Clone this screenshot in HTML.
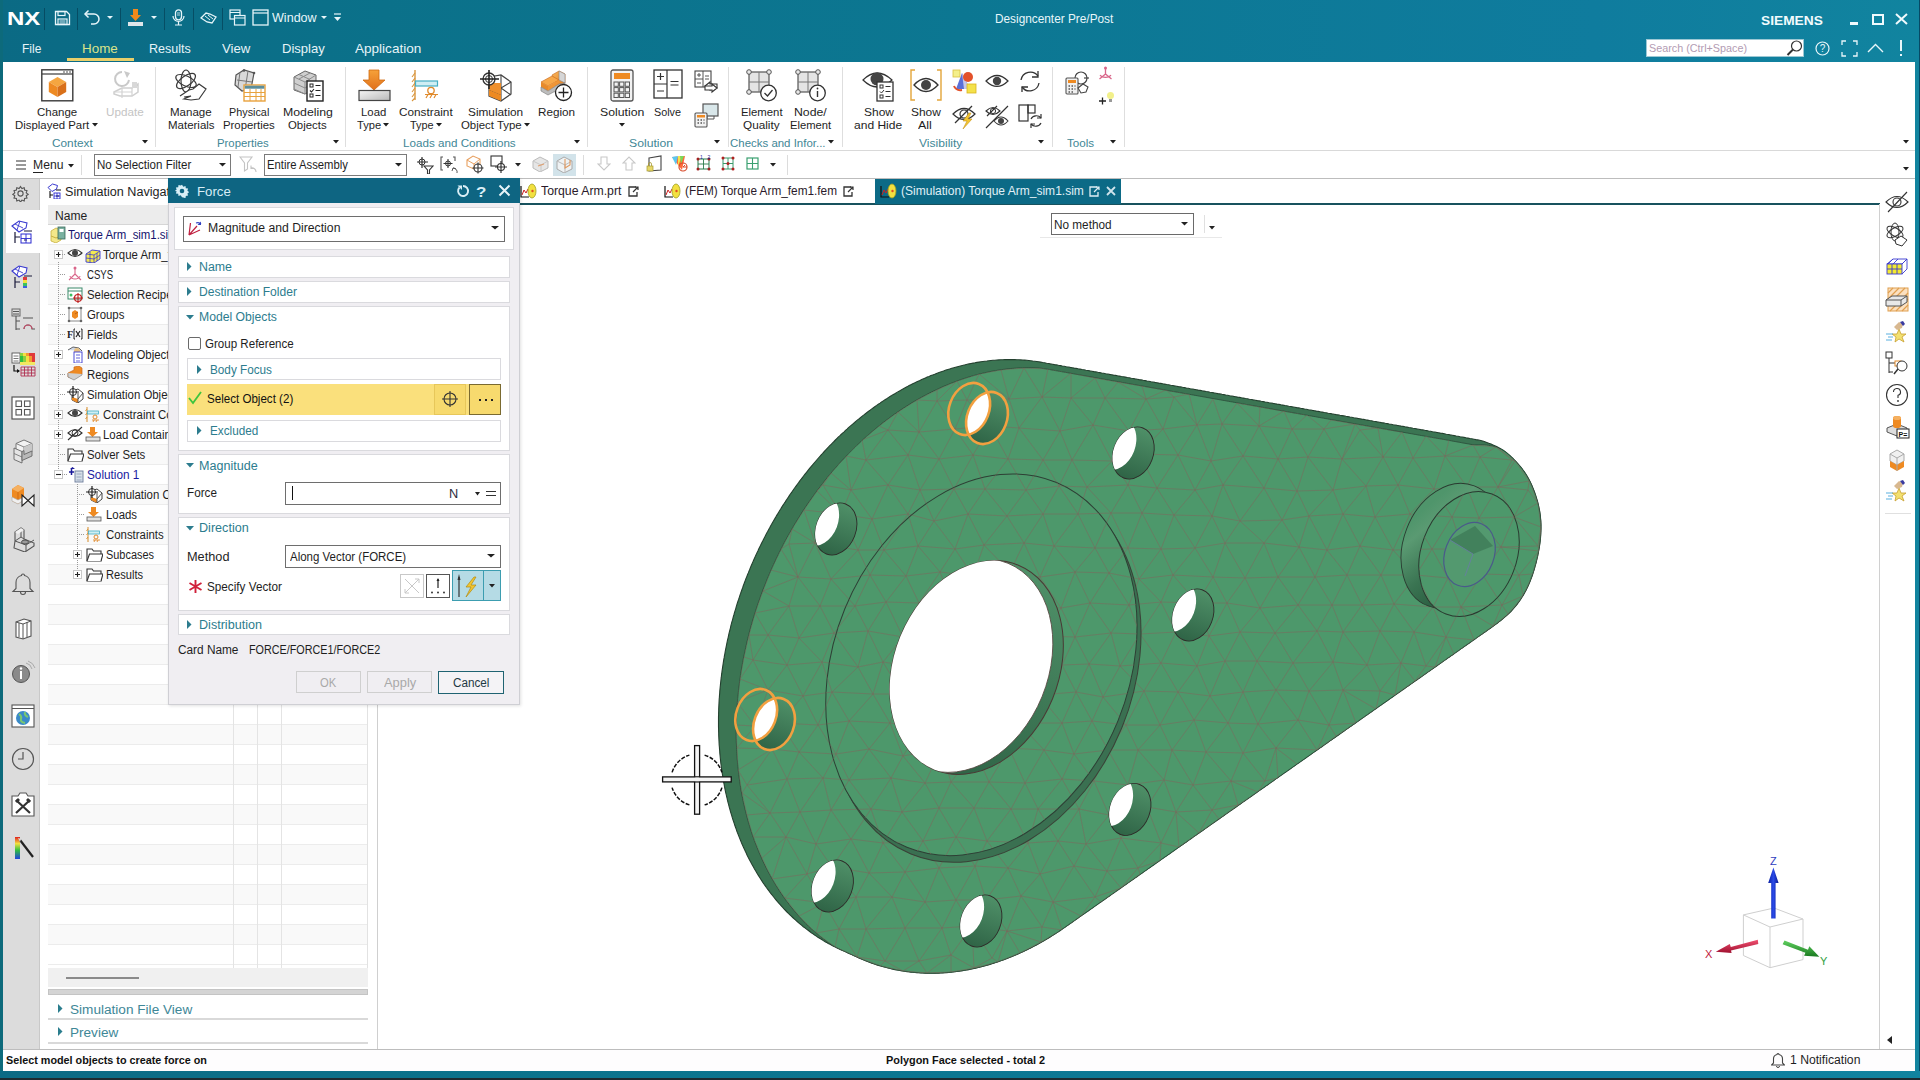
<!DOCTYPE html><html><head><meta charset="utf-8"><title>NX</title><style>
*{box-sizing:border-box}
html,body{margin:0;padding:0}
body{width:1920px;height:1080px;overflow:hidden;position:relative;background:#fff;font-family:"Liberation Sans",sans-serif}
body>div,body>svg{position:absolute}
.t{white-space:pre;transform-origin:0 50%}
</style></head><body><div style="left:0px;top:0px;width:1920px;height:62px;background:linear-gradient(90deg,#0b6a84 0%,#0b718a 20%,#0c7792 50%,#0f7c9e 83%,#11849f 100%)"></div><div style="left:0px;top:0px;width:3px;height:1080px;background:#0d6a7b"></div><div style="left:1915px;top:0px;width:5px;height:1080px;background:#11849f"></div><div style="left:1919px;top:0px;width:1px;height:1080px;background:#064a66"></div><div style="left:0px;top:1071px;width:1920px;height:9px;background:linear-gradient(90deg,#0b6a84 0%,#0b718a 20%,#0c7792 50%,#0f7c9e 83%,#11849f 100%)"></div><div style="left:0px;top:1078px;width:1920px;height:2px;background:#1d2a30"></div><div style="left:3px;top:62px;width:1912px;height:88px;background:#fff"></div><div style="left:3px;top:150px;width:1912px;height:1px;background:#d9d9d9"></div><div style="left:3px;top:151px;width:1912px;height:27px;background:#fff"></div><div style="left:3px;top:178px;width:1912px;height:1px;background:#bdbdbd"></div><div class="t" style="left:6.5px;top:7.4px;font-size:19px;line-height:24px;color:#ffffff;font-weight:bold;transform:scaleX(1.265);">NX</div><div style="left:44px;top:8px;width:1px;height:22px;background:rgba(0,40,60,0.45)"></div><div style="left:77px;top:8px;width:1px;height:22px;background:rgba(0,40,60,0.45)"></div><div style="left:120px;top:8px;width:1px;height:22px;background:rgba(0,40,60,0.45)"></div><div style="left:164px;top:8px;width:1px;height:22px;background:rgba(0,40,60,0.45)"></div><div style="left:193px;top:8px;width:1px;height:22px;background:rgba(0,40,60,0.45)"></div><div style="left:222px;top:8px;width:1px;height:22px;background:rgba(0,40,60,0.45)"></div><svg style="left:54px;top:10px;" width="17" height="16" viewBox="0 0 17 16"><path d="M1.5 1.5h11l3 3v10h-14z" fill="none" stroke="#e8f6fa" stroke-width="1.3"/><rect x="4" y="1.5" width="7" height="4" fill="none" stroke="#e8f6fa" stroke-width="1.2"/><rect x="4" y="9" width="9" height="5.5" fill="none" stroke="#e8f6fa" stroke-width="1.2"/><path d="M5.5 11h6M5.5 13h6" stroke="#e8f6fa" stroke-width="0.9"/></svg><svg style="left:82px;top:9px;" width="20" height="17" viewBox="0 0 20 17"><path d="M3 5h9a5 5 0 0 1 0 10H9" fill="none" stroke="#e8f6fa" stroke-width="1.5"/><path d="M6.5 1.5L3 5l3.5 3.5" fill="none" stroke="#e8f6fa" stroke-width="1.5"/></svg><svg style="left:107px;top:16px;" width="6" height="4" viewBox="0 0 6 4"><path d="M0 0h6l-3.0 3.0z" fill="#e8f6fa"/></svg><svg style="left:127px;top:9px;" width="17" height="17" viewBox="0 0 17 17"><path d="M6 0h5v6h3l-5.5 6L3 6h3z" fill="#f08a1c"/><rect x="1" y="13" width="15" height="4" fill="#dfe6ea"/></svg><svg style="left:151px;top:16px;" width="6" height="4" viewBox="0 0 6 4"><path d="M0 0h6l-3.0 3.0z" fill="#e8f6fa"/></svg><svg style="left:172px;top:9px;" width="13" height="17" viewBox="0 0 13 17"><rect x="3.5" y="0.8" width="6" height="10" rx="3" fill="none" stroke="#e8f6fa" stroke-width="1.3"/><path d="M1 7a5.5 5.5 0 0 0 11 0M6.5 12.5v3M3 16h7" fill="none" stroke="#e8f6fa" stroke-width="1.2"/><path d="M5 4h3M5 6h3" stroke="#e8f6fa" stroke-width="0.8"/></svg><svg style="left:200px;top:11px;" width="17" height="14" viewBox="0 0 17 14"><path d="M1 7l5-5 4 1 6 3-4 6-5-1z" fill="none" stroke="#e8f6fa" stroke-width="1.3"/><path d="M5 5l5 4M8 4l5 4" stroke="#e8f6fa" stroke-width="1"/></svg><svg style="left:229px;top:9px;" width="17" height="17" viewBox="0 0 17 17"><rect x="1" y="1" width="10" height="9" fill="none" stroke="#e8f6fa" stroke-width="1.2"/><rect x="5.5" y="6.5" width="10.5" height="9.5" fill="#0b718a" stroke="#e8f6fa" stroke-width="1.2"/><path d="M1 3.5h10M5.5 9h10.5" stroke="#e8f6fa" stroke-width="1.1"/></svg><svg style="left:252px;top:9px;" width="17" height="17" viewBox="0 0 17 17"><rect x="1" y="1" width="15" height="15" fill="none" stroke="#e8f6fa" stroke-width="1.3"/><path d="M1 4h15" stroke="#e8f6fa" stroke-width="1.2"/></svg><div class="t" style="left:272.4px;top:10.8px;font-size:12px;line-height:15px;color:#e8f6fa;transform:scaleX(1.047);">Window</div><svg style="left:321px;top:16px;" width="6" height="4" viewBox="0 0 6 4"><path d="M0 0h6l-3.0 3.0z" fill="#e8f6fa"/></svg><svg style="left:334px;top:13px;" width="7" height="9" viewBox="0 0 7 9"><path d="M0 1h7" stroke="#e8f6fa" stroke-width="1.2"/><path d="M0 4h7l-3.5 4z" fill="#e8f6fa"/></svg><div class="t" style="left:995.4px;top:10.7px;font-size:12.5px;line-height:16px;color:#e8f6fa;transform:scaleX(0.946);">Designcenter Pre/Post</div><div class="t" style="left:1761.3px;top:12.5px;font-size:13px;line-height:16px;color:#f2fbfd;font-weight:bold;transform:scaleX(1.056);">SIEMENS</div><div style="left:1850px;top:22px;width:8px;height:3px;background:#f0fafd"></div><div style="left:1872px;top:14px;width:12px;height:11px;border:2px solid #f0fafd"></div><svg style="left:1895px;top:13px;" width="13" height="12" viewBox="0 0 13 12"><path d="M1 1l11 10M12 1L1 11" stroke="#f0fafd" stroke-width="2"/></svg><div style="left:1646px;top:39px;width:158px;height:18px;background:#fff;border:1px solid #9cc8d4"></div><div class="t" style="left:1648.5px;top:41.2px;font-size:11px;line-height:14px;color:#b39cb3;transform:scaleX(0.981);">Search (Ctrl+Space)</div><svg style="left:1786px;top:40px;" width="17" height="16" viewBox="0 0 17 16"><circle cx="10.5" cy="6" r="5" fill="none" stroke="#333" stroke-width="1.2"/><path d="M7 9.5L1.5 15" stroke="#333" stroke-width="2"/></svg><svg style="left:1815px;top:41px;" width="16" height="15" viewBox="0 0 16 15"><circle cx="7.5" cy="7.5" r="6.5" fill="none" stroke="#e8f6fa" stroke-width="1.2"/><text x="7.5" y="11.3" font-size="10" text-anchor="middle" fill="#e8f6fa" font-family="Liberation Sans">?</text></svg><svg style="left:1841px;top:40px;" width="17" height="17" viewBox="0 0 17 17"><path d="M1 5V1h4M12 1h4v4M16 12v4h-4M5 16H1v-4" fill="none" stroke="#e8f6fa" stroke-width="1.3"/></svg><svg style="left:1867px;top:43px;" width="17" height="10" viewBox="0 0 17 10"><path d="M1 9l7.5-7.5L16 9" fill="none" stroke="#e8f6fa" stroke-width="1.4"/></svg><div style="left:1900px;top:40px;width:2px;height:11px;background:#e8f6fa"></div><div style="left:1900px;top:54px;width:2px;height:2px;background:#e8f6fa"></div><div class="t" style="left:22.4px;top:40.5px;font-size:13px;line-height:16px;color:#e6f4f8;transform:scaleX(0.921);">File</div><div class="t" style="left:82.3px;top:40.5px;font-size:13px;line-height:16px;color:#d9e38a;transform:scaleX(1.032);">Home</div><div style="left:67px;top:58px;width:67px;height:3px;background:#e9cf6a"></div><div class="t" style="left:149.3px;top:40.5px;font-size:13px;line-height:16px;color:#e6f4f8;transform:scaleX(0.964);">Results</div><div class="t" style="left:222.3px;top:40.5px;font-size:13px;line-height:16px;color:#e6f4f8;transform:scaleX(1.013);">View</div><div class="t" style="left:281.9px;top:40.5px;font-size:13px;line-height:16px;color:#e6f4f8;transform:scaleX(1.004);">Display</div><div class="t" style="left:355.4px;top:40.5px;font-size:13px;line-height:16px;color:#e6f4f8;transform:scaleX(1.042);">Application</div><div class="t" style="left:36.9px;top:105.0px;font-size:11.5px;line-height:14px;color:#1e1e1e;transform:scaleX(0.997);">Change</div><div class="t" style="left:15.4px;top:118.0px;font-size:11.5px;line-height:14px;color:#1e1e1e;transform:scaleX(0.992);">Displayed Part</div><svg style="left:92px;top:123px;" width="6" height="4" viewBox="0 0 6 4"><path d="M0 0h6l-3.0 3.5z" fill="#1e1e1e"/></svg><div class="t" style="left:105.9px;top:105.0px;font-size:11.5px;line-height:14px;color:#c4c4c4;transform:scaleX(1.015);">Update</div><div class="t" style="left:51.9px;top:135.5px;font-size:11.5px;line-height:14px;color:#3f8796;transform:scaleX(1.026);">Context</div><svg style="left:142px;top:139.5px;" width="6" height="4" viewBox="0 0 6 4"><path d="M0 0h6l-3.0 3.5z" fill="#1e1e1e"/></svg><div style="left:155px;top:67px;width:1px;height:80px;background:#dedede"></div><div class="t" style="left:170.1px;top:105.0px;font-size:11.5px;line-height:14px;color:#1e1e1e;transform:scaleX(1.002);">Manage</div><div class="t" style="left:168.1px;top:118.0px;font-size:11.5px;line-height:14px;color:#1e1e1e;transform:scaleX(0.998);">Materials</div><div class="t" style="left:229.0px;top:105.0px;font-size:11.5px;line-height:14px;color:#1e1e1e;transform:scaleX(0.941);">Physical</div><div class="t" style="left:223.2px;top:118.0px;font-size:11.5px;line-height:14px;color:#1e1e1e;transform:scaleX(0.988);">Properties</div><div class="t" style="left:283.2px;top:105.0px;font-size:11.5px;line-height:14px;color:#1e1e1e;transform:scaleX(1.069);">Modeling</div><div class="t" style="left:288.2px;top:118.0px;font-size:11.5px;line-height:14px;color:#1e1e1e;transform:scaleX(0.991);">Objects</div><div class="t" style="left:216.9px;top:135.5px;font-size:11.5px;line-height:14px;color:#3f8796;transform:scaleX(0.985);">Properties</div><svg style="left:333px;top:139.5px;" width="6" height="4" viewBox="0 0 6 4"><path d="M0 0h6l-3.0 3.5z" fill="#1e1e1e"/></svg><div style="left:345px;top:67px;width:1px;height:80px;background:#dedede"></div><div class="t" style="left:360.9px;top:105.0px;font-size:11.5px;line-height:14px;color:#1e1e1e;transform:scaleX(0.987);">Load</div><div class="t" style="left:357.4px;top:118.0px;font-size:11.5px;line-height:14px;color:#1e1e1e;transform:scaleX(0.969);">Type</div><svg style="left:383px;top:123px;" width="6" height="4" viewBox="0 0 6 4"><path d="M0 0h6l-3.0 3.5z" fill="#1e1e1e"/></svg><div class="t" style="left:399.4px;top:105.0px;font-size:11.5px;line-height:14px;color:#1e1e1e;transform:scaleX(1.024);">Constraint</div><div class="t" style="left:410.0px;top:118.0px;font-size:11.5px;line-height:14px;color:#1e1e1e;transform:scaleX(0.945);">Type</div><svg style="left:436px;top:123px;" width="6" height="4" viewBox="0 0 6 4"><path d="M0 0h6l-3.0 3.5z" fill="#1e1e1e"/></svg><div class="t" style="left:467.9px;top:105.0px;font-size:11.5px;line-height:14px;color:#1e1e1e;transform:scaleX(1.027);">Simulation</div><div class="t" style="left:460.9px;top:118.0px;font-size:11.5px;line-height:14px;color:#1e1e1e;transform:scaleX(0.992);">Object Type</div><svg style="left:524px;top:123px;" width="6" height="4" viewBox="0 0 6 4"><path d="M0 0h6l-3.0 3.5z" fill="#1e1e1e"/></svg><div class="t" style="left:537.9px;top:105.0px;font-size:11.5px;line-height:14px;color:#1e1e1e;transform:scaleX(1.017);">Region</div><div class="t" style="left:403.2px;top:135.5px;font-size:11.5px;line-height:14px;color:#3f8796;transform:scaleX(1.013);">Loads and Conditions</div><svg style="left:574px;top:139.5px;" width="6" height="4" viewBox="0 0 6 4"><path d="M0 0h6l-3.0 3.5z" fill="#1e1e1e"/></svg><div style="left:587px;top:67px;width:1px;height:80px;background:#dedede"></div><div class="t" style="left:600.0px;top:105.0px;font-size:11.5px;line-height:14px;color:#1e1e1e;transform:scaleX(1.066);">Solution</div><svg style="left:619px;top:123px;" width="6" height="4" viewBox="0 0 6 4"><path d="M0 0h6l-3.0 3.5z" fill="#1e1e1e"/></svg><div class="t" style="left:654.2px;top:105.0px;font-size:11.5px;line-height:14px;color:#1e1e1e;transform:scaleX(0.939);">Solve</div><div class="t" style="left:628.9px;top:135.5px;font-size:11.5px;line-height:14px;color:#3f8796;transform:scaleX(1.062);">Solution</div><svg style="left:714px;top:139.5px;" width="6" height="4" viewBox="0 0 6 4"><path d="M0 0h6l-3.0 3.5z" fill="#1e1e1e"/></svg><div style="left:728px;top:67px;width:1px;height:80px;background:#dedede"></div><div class="t" style="left:740.9px;top:105.0px;font-size:11.5px;line-height:14px;color:#1e1e1e;transform:scaleX(0.985);">Element</div><div class="t" style="left:742.9px;top:118.0px;font-size:11.5px;line-height:14px;color:#1e1e1e;transform:scaleX(1.024);">Quality</div><div class="t" style="left:793.8px;top:105.0px;font-size:11.5px;line-height:14px;color:#1e1e1e;transform:scaleX(1.067);">Node/</div><div class="t" style="left:790.0px;top:118.0px;font-size:11.5px;line-height:14px;color:#1e1e1e;transform:scaleX(0.975);">Element</div><div class="t" style="left:730.0px;top:135.5px;font-size:11.5px;line-height:14px;color:#3f8796;transform:scaleX(0.996);">Checks and Infor...</div><svg style="left:828px;top:139.5px;" width="6" height="4" viewBox="0 0 6 4"><path d="M0 0h6l-3.0 3.5z" fill="#1e1e1e"/></svg><div style="left:842px;top:67px;width:1px;height:80px;background:#dedede"></div><div class="t" style="left:863.6px;top:105.0px;font-size:11.5px;line-height:14px;color:#1e1e1e;transform:scaleX(1.041);">Show</div><div class="t" style="left:854.4px;top:118.0px;font-size:11.5px;line-height:14px;color:#1e1e1e;transform:scaleX(1.046);">and Hide</div><div class="t" style="left:910.7px;top:105.0px;font-size:11.5px;line-height:14px;color:#1e1e1e;transform:scaleX(1.038);">Show</div><div class="t" style="left:918.4px;top:118.0px;font-size:11.5px;line-height:14px;color:#1e1e1e;transform:scaleX(1.084);">All</div><div class="t" style="left:919.2px;top:135.5px;font-size:11.5px;line-height:14px;color:#3f8796;transform:scaleX(1.050);">Visibility</div><svg style="left:1038px;top:139.5px;" width="6" height="4" viewBox="0 0 6 4"><path d="M0 0h6l-3.0 3.5z" fill="#1e1e1e"/></svg><div style="left:1052px;top:67px;width:1px;height:80px;background:#dedede"></div><div class="t" style="left:1067.4px;top:135.5px;font-size:11.5px;line-height:14px;color:#3f8796;transform:scaleX(1.011);">Tools</div><svg style="left:1110px;top:139.5px;" width="6" height="4" viewBox="0 0 6 4"><path d="M0 0h6l-3.0 3.5z" fill="#1e1e1e"/></svg><div style="left:1124px;top:67px;width:1px;height:80px;background:#dedede"></div><svg style="left:1903px;top:139.5px;" width="6" height="4" viewBox="0 0 6 4"><path d="M0 0h6l-3.0 3.5z" fill="#1e1e1e"/></svg><svg style="left:1903px;top:167px;" width="6" height="4" viewBox="0 0 6 4"><path d="M0 0h6l-3.0 3.5z" fill="#1e1e1e"/></svg><svg style="left:41px;top:69px;" width="33" height="33" viewBox="0 0 33 33"><rect x="0.8" y="0.8" width="31" height="31" fill="#fff" stroke="#3a3a3a" stroke-width="1.4"/><path d="M0.8 5h31" stroke="#3a3a3a" stroke-width="1.2"/><circle cx="23" cy="3" r="0.8" fill="#3a3a3a"/><circle cx="26" cy="3" r="0.8" fill="#3a3a3a"/><circle cx="29" cy="3" r="0.8" fill="#3a3a3a"/><path d="M16.5 8L25.2 13.0L16.5 18L7.800000000000001 13.0z" fill="#f5a640"/><path d="M7.800000000000001 13.0L16.5 18L16.5 28L7.800000000000001 23.0z" fill="#ee8a22"/><path d="M25.2 13.0L16.5 18L16.5 28L25.2 23.0z" fill="#d9701a"/></svg><svg style="left:110px;top:70px;" width="32" height="31" viewBox="0 0 32 31"><path d="M12 2a7 7 0 1 0 7 8" fill="none" stroke="#c9c9c9" stroke-width="2"/><path d="M14 1l6 2-3 5z" fill="#c9c9c9"/><path d="M4 22l8-4 10 0 6-4v8l-6 4H10l-6-2z" fill="none" stroke="#cfcfcf" stroke-width="1.5"/><path d="M12 18v10M22 18v8M4 22h18" stroke="#d3d3d3" stroke-width="1.2"/><rect x="22" y="12" width="5" height="6" fill="#d8d8d8"/></svg><svg style="left:174px;top:69px;" width="34" height="33" viewBox="0 0 34 33"><ellipse cx="12" cy="12" rx="11" ry="5" fill="none" stroke="#3a3a3a" stroke-width="1.2" transform="rotate(25 12 12)"/><ellipse cx="12" cy="12" rx="11" ry="5" fill="none" stroke="#3a3a3a" stroke-width="1.2" transform="rotate(-35 12 12)"/><ellipse cx="12" cy="12" rx="5" ry="11" fill="none" stroke="#3a3a3a" stroke-width="1.2"/><path d="M6 27l9-6 4-1 6-5 7 5-7 10-8 1-7-1 7-3-7 1" fill="#fff" stroke="#3a3a3a" stroke-width="1.2"/></svg><svg style="left:233px;top:69px;" width="33" height="33" viewBox="0 0 33 33"><path d="M3 6l8-5 10 3-3 16-9 2-7-6z" fill="#d9d9d9" stroke="#555" stroke-width="1.2"/><path d="M7 3l-2 15M15 2l-3 19M4 11l15 2" stroke="#777" stroke-width="1"/><circle cx="11" cy="1.5" r="1.3" fill="#555"/><circle cx="21" cy="4" r="1.3" fill="#555"/><rect x="11" y="16" width="21" height="16" fill="#fff" stroke="#e8a23c" stroke-width="1.4"/><rect x="11.7" y="16.7" width="19.6" height="3" fill="#5b8e9c"/><path d="M11 23.5h21M11 27.5h21M17 20v12M23 20v12M28 20v12" stroke="#e8a23c" stroke-width="1"/></svg><svg style="left:292px;top:69px;" width="33" height="33" viewBox="0 0 33 33"><path d="M2 8l11-6 11 4v13l-11 6-11-4z" fill="#cfcfcf" stroke="#666" stroke-width="1"/><path d="M2 8l11 5 11-7M13 13v12M7 5.5l11 5M18 4l-11 6M2 14l11 5 11-7M2 20l11 5" stroke="#8a8a8a" stroke-width="1" fill="none"/><rect x="15" y="12" width="16" height="20" fill="#fff" stroke="#222" stroke-width="1.4"/><rect x="18" y="15" width="3" height="3" fill="none" stroke="#222"/><rect x="18" y="25" width="3" height="3" fill="none" stroke="#222"/><path d="M18 21.5l1.5 1.5 2.5-3M23.5 16.5h5M23.5 21.5h5M23.5 26.5h5" stroke="#222" stroke-width="1.1" fill="none"/></svg><svg style="left:358px;top:69px;" width="33" height="33" viewBox="0 0 33 33"><defs><linearGradient id="ga" x1="0" y1="0" x2="0" y2="1"><stop offset="0" stop-color="#f6a23a"/><stop offset="1" stop-color="#e0701a"/></linearGradient><linearGradient id="gb" x1="0" y1="0" x2="1" y2="1"><stop offset="0" stop-color="#f4f4f4"/><stop offset="1" stop-color="#b8b8b8"/></linearGradient></defs><path d="M11 1h10v10h6l-11 10L5 11h6z" fill="url(#ga)" stroke="#d06a10" stroke-width="0.8"/><rect x="1" y="21.5" width="31" height="10" fill="url(#gb)" stroke="#444" stroke-width="1.2"/></svg><svg style="left:410px;top:69px;" width="32" height="33" viewBox="0 0 32 33"><path d="M5 1v30" stroke="#d9963e" stroke-width="1.4"/><path d="M5 4l-3 4M5 9l-3 4M5 14l-3 4M5 19l-3 4M5 24l-3 4M5 29l-3 3" stroke="#d9963e" stroke-width="1.1"/><rect x="5.5" y="12" width="22" height="5" fill="#cfeef4" stroke="#46aec4" stroke-width="1.2"/><circle cx="21" cy="21.5" r="3.2" fill="none" stroke="#e08a2c" stroke-width="1.3"/><path d="M15 25.5h13M16 29l2-3.5M20 29l2-3.5M24 29l2-3.5" stroke="#e08a2c" stroke-width="1.2"/></svg><svg style="left:479px;top:69px;" width="33" height="33" viewBox="0 0 33 33"><path d="M10 8l12 -2 10 7v12l-10 7-12-5z" fill="#fff" stroke="#444" stroke-width="1.2"/><path d="M10 21l12 5M22 6v26M22 19l10-6M22 19l10 7" stroke="#444" stroke-width="1.1" fill="none"/><path d="M10 21l12 5v6l-12-5z" fill="#ee8a22"/><path d="M10 14h12v12l-12-5z" fill="#ee8a22" opacity="0.95"/><circle cx="10" cy="10" r="6" fill="#fff" stroke="#333" stroke-width="1.3"/><circle cx="10" cy="10" r="3.5" fill="none" stroke="#333" stroke-width="1"/><path d="M10 1v19M1 10h19" stroke="#222" stroke-width="1.6"/></svg><svg style="left:540px;top:69px;" width="33" height="33" viewBox="0 0 33 33"><defs><linearGradient id="rg1" x1="0" y1="0" x2="1" y2="1"><stop offset="0" stop-color="#f7b860"/><stop offset="1" stop-color="#e57a1a"/></linearGradient></defs><path d="M12 6l7-4 6 3v9l-7 4z" fill="url(#rg1)" stroke="#c8661a" stroke-width="0.6"/><path d="M19 2l6 3v9l-6-3z" fill="#d6d6d6" stroke="#888" stroke-width="0.6"/><path d="M1 13l11-6 7 4-11 6z" fill="#f6a84a" stroke="#c8661a" stroke-width="0.6"/><path d="M1 13l7 4v5l-7-4z" fill="#e88a2a"/><path d="M8 17l11-6v4l-11 7z" fill="#ef9536"/><path d="M1 18l7 4 11-7 6-1v3l-17 9-7-4z" fill="#bdbdbd" stroke="#777" stroke-width="0.6"/><circle cx="23.5" cy="23.5" r="8" fill="#fff" stroke="#222" stroke-width="1.3"/><path d="M23.5 18.5v10M18.5 23.5h10" stroke="#222" stroke-width="1.3"/></svg><svg style="left:610px;top:69px;" width="24" height="33" viewBox="0 0 24 33"><rect x="1" y="1" width="22" height="31" rx="2" fill="#f2f2f2" stroke="#555" stroke-width="1.3"/><rect x="4" y="4" width="16" height="6" fill="#ee8a22"/><rect x="4.0" y="13.0" width="4.3" height="4.3" fill="none" stroke="#555" stroke-width="1"/><rect x="9.6" y="13.0" width="4.3" height="4.3" fill="none" stroke="#555" stroke-width="1"/><rect x="15.2" y="13.0" width="4.3" height="4.3" fill="none" stroke="#555" stroke-width="1"/><rect x="4.0" y="18.6" width="4.3" height="4.3" fill="none" stroke="#555" stroke-width="1"/><rect x="9.6" y="18.6" width="4.3" height="4.3" fill="none" stroke="#555" stroke-width="1"/><rect x="15.2" y="18.6" width="4.3" height="4.3" fill="none" stroke="#555" stroke-width="1"/><rect x="4.0" y="24.2" width="4.3" height="4.3" fill="none" stroke="#555" stroke-width="1"/><rect x="9.6" y="24.2" width="4.3" height="4.3" fill="none" stroke="#555" stroke-width="1"/><rect x="15.2" y="24.2" width="4.3" height="4.3" fill="none" stroke="#555" stroke-width="1"/></svg><svg style="left:653px;top:69px;" width="30" height="30" viewBox="0 0 30 30"><rect x="1" y="1" width="28" height="28" fill="#fff" stroke="#333" stroke-width="1.3"/><path d="M14 1v28M1 15h13" stroke="#333" stroke-width="1.2"/><path d="M7.5 4v7M4 7.5h7M4 22h7M17.5 12.5h8M17.5 16h8" stroke="#333" stroke-width="1.2"/></svg><svg style="left:694px;top:70px;" width="25" height="24" viewBox="0 0 25 24"><rect x="1" y="1" width="16" height="16" fill="#fff" stroke="#444" stroke-width="1.1"/><path d="M9 1v16M1 9h8M5 3v4M3 5h4M3 13h4M11 6h4M11 9h4" stroke="#444" stroke-width="0.9"/><path d="M11 16l5-4v2h7v4h-7v2z" fill="#fff" stroke="#333" stroke-width="1.1"/><path d="M23 18l-5 4v-2h-7v-4h7v-2z" fill="#fff" stroke="#333" stroke-width="1.1"/></svg><svg style="left:694px;top:103px;" width="25" height="25" viewBox="0 0 25 25"><rect x="9" y="1" width="15" height="12" fill="#d9e7ea" stroke="#555" stroke-width="1.2"/><path d="M13 13v3h7v-3" stroke="#555" fill="none"/><rect x="1" y="10" width="12" height="14" rx="1" fill="#f2f2f2" stroke="#555" stroke-width="1.1"/><rect x="3" y="12" width="8" height="2.5" fill="#ee8a22"/><path d="M3.5 17h1.5M6.5 17h1.5M9.5 17h1M3.5 20h1.5M6.5 20h1.5M9.5 20h1" stroke="#555" stroke-width="1.5"/></svg><svg style="left:745px;top:69px;" width="33" height="33" viewBox="0 0 33 33"><rect x="4" y="3" width="20" height="20" fill="#e4e4e4" stroke="#555" stroke-width="1.2"/><path d="M14 3v20M4 13h20" stroke="#777" stroke-width="1"/><circle cx="4" cy="3" r="2.3" fill="#e8e8e8" stroke="#555" stroke-width="1"/><circle cx="24" cy="3" r="2.3" fill="#e8e8e8" stroke="#555" stroke-width="1"/><circle cx="4" cy="23" r="2.3" fill="#e8e8e8" stroke="#555" stroke-width="1"/><circle cx="23.5" cy="24" r="7.8" fill="#fff" stroke="#333" stroke-width="1.3"/><path d="M19.5 24l3 3 5-6" fill="none" stroke="#333" stroke-width="1.3"/></svg><svg style="left:794px;top:69px;" width="33" height="33" viewBox="0 0 33 33"><rect x="4" y="3" width="20" height="20" fill="#e4e4e4" stroke="#555" stroke-width="1.2"/><path d="M14 3v20M4 13h20" stroke="#777" stroke-width="1"/><circle cx="4" cy="3" r="2.3" fill="#e8e8e8" stroke="#555" stroke-width="1"/><circle cx="24" cy="3" r="2.3" fill="#e8e8e8" stroke="#555" stroke-width="1"/><circle cx="4" cy="23" r="2.3" fill="#e8e8e8" stroke="#555" stroke-width="1"/><circle cx="23.5" cy="24" r="7.8" fill="#fff" stroke="#333" stroke-width="1.3"/><path d="M23.5 22v6" stroke="#333" stroke-width="1.4"/><circle cx="23.5" cy="19.5" r="0.9" fill="#333"/></svg><svg style="left:862px;top:69px;" width="33" height="33" viewBox="0 0 33 33"><path d="M1 11Q15 -3 30 11Q15 25 1 11z" fill="#fff" stroke="#333" stroke-width="1.2"/><circle cx="15" cy="10" r="6.5" fill="#444"/><rect x="15" y="13" width="16" height="19" fill="#fff" stroke="#333" stroke-width="1.3"/><rect x="18" y="16" width="3" height="3" fill="none" stroke="#333"/><rect x="18" y="26" width="3" height="3" fill="none" stroke="#333"/><path d="M18 22.5l1.5 1.5 2.5-3M23.5 17.5h5M23.5 22.5h5M23.5 27.5h5" stroke="#333" stroke-width="1" fill="none"/></svg><svg style="left:910px;top:69px;" width="32" height="32" viewBox="0 0 32 32"><path d="M5 1H1v30h4M27 1h4v30h-4" fill="none" stroke="#e3a53a" stroke-width="1.4"/><path d="M4 16Q16 3 28 16Q16 29 4 16z" fill="#fff" stroke="#333" stroke-width="1.3"/><circle cx="16" cy="16" r="5" fill="#444"/></svg><svg style="left:952px;top:69px;" width="25" height="25" viewBox="0 0 25 25"><path d="M10 4l8 16H4z" fill="#5b6fd6"/><path d="M10 4l8 16h-6z" fill="#c8c8e8"/><circle cx="16" cy="8" r="5" fill="#e3512a"/><rect x="1" y="1" width="7" height="7" fill="#f4ef8a" stroke="#d9c040" stroke-width="0.8"/><rect x="15" y="15" width="9" height="9" fill="#f4e14a" stroke="#d9b520" stroke-width="0.8"/><path d="M2 17q2 5 8 4" stroke="#e3512a" stroke-width="2" fill="none"/></svg><svg style="left:985px;top:73px;" width="24" height="16" viewBox="0 0 24 16"><path d="M1 8Q12 -3 23 8Q12 19 1 8z" fill="#fff" stroke="#333" stroke-width="1.2"/><circle cx="12" cy="8" r="4.2" fill="#444"/></svg><svg style="left:1018px;top:70px;" width="25" height="24" viewBox="0 0 25 24"><path d="M20 6A9.5 9.5 0 0 0 3 10" fill="none" stroke="#333" stroke-width="1.3"/><path d="M4 17A9.5 9.5 0 0 0 21 13" fill="none" stroke="#333" stroke-width="1.3"/><path d="M20 1v6h-6" fill="none" stroke="#333" stroke-width="1.3"/><path d="M4 22v-5h6" fill="none" stroke="#333" stroke-width="1.3"/></svg><svg style="left:952px;top:104px;" width="25" height="25" viewBox="0 0 25 25"><path d="M1 10Q12 -1 23 10Q12 21 1 10z" fill="none" stroke="#333" stroke-width="1.2"/><circle cx="12" cy="10" r="4" fill="none" stroke="#333" stroke-width="1.2"/><path d="M3 19L20 2" stroke="#333" stroke-width="1.2"/><path d="M17 9l-6 8h4l-4 8 9-10h-4l3-6z" fill="#f2c531" stroke="#c9951a" stroke-width="0.6"/></svg><svg style="left:985px;top:104px;" width="24" height="25" viewBox="0 0 24 25"><path d="M1 7Q8 0 15 7Q8 14 1 7z" fill="none" stroke="#333" stroke-width="1.1"/><circle cx="8" cy="7" r="2.6" fill="none" stroke="#333"/><path d="M2 12L12 2M1 24L23 2" stroke="#333" stroke-width="1.2"/><path d="M9 17Q16 9 23 17Q16 25 9 17z" fill="#fff" stroke="#333" stroke-width="1.1"/><circle cx="16" cy="17" r="3" fill="#444"/></svg><svg style="left:1018px;top:104px;" width="25" height="25" viewBox="0 0 25 25"><rect x="1" y="1" width="9" height="16" fill="none" stroke="#333" stroke-width="1.2"/><rect x="10" y="1" width="7" height="8" fill="none" stroke="#333" stroke-width="1.2"/><path d="M23 14a6 6 0 0 0-10 1M13 20a6 6 0 0 0 10-1" fill="none" stroke="#333" stroke-width="1.2"/><path d="M23 10v4h-4M13 24v-4h4" fill="none" stroke="#333" stroke-width="1.2"/></svg><svg style="left:1065px;top:70px;" width="25" height="25" viewBox="0 0 25 25"><circle cx="16" cy="8" r="6" fill="none" stroke="#444" stroke-width="1.2"/><path d="M19 8h5" stroke="#444" stroke-width="1.2"/><rect x="1" y="8" width="12" height="16" rx="1" fill="#f0f0f0" stroke="#555" stroke-width="1.1"/><rect x="3" y="10" width="8" height="3" fill="#ee8a22"/><path d="M3.5 16h1.5M6.5 16h1.5M9.5 16h1M3.5 19h1.5M6.5 19h1.5M9.5 19h1M3.5 22h1.5M6.5 22h1.5" stroke="#555" stroke-width="1.5"/><path d="M13 18l5-4 5 3-2 5-5 1z" fill="#fff" stroke="#444" stroke-width="1.1"/></svg><svg style="left:1097px;top:66px;" width="17" height="16" viewBox="0 0 17 16"><path d="M8.5 8V2M8.5 8l-6 5M8.5 8l6 5" stroke="#d9668a" stroke-width="1.3"/><circle cx="8.5" cy="2" r="1.5" fill="#d9668a"/><path d="M3 9a6 4 0 0 0 11 0" fill="none" stroke="#d9668a" stroke-width="1.1"/></svg><svg style="left:1098px;top:91px;" width="17" height="15" viewBox="0 0 17 15"><path d="M1 10h7M4.5 6.5v7" stroke="#222" stroke-width="1.3"/><circle cx="12.5" cy="4.5" r="3.5" fill="#f2f08a"/><rect x="11" y="8" width="3" height="3" fill="#999"/></svg><svg style="left:16px;top:160px;" width="11" height="10" viewBox="0 0 11 10"><path d="M0 1h10M0 5h10M0 9h10" stroke="#333" stroke-width="1.2"/></svg><div class="t" style="left:32.7px;top:158.3px;font-size:12px;line-height:15px;color:#1e1e1e;transform:scaleX(1.013);">Menu</div><div style="left:33px;top:172px;width:10px;height:1px;background:#222"></div><svg style="left:68px;top:164px;" width="6" height="4" viewBox="0 0 6 4"><path d="M0 0h6l-3.0 3.5z" fill="#1e1e1e"/></svg><div style="left:81px;top:155px;width:1px;height:20px;background:#dcdcdc"></div><div style="left:94px;top:154px;width:137px;height:22px;background:#fff;border:1px solid #7a7a7a"></div><div class="t" style="left:96.9px;top:158.3px;font-size:12px;line-height:15px;color:#1e1e1e;transform:scaleX(0.962);">No Selection Filter</div><svg style="left:219px;top:163px;" width="7" height="4" viewBox="0 0 7 4"><path d="M0 0h7l-3.5 3.5z" fill="#222"/></svg><svg style="left:239px;top:156px;" width="18" height="18" viewBox="0 0 18 18"><path d="M1 1h12l-4.5 6v6l-3 2V7z" fill="none" stroke="#c3c3c3" stroke-width="1.1"/><path d="M17 16a4 4 0 0 0-5-4M12 9.5v3h3" fill="none" stroke="#c3c3c3" stroke-width="1.1"/></svg><div style="left:264px;top:154px;width:143px;height:22px;background:#fff;border:1px solid #7a7a7a"></div><div class="t" style="left:266.7px;top:158.3px;font-size:12px;line-height:15px;color:#1e1e1e;transform:scaleX(0.940);">Entire Assembly</div><svg style="left:395px;top:163px;" width="7" height="4" viewBox="0 0 7 4"><path d="M0 0h7l-3.5 3.5z" fill="#222"/></svg><svg style="left:416px;top:156px;" width="18" height="18" viewBox="0 0 18 18"><path d="M6 1v11M1 6h11" stroke="#333" stroke-width="1.2"/><circle cx="6" cy="6" r="3" fill="none" stroke="#333"/><path d="M8 10h9l-3.5 4v3.5l-2 1V14z" fill="#fff" stroke="#333" stroke-width="1.1"/></svg><svg style="left:440px;top:156px;" width="18" height="18" viewBox="0 0 18 18"><path d="M3 1H1v13h2M13 1h2v4" fill="none" stroke="#555" stroke-width="1.1"/><path d="M8 3v9M3.5 7.5h9" stroke="#333" stroke-width="1.1"/><circle cx="8" cy="7.5" r="2.5" fill="none" stroke="#333"/><path d="M17 17a4 4 0 0 0-4-5M12 15l1 -3 3 1" fill="none" stroke="#555" stroke-width="1"/></svg><svg style="left:466px;top:155px;" width="18" height="19" viewBox="0 0 18 19"><path d="M1 5l6-4 7 3v6l-6 4-7-3z" fill="#fff" stroke="#e8a060" stroke-width="1.1"/><path d="M1 5l7 4 6-5M8 9v5" stroke="#e8a060" stroke-width="1" fill="none"/><circle cx="12" cy="13" r="4" fill="#fff" stroke="#333" stroke-width="1.1"/><path d="M12 7.5v11M6.5 13h11" stroke="#333" stroke-width="1.1"/></svg><svg style="left:490px;top:155px;" width="18" height="19" viewBox="0 0 18 19"><rect x="1" y="1" width="11" height="10" fill="none" stroke="#333" stroke-width="1.1"/><circle cx="11" cy="12" r="3.5" fill="#fff" stroke="#333" stroke-width="1.1"/><path d="M11 6v12M5 12h12" stroke="#333" stroke-width="1.2"/></svg><svg style="left:515px;top:163px;" width="6" height="4" viewBox="0 0 6 4"><path d="M0 0h6l-3.0 3.5z" fill="#222"/></svg><svg style="left:532px;top:156px;" width="17" height="16" viewBox="0 0 17 16"><path d="M1 5l7-4 8 4v7l-8 4-7-4z" fill="#e6e6e6" stroke="#bbb" stroke-width="1"/><path d="M1 5l8 4 7-4M9 9v7" stroke="#c8c8c8" fill="none"/><path d="M6 10l6-2" stroke="#e0a070" stroke-width="1.2"/></svg><div style="left:553px;top:154px;width:23px;height:22px;background:#d2e3ea"></div><svg style="left:556px;top:156px;" width="17" height="17" viewBox="0 0 17 17"><path d="M1 5l7-4 8 4v8l-8 4-7-4z" fill="#eef2f4" stroke="#aaa" stroke-width="1"/><path d="M1 5l8 4 7-4M9 9v8" stroke="#bbb" fill="none"/><path d="M9 3v9l5-3V4" fill="none" stroke="#e09a60" stroke-width="1.1"/></svg><div style="left:583px;top:155px;width:1px;height:20px;background:#dcdcdc"></div><svg style="left:597px;top:156px;" width="14" height="15" viewBox="0 0 14 15"><path d="M4 1h6v7h3l-6 6-6-6h3z" fill="#fff" stroke="#c8c8c8" stroke-width="1.1"/></svg><svg style="left:622px;top:156px;" width="14" height="15" viewBox="0 0 14 15"><path d="M4 14h6V7h3L7 1 1 7h3z" fill="#fff" stroke="#c8c8c8" stroke-width="1.1"/></svg><svg style="left:646px;top:155px;" width="16" height="17" viewBox="0 0 16 17"><path d="M3 3l12-2v14l-12 1z" fill="#fff" stroke="#444" stroke-width="1.1"/><rect x="1" y="11" width="6" height="5" fill="#e6d86a" stroke="#a89a30" stroke-width="0.7"/><path d="M2.5 11V9a1.5 1.5 0 0 1 3 0v2" fill="none" stroke="#a89a30" stroke-width="0.8"/></svg><svg style="left:671px;top:155px;" width="17" height="17" viewBox="0 0 17 17"><path d="M1 2L14 1l-3 14z" fill="#ff6a3a"/><path d="M1 2l6-1 -2 9z" fill="#5ac8f0"/><path d="M7 1l4 0-4 10z" fill="#f2e64a"/><path d="M9 1l4 0-3 8z" fill="#7ad85a"/><circle cx="12" cy="12" r="4" fill="none" stroke="#d84a2a" stroke-width="1.2"/><path d="M16 12l-4 0 2-2" fill="none" stroke="#d84a2a"/></svg><svg style="left:695px;top:155px;" width="17" height="17" viewBox="0 0 17 17"><rect x="3" y="4" width="11" height="10" fill="none" stroke="#2a7a4a" stroke-width="1"/><path d="M8.5 4v10M3 9h11" stroke="#2a7a4a" stroke-width="0.9"/><circle cx="3" cy="4" r="1.5" fill="#a02020"/><circle cx="14" cy="4" r="1.5" fill="#a02020"/><circle cx="3" cy="14" r="1.5" fill="#a02020"/><circle cx="14" cy="14" r="1.5" fill="#a02020"/><text x="5" y="4" font-size="5" fill="#1a2a9a" font-family="Liberation Sans">1</text><text x="12.5" y="4" font-size="5" fill="#1a2a9a" font-family="Liberation Sans">2</text></svg><svg style="left:721px;top:156px;" width="14" height="15" viewBox="0 0 14 15"><rect x="2" y="2" width="10" height="11" fill="none" stroke="#3a9a6a" stroke-width="1"/><path d="M7 2v11M2 7.5h10" stroke="#3a9a6a"/><circle cx="2" cy="2" r="1.5" fill="#b02020"/><circle cx="12" cy="2" r="1.5" fill="#b02020"/><circle cx="2" cy="13" r="1.5" fill="#b02020"/><circle cx="12" cy="13" r="1.5" fill="#b02020"/><circle cx="7" cy="7.5" r="1.5" fill="#b02020"/></svg><svg style="left:746px;top:157px;" width="13" height="13" viewBox="0 0 13 13"><rect x="1" y="1" width="11" height="11" fill="none" stroke="#3aa070" stroke-width="1.2"/><path d="M6.5 1v11M1 6.5h11" stroke="#3aa070" stroke-width="1.1"/></svg><svg style="left:770px;top:163px;" width="6" height="4" viewBox="0 0 6 4"><path d="M0 0h6l-3.0 3.5z" fill="#222"/></svg><div style="left:787px;top:155px;width:1px;height:20px;background:#dcdcdc"></div><div style="left:3px;top:179px;width:36px;height:870px;background:#dcdcdc"></div><div style="left:39px;top:179px;width:1px;height:870px;background:#c9c9c9"></div><div style="left:6px;top:210px;width:34px;height:43px;background:#ffffff"></div><svg style="left:12px;top:185px;" width="17" height="17" viewBox="0 0 17 17"><path d="M8.5 1.5l1.4 2 2.3-.8.4 2.4 2.4.5-.8 2.3 2 1.4-2 1.4.8 2.3-2.4.5-.4 2.4-2.3-.8-1.4 2-1.4-2-2.3.8-.4-2.4-2.4-.5.8-2.3-2-1.4 2-1.4-.8-2.3 2.4-.5.4-2.4 2.3.8z" fill="none" stroke="#555" stroke-width="1.1"/><circle cx="8.5" cy="8.5" r="2.6" fill="none" stroke="#555" stroke-width="1.1"/></svg><svg style="left:11px;top:219px;" width="24" height="25" viewBox="0 0 24 25"><path d="M1 7l7-5 8 2-1 5-7 4z" fill="#fff" stroke="#3a3ad0" stroke-width="1.1"/><path d="M4 5l8 4M9 2l-3 9" stroke="#3a3ad0" stroke-width="0.9"/><path d="M4 13v11M4 18h5M13 12h8M13 21h3" stroke="#1a1a3a" stroke-width="1.2"/><rect x="10" y="15" width="10" height="9" fill="none" stroke="#2a2ad0" stroke-width="1"/><path d="M15 15v9M10 19.5h10" stroke="#2a2ad0" stroke-width="0.9"/></svg><svg style="left:11px;top:264px;" width="24" height="25" viewBox="0 0 24 25"><path d="M1 7l7-5 8 2-1 5-7 4z" fill="#fff" stroke="#3a3ad0" stroke-width="1.1"/><path d="M4 5l8 4M9 2l-3 9" stroke="#3a3ad0" stroke-width="0.9"/><path d="M4 13v11M4 18h5M13 12h8M13 21h3" stroke="#1a1a3a" stroke-width="1.2"/><rect x="12" y="13" width="4" height="11" fill="#e03a3a"/><rect x="12" y="16" width="4" height="3" fill="#f2e040"/><rect x="12" y="19" width="4" height="3" fill="#3ac060"/><rect x="12" y="22" width="4" height="2" fill="#3a60e0"/></svg><svg style="left:11px;top:308px;" width="24" height="23" viewBox="0 0 24 23"><rect x="1" y="1" width="8" height="7" fill="none" stroke="#666" stroke-width="1"/><path d="M2 3.5h6M2 6h6M5 8v14M5 13h4M5 21h4M12 10h10M13 21a4 4 0 0 1 8 0h3" fill="none" stroke="#555" stroke-width="1.1"/><path d="M13 21a4 4 0 0 1 8 0" fill="none" stroke="#d04a6a" stroke-width="1.1"/></svg><svg style="left:11px;top:352px;" width="25" height="25" viewBox="0 0 25 25"><rect x="1" y="1" width="8" height="10" fill="#fff" stroke="#555" stroke-width="0.9"/><path d="M2.5 4h5M2.5 6.5h5M2.5 9h5" stroke="#555" stroke-width="0.8"/><rect x="9" y="1" width="3" height="3" fill="#8ad040"/><rect x="12" y="1" width="3" height="3" fill="#f2e040"/><rect x="15" y="1" width="3" height="3" fill="#f29a30"/><rect x="18" y="1" width="3" height="3" fill="#e03a3a"/><rect x="21" y="1" width="3" height="3" fill="#e03a3a"/><rect x="9" y="4" width="3" height="3" fill="#2ec040"/><rect x="12" y="4" width="3" height="3" fill="#8ad040"/><rect x="15" y="4" width="3" height="3" fill="#f2e040"/><rect x="18" y="4" width="3" height="3" fill="#f29a30"/><rect x="21" y="4" width="3" height="3" fill="#e03a3a"/><rect x="9" y="7" width="3" height="3" fill="#2ec040"/><rect x="12" y="7" width="3" height="3" fill="#8ad040"/><rect x="15" y="7" width="3" height="3" fill="#f2e040"/><rect x="18" y="7" width="3" height="3" fill="#f29a30"/><rect x="21" y="7" width="3" height="3" fill="#e03a3a"/><rect x="9" y="10" width="15" height="3" fill="#f2e860"/><path d="M3 13v6h5" fill="none" stroke="#111" stroke-width="1.2"/><path d="M6 17l3 2-3 2z" fill="#111"/><path d="M10 15h14v9H10zM13.5 15v9M17 15v9M20.5 15v9M10 18h14M10 21h14" fill="none" stroke="#b03050" stroke-width="0.9"/></svg><svg style="left:11px;top:396px;" width="24" height="24" viewBox="0 0 24 24"><rect x="1" y="1" width="22" height="22" fill="#fff" stroke="#555" stroke-width="1.2"/><rect x="5" y="5" width="5.5" height="5.5" fill="none" stroke="#555" stroke-width="1.1"/><rect x="13.5" y="5" width="5.5" height="5.5" fill="none" stroke="#555" stroke-width="1.1"/><rect x="5" y="13.5" width="5.5" height="5.5" fill="none" stroke="#555" stroke-width="1.1"/><rect x="13.5" y="13.5" width="5.5" height="5.5" fill="none" stroke="#555" stroke-width="1.1"/></svg><svg style="left:12px;top:439px;" width="22" height="25" viewBox="0 0 22 25"><path d="M12 1l8 3.5v8l-8 3.5-8-3.5v-8z" fill="#f2f2f2" stroke="#666" stroke-width="0.9"/><path d="M4 4.5l8 3.5 8-3.5M12 8v8" fill="none" stroke="#777" stroke-width="0.9"/><path d="M12 8v8l8-3.5v-8z" fill="#c8c8c8"/><path d="M2 9l8 3.5v11.5l-8-3.5z" fill="#e4e4e4" stroke="#666" stroke-width="0.9"/><path d="M2 14.5l8 3.5" stroke="#777" stroke-width="0.9"/><path d="M10 12.5l2-0.9v3.9l8-3.5v5l-10 4.5z" fill="#b8b8b8" stroke="#666" stroke-width="0.9"/></svg><svg style="left:11px;top:483px;" width="25" height="25" viewBox="0 0 25 25"><path d="M1 6l6-4 6 3v12l-6 4-6-3z" fill="#ee8a22"/><path d="M7 2l6 3-6 4-6-3z" fill="#f5b060"/><path d="M7 9v12" stroke="#d06a10"/><path d="M1 14l6 3 6-3v3l-6 4-6-3z" fill="#f0f0f0" stroke="#aaa" stroke-width="0.6"/><path d="M11 12l12 11V12L11 23z" fill="#fff" stroke="#222" stroke-width="1.1"/></svg><svg style="left:11px;top:527px;" width="25" height="25" viewBox="0 0 25 25"><path d="M4 14V5l6-4 3 2v9l10 4v3l-9 6-11-4z" fill="#dcdcdc" stroke="#555" stroke-width="1.1"/><path d="M4 14l6-4V1M10 10l3 2M4 14l11 4 8-5M15 18v6" fill="none" stroke="#555" stroke-width="1"/><path d="M4 5l6-4 3 2-6 4z" fill="#f0f0f0"/><ellipse cx="14" cy="15" rx="3.5" ry="2" fill="#9a9a9a" stroke="#444" stroke-width="0.9"/></svg><svg style="left:11px;top:572px;" width="24" height="24" viewBox="0 0 24 24"><path d="M12 2a1.5 1.5 0 0 1 1.5 1.5 7 7 0 0 1 5.5 7v6l3 3H2l3-3v-6a7 7 0 0 1 5.5-7A1.5 1.5 0 0 1 12 2z" fill="none" stroke="#555" stroke-width="1.1"/><path d="M9.5 20a2.5 2.5 0 0 0 5 0" fill="none" stroke="#555" stroke-width="1.1"/></svg><svg style="left:14px;top:617px;" width="19" height="23" viewBox="0 0 19 23"><path d="M2 5l8-3 7 2v15l-8 3-7-2z" fill="#fff" stroke="#555" stroke-width="1.1"/><path d="M2 5l7 2 8-3M9 7v15M5 6v14M13 5v15" stroke="#555" fill="none"/></svg><svg style="left:11px;top:660px;" width="25" height="24" viewBox="0 0 25 24"><circle cx="10" cy="14" r="8.5" fill="#8a8a8a" stroke="#555"/><path d="M10 11v8" stroke="#fff" stroke-width="2"/><circle cx="10" cy="8.5" r="1.2" fill="#fff"/><path d="M15 3a8 8 0 0 1 6 6M17 1a11 11 0 0 1 7 7" fill="none" stroke="#aaa"/></svg><svg style="left:11px;top:704px;" width="24" height="24" viewBox="0 0 24 24"><rect x="1" y="1" width="22" height="22" fill="#fff" stroke="#555" stroke-width="1.1"/><path d="M1 4.5h22" stroke="#555"/><circle cx="12" cy="14" r="7" fill="#3a8ac8"/><path d="M8 10q3 2 2 5t4 4M14 8q-1 3 3 5" stroke="#7ac870" stroke-width="2" fill="none"/></svg><svg style="left:11px;top:747px;" width="24" height="24" viewBox="0 0 24 24"><circle cx="12" cy="12" r="10.5" fill="none" stroke="#555" stroke-width="1.2"/><path d="M12 5v7H7" fill="none" stroke="#555" stroke-width="1.2"/></svg><svg style="left:11px;top:792px;" width="24" height="25" viewBox="0 0 24 25"><path d="M1 4h6l2-3h6l2 3h6v20H1z" fill="#fff" stroke="#555" stroke-width="1.1"/><path d="M5 8l14 13M19 8L5 21" stroke="#333" stroke-width="2.2"/><path d="M4 9l3-3 2 2-3 3zM17 6l3 3-2 2-3-3z" fill="#333"/></svg><svg style="left:11px;top:836px;" width="24" height="25" viewBox="0 0 24 25"><rect x="4" y="1" width="5" height="22" fill="url(#rb)"/><defs><linearGradient id="rb" x1="0" y1="0" x2="0" y2="1"><stop offset="0" stop-color="#e02020"/><stop offset="0.3" stop-color="#f2e040"/><stop offset="0.6" stop-color="#30c040"/><stop offset="1" stop-color="#2040e0"/></linearGradient></defs><path d="M9 4l13 17" stroke="#222" stroke-width="2.2"/><path d="M7 2l3 1-1 3z" fill="#ddd"/></svg><div style="left:40px;top:179px;width:337px;height:870px;background:#ffffff"></div><div style="left:377px;top:179px;width:1px;height:870px;background:#cfcfcf"></div><svg style="left:47px;top:183px;" width="16" height="16" viewBox="0 0 16 16"><path d="M1 4.5l4.5-3.5 5 1.5-1 3.5-4.5 2.5z" fill="#fff" stroke="#3a3ad0" stroke-width="1"/><path d="M3 8v7M3 12h3M9 7h5M9 13h3" stroke="#111" stroke-width="1.1"/><rect x="7" y="10" width="6" height="6" fill="none" stroke="#2a2ad0" stroke-width="0.9"/><path d="M10 10v6M7 13h6" stroke="#2a2ad0" stroke-width="0.8"/></svg><div class="t" style="left:65.4px;top:183.7px;font-size:12.5px;line-height:16px;color:#1e1e1e;transform:scaleX(1.008);">Simulation Navigator</div><div style="left:48px;top:205px;width:320px;height:19px;background:#ececec"></div><div style="left:48px;top:224px;width:320px;height:1px;background:#d6d6d6"></div><div class="t" style="left:55.4px;top:209.3px;font-size:12px;line-height:15px;color:#1e1e1e;transform:scaleX(1.006);">Name</div><div style="left:48px;top:225px;width:320px;height:19px;background:#ffffff"></div><div style="left:48px;top:244px;width:320px;height:1px;background:#ececec"></div><div style="left:48px;top:245px;width:320px;height:19px;background:#f9f9f9"></div><div style="left:48px;top:264px;width:320px;height:1px;background:#ececec"></div><div style="left:48px;top:265px;width:320px;height:19px;background:#ffffff"></div><div style="left:48px;top:284px;width:320px;height:1px;background:#ececec"></div><div style="left:48px;top:285px;width:320px;height:19px;background:#f9f9f9"></div><div style="left:48px;top:304px;width:320px;height:1px;background:#ececec"></div><div style="left:48px;top:305px;width:320px;height:19px;background:#ffffff"></div><div style="left:48px;top:324px;width:320px;height:1px;background:#ececec"></div><div style="left:48px;top:325px;width:320px;height:19px;background:#f9f9f9"></div><div style="left:48px;top:344px;width:320px;height:1px;background:#ececec"></div><div style="left:48px;top:345px;width:320px;height:19px;background:#ffffff"></div><div style="left:48px;top:364px;width:320px;height:1px;background:#ececec"></div><div style="left:48px;top:365px;width:320px;height:19px;background:#f9f9f9"></div><div style="left:48px;top:384px;width:320px;height:1px;background:#ececec"></div><div style="left:48px;top:385px;width:320px;height:19px;background:#ffffff"></div><div style="left:48px;top:404px;width:320px;height:1px;background:#ececec"></div><div style="left:48px;top:405px;width:320px;height:19px;background:#f9f9f9"></div><div style="left:48px;top:424px;width:320px;height:1px;background:#ececec"></div><div style="left:48px;top:425px;width:320px;height:19px;background:#ffffff"></div><div style="left:48px;top:444px;width:320px;height:1px;background:#ececec"></div><div style="left:48px;top:445px;width:320px;height:19px;background:#f9f9f9"></div><div style="left:48px;top:464px;width:320px;height:1px;background:#ececec"></div><div style="left:48px;top:465px;width:320px;height:19px;background:#ffffff"></div><div style="left:48px;top:484px;width:320px;height:1px;background:#ececec"></div><div style="left:48px;top:485px;width:320px;height:19px;background:#f9f9f9"></div><div style="left:48px;top:504px;width:320px;height:1px;background:#ececec"></div><div style="left:48px;top:505px;width:320px;height:19px;background:#ffffff"></div><div style="left:48px;top:524px;width:320px;height:1px;background:#ececec"></div><div style="left:48px;top:525px;width:320px;height:19px;background:#f9f9f9"></div><div style="left:48px;top:544px;width:320px;height:1px;background:#ececec"></div><div style="left:48px;top:545px;width:320px;height:19px;background:#ffffff"></div><div style="left:48px;top:564px;width:320px;height:1px;background:#ececec"></div><div style="left:48px;top:565px;width:320px;height:19px;background:#f9f9f9"></div><div style="left:48px;top:584px;width:320px;height:1px;background:#ececec"></div><div style="left:48px;top:585px;width:320px;height:19px;background:#ffffff"></div><div style="left:48px;top:604px;width:320px;height:1px;background:#ececec"></div><div style="left:48px;top:605px;width:320px;height:19px;background:#f9f9f9"></div><div style="left:48px;top:624px;width:320px;height:1px;background:#ececec"></div><div style="left:48px;top:625px;width:320px;height:19px;background:#ffffff"></div><div style="left:48px;top:644px;width:320px;height:1px;background:#ececec"></div><div style="left:48px;top:645px;width:320px;height:19px;background:#f9f9f9"></div><div style="left:48px;top:664px;width:320px;height:1px;background:#ececec"></div><div style="left:48px;top:665px;width:320px;height:19px;background:#ffffff"></div><div style="left:48px;top:684px;width:320px;height:1px;background:#ececec"></div><div style="left:48px;top:685px;width:320px;height:19px;background:#f9f9f9"></div><div style="left:48px;top:704px;width:320px;height:1px;background:#ececec"></div><div style="left:48px;top:705px;width:320px;height:19px;background:#ffffff"></div><div style="left:48px;top:724px;width:320px;height:1px;background:#ececec"></div><div style="left:48px;top:725px;width:320px;height:19px;background:#f9f9f9"></div><div style="left:48px;top:744px;width:320px;height:1px;background:#ececec"></div><div style="left:48px;top:745px;width:320px;height:19px;background:#ffffff"></div><div style="left:48px;top:764px;width:320px;height:1px;background:#ececec"></div><div style="left:48px;top:765px;width:320px;height:19px;background:#f9f9f9"></div><div style="left:48px;top:784px;width:320px;height:1px;background:#ececec"></div><div style="left:48px;top:785px;width:320px;height:19px;background:#ffffff"></div><div style="left:48px;top:804px;width:320px;height:1px;background:#ececec"></div><div style="left:48px;top:805px;width:320px;height:19px;background:#f9f9f9"></div><div style="left:48px;top:824px;width:320px;height:1px;background:#ececec"></div><div style="left:48px;top:825px;width:320px;height:19px;background:#ffffff"></div><div style="left:48px;top:844px;width:320px;height:1px;background:#ececec"></div><div style="left:48px;top:845px;width:320px;height:19px;background:#f9f9f9"></div><div style="left:48px;top:864px;width:320px;height:1px;background:#ececec"></div><div style="left:48px;top:865px;width:320px;height:19px;background:#ffffff"></div><div style="left:48px;top:884px;width:320px;height:1px;background:#ececec"></div><div style="left:48px;top:885px;width:320px;height:19px;background:#f9f9f9"></div><div style="left:48px;top:904px;width:320px;height:1px;background:#ececec"></div><div style="left:48px;top:905px;width:320px;height:19px;background:#ffffff"></div><div style="left:48px;top:924px;width:320px;height:1px;background:#ececec"></div><div style="left:48px;top:925px;width:320px;height:19px;background:#f9f9f9"></div><div style="left:48px;top:944px;width:320px;height:1px;background:#ececec"></div><div style="left:48px;top:945px;width:320px;height:19px;background:#ffffff"></div><div style="left:48px;top:964px;width:320px;height:1px;background:#ececec"></div><div style="left:233px;top:604px;width:1px;height:364px;background:#e4e4e4"></div><div style="left:257px;top:604px;width:1px;height:364px;background:#e4e4e4"></div><div style="left:281px;top:604px;width:1px;height:364px;background:#e4e4e4"></div><div style="left:367px;top:224px;width:1px;height:744px;background:#e2e2e2"></div><div style="left:48px;top:968px;width:320px;height:19px;background:#f0f0f0"></div><div style="left:66px;top:977px;width:73px;height:2px;background:#8a8a8a"></div><div style="left:48px;top:989px;width:320px;height:6px;background:#d4d4d4;border:1px solid #c4c4c4"></div><svg style="left:58px;top:1004px;" width="5" height="9" viewBox="0 0 5 9"><path d="M0 0l4.5 4.5L0 9z" fill="#2a7d8d"/></svg><div class="t" style="left:70.4px;top:1001.7px;font-size:12.5px;line-height:16px;color:#3e8797;transform:scaleX(1.088);">Simulation File View</div><div style="left:48px;top:1018px;width:320px;height:2px;background:#d9d9d9"></div><svg style="left:58px;top:1027px;" width="5" height="9" viewBox="0 0 5 9"><path d="M0 0l4.5 4.5L0 9z" fill="#2a7d8d"/></svg><div class="t" style="left:70.4px;top:1024.7px;font-size:12.5px;line-height:16px;color:#3e8797;transform:scaleX(1.085);">Preview</div><div style="left:48px;top:1042px;width:320px;height:2px;background:#d9d9d9"></div><div style="left:58px;top:262px;width:1px;height:212px;background-image:linear-gradient(#999 50%,transparent 50%);background-size:1px 2px"></div><div style="left:77px;top:484px;width:1px;height:91px;background-image:linear-gradient(#999 50%,transparent 50%);background-size:1px 2px"></div><svg style="left:50px;top:226px;" width="16" height="17" viewBox="0 0 16 17"><path d="M1 5l5-3 5 2v10l-5 3-5-2z" fill="#f4e88a" stroke="#c8b040" stroke-width="0.8"/><path d="M1 10l5 2 5-2" stroke="#c8b040" fill="none"/><rect x="8" y="1" width="7" height="12" fill="#7ab0a0" stroke="#3a6a5a" stroke-width="0.8"/><rect x="9.5" y="3" width="4" height="3" fill="#fff"/></svg><div class="t" style="left:68.2px;top:227.8px;font-size:12px;line-height:15px;color:#14146e;transform:scaleX(0.950);">Torque Arm_sim1.sim</div><svg style="left:54px;top:250px;" width="9" height="9" viewBox="0 0 9 9"><rect x="0.5" y="0.5" width="8" height="8" fill="#fff" stroke="#c8c8c8"/><g stroke="#222" stroke-width="1.1"><path d="M2 4.5h5M4.5 2v5"/></g></svg><svg style="left:67px;top:246px;" width="16" height="17" viewBox="0 0 16 17"><path d="M1 7Q8 0 15 7Q8 14 1 7z" fill="#fff" stroke="#333" stroke-width="1.1"/><circle cx="8" cy="7" r="3" fill="#444"/></svg><svg style="left:85px;top:246px;" width="16" height="17" viewBox="0 0 16 17"><path d="M1 8l6-4 8 1v8l-6 4-8-1z" fill="#f4ea50" stroke="#3a3ad0" stroke-width="0.9"/><path d="M1 8l8 1 6-4M9 9v8M5 6v10M12 7v8M1 12l8 1 6-4" stroke="#3a3ad0" stroke-width="0.8" fill="none"/></svg><div class="t" style="left:103.3px;top:247.8px;font-size:12px;line-height:15px;color:#1e1e1e;transform:scaleX(0.950);">Torque Arm_fem1.fem</div><div style="left:60px;top:254px;width:6px;height:1px;background-image:linear-gradient(90deg,#999 50%,transparent 50%);background-size:2px 1px"></div><svg style="left:67px;top:266px;" width="16" height="17" viewBox="0 0 16 17"><path d="M8 8V2M8 8l-6 6M8 8l6 6" stroke="#d9668a" stroke-width="1.1"/><circle cx="8" cy="2" r="1.5" fill="#d9668a"/><path d="M3 10a5 3 0 0 0 10 0" fill="none" stroke="#d9668a"/></svg><div class="t" style="left:87.0px;top:267.8px;font-size:12px;line-height:15px;color:#1e1e1e;transform:scaleX(0.800);">CSYS</div><svg style="left:67px;top:286px;" width="17" height="17" viewBox="0 0 17 17"><rect x="1" y="2" width="14" height="11" fill="#fff" stroke="#3a8a6a" stroke-width="1"/><path d="M1 5h14" stroke="#3a8a6a"/><circle cx="4" cy="9" r="1.5" fill="#3ac060"/><circle cx="11" cy="12" r="3.5" fill="none" stroke="#c02020" stroke-width="1.2"/><path d="M11 7v10M6 12h10" stroke="#c02020" stroke-width="1.1"/></svg><div class="t" style="left:87.0px;top:287.8px;font-size:12px;line-height:15px;color:#1e1e1e;transform:scaleX(0.950);">Selection Recipes</div><svg style="left:67px;top:306px;" width="16" height="17" viewBox="0 0 16 17"><rect x="2" y="2" width="12" height="13" fill="none" stroke="#888"/><circle cx="2" cy="2" r="1.3" fill="#666"/><circle cx="14" cy="2" r="1.3" fill="#666"/><circle cx="2" cy="15" r="1.3" fill="#666"/><circle cx="14" cy="15" r="1.3" fill="#666"/><path d="M5 6l3-2 3 2v5l-3 2-3-2z" fill="#ee8a22"/><path d="M8 8l3-2" stroke="#c06010"/></svg><div class="t" style="left:87.0px;top:307.8px;font-size:12px;line-height:15px;color:#1e1e1e;transform:scaleX(0.950);">Groups</div><svg style="left:67px;top:326px;" width="16" height="17" viewBox="0 0 16 17"><text x="0" y="12" font-size="10" font-weight="bold" font-family="Liberation Serif" fill="#222">F</text><path d="M8 3H7v10h1M14 3h1v10h-1" stroke="#222" fill="none"/><path d="M9 5l4 6M13 5l-4 6" stroke="#222" stroke-width="1.2"/></svg><div class="t" style="left:87.0px;top:327.8px;font-size:12px;line-height:15px;color:#1e1e1e;transform:scaleX(0.950);">Fields</div><svg style="left:54px;top:350px;" width="9" height="9" viewBox="0 0 9 9"><rect x="0.5" y="0.5" width="8" height="8" fill="#fff" stroke="#c8c8c8"/><g stroke="#222" stroke-width="1.1"><path d="M2 4.5h5M4.5 2v5"/></g></svg><svg style="left:67px;top:346px;" width="16" height="17" viewBox="0 0 16 17"><path d="M1 4l5-3 6 1 3 3" fill="#cfd8e8" stroke="#555" stroke-width="0.9"/><circle cx="10" cy="5" r="3" fill="#e8c080"/><rect x="7" y="6" width="8" height="11" fill="#fff" stroke="#3a3ad0" stroke-width="0.9"/><path d="M9 9h4M9 12h4M9 15h4" stroke="#3a3ad0" stroke-width="0.8"/></svg><div class="t" style="left:87.0px;top:347.8px;font-size:12px;line-height:15px;color:#1e1e1e;transform:scaleX(0.950);">Modeling Objects</div><svg style="left:67px;top:366px;" width="16" height="17" viewBox="0 0 16 17"><path d="M1 7l6-3v-3l5-1 3 2v6l-8 5-6-2z" fill="#ee8a22" stroke="#c8661a" stroke-width="0.7"/><path d="M1 7v4l6 3 8-5V8" fill="#d0d0d0" stroke="#888" stroke-width="0.7"/></svg><div class="t" style="left:87.0px;top:367.8px;font-size:12px;line-height:15px;color:#1e1e1e;transform:scaleX(0.950);">Regions</div><svg style="left:67px;top:386px;" width="17" height="17" viewBox="0 0 17 17"><path d="M5 5l6-2 5 4v6l-5 4-6-3z" fill="#fff" stroke="#444" stroke-width="1"/><path d="M5 11l6 2v4l-6-3z" fill="#ee8a22"/><path d="M11 7v10M11 13l5-6" stroke="#444" stroke-width="0.9" fill="none"/><circle cx="6" cy="6" r="3.5" fill="#fff" stroke="#333"/><path d="M6 0v12M0 6h12" stroke="#222" stroke-width="1.2"/></svg><div class="t" style="left:87.0px;top:387.8px;font-size:12px;line-height:15px;color:#1e1e1e;transform:scaleX(0.950);">Simulation Objects</div><svg style="left:54px;top:410px;" width="9" height="9" viewBox="0 0 9 9"><rect x="0.5" y="0.5" width="8" height="8" fill="#fff" stroke="#c8c8c8"/><g stroke="#222" stroke-width="1.1"><path d="M2 4.5h5M4.5 2v5"/></g></svg><svg style="left:67px;top:406px;" width="16" height="17" viewBox="0 0 16 17"><path d="M1 7Q8 0 15 7Q8 14 1 7z" fill="#fff" stroke="#333" stroke-width="1.1"/><circle cx="8" cy="7" r="3" fill="#444"/></svg><svg style="left:85px;top:406px;" width="16" height="17" viewBox="0 0 16 17"><path d="M2 1v15" stroke="#d9963e" stroke-width="1.1"/><path d="M2 3l-1.5 2M2 7l-1.5 2M2 11l-1.5 2" stroke="#d9963e"/><rect x="2.5" y="5" width="11" height="3" fill="#cfeef4" stroke="#46aec4" stroke-width="0.8"/><circle cx="10" cy="11" r="2" fill="none" stroke="#e08a2c"/><path d="M7 14h7M8 16l1-2M11 16l1-2" stroke="#e08a2c" stroke-width="0.9"/></svg><div class="t" style="left:103.3px;top:407.8px;font-size:12px;line-height:15px;color:#1e1e1e;transform:scaleX(0.950);">Constraint Container</div><svg style="left:54px;top:430px;" width="9" height="9" viewBox="0 0 9 9"><rect x="0.5" y="0.5" width="8" height="8" fill="#fff" stroke="#c8c8c8"/><g stroke="#222" stroke-width="1.1"><path d="M2 4.5h5M4.5 2v5"/></g></svg><svg style="left:67px;top:426px;" width="16" height="17" viewBox="0 0 16 17"><path d="M1 7Q8 0 15 7Q8 14 1 7z" fill="none" stroke="#333" stroke-width="1.1"/><circle cx="8" cy="7" r="3" fill="none" stroke="#333"/><path d="M1 14L15 1" stroke="#333" stroke-width="1.1"/></svg><svg style="left:85px;top:426px;" width="16" height="17" viewBox="0 0 16 17"><path d="M5 1h5v5h3l-5.5 5L2 6h3z" fill="#ee8a22"/><rect x="1" y="11" width="14" height="4" fill="#e0e0e0" stroke="#555" stroke-width="0.8"/></svg><div class="t" style="left:103.3px;top:427.8px;font-size:12px;line-height:15px;color:#1e1e1e;transform:scaleX(0.950);">Load Container</div><svg style="left:67px;top:446px;" width="17" height="17" viewBox="0 0 17 17"><path d="M1 3h5l1.5 2H15v10H1z" fill="#fff" stroke="#333" stroke-width="1.1"/><path d="M1 15l2.5-7H17l-2 7" fill="#fff" stroke="#333" stroke-width="1.1"/></svg><div class="t" style="left:87.0px;top:447.8px;font-size:12px;line-height:15px;color:#1e1e1e;transform:scaleX(0.950);">Solver Sets</div><svg style="left:54px;top:470px;" width="9" height="9" viewBox="0 0 9 9"><rect x="0.5" y="0.5" width="8" height="8" fill="#fff" stroke="#c8c8c8"/><g stroke="#222" stroke-width="1.1"><path d="M2 4.5h5"/></g></svg><svg style="left:68px;top:466px;" width="16" height="17" viewBox="0 0 16 17"><path d="M1 6h5M3.5 3v6" stroke="#1a1a9a" stroke-width="1.5"/><path d="M2 3l2.5-2 2.5 2" fill="#1a1a9a"/><rect x="7" y="5" width="8" height="11" fill="#d8e0e8" stroke="#6a7a9a" stroke-width="0.9"/><path d="M8.5 8h5M8.5 11h5M8.5 14h5" stroke="#8a9ab8" stroke-width="0.8"/></svg><div class="t" style="left:86.6px;top:467.8px;font-size:12px;line-height:15px;color:#1a1aa0;transform:scaleX(0.980);">Solution 1</div><div style="left:62px;top:474px;width:5px;height:1px;background-image:linear-gradient(90deg,#999 50%,transparent 50%);background-size:2px 1px"></div><svg style="left:86px;top:486px;" width="17" height="17" viewBox="0 0 17 17"><path d="M5 5l6-2 5 4v6l-5 4-6-3z" fill="#fff" stroke="#444" stroke-width="1"/><path d="M5 11l6 2v4l-6-3z" fill="#ee8a22"/><path d="M11 7v10M11 13l5-6" stroke="#444" stroke-width="0.9" fill="none"/><circle cx="6" cy="6" r="3.5" fill="#fff" stroke="#333"/><path d="M6 0v12M0 6h12" stroke="#222" stroke-width="1.2"/></svg><div class="t" style="left:105.7px;top:487.8px;font-size:12px;line-height:15px;color:#1e1e1e;transform:scaleX(0.950);">Simulation Objects</div><svg style="left:86px;top:506px;" width="16" height="17" viewBox="0 0 16 17"><path d="M5 1h5v5h3l-5.5 5L2 6h3z" fill="#ee8a22"/><rect x="1" y="11" width="14" height="4" fill="#e0e0e0" stroke="#555" stroke-width="0.8"/></svg><div class="t" style="left:105.7px;top:507.8px;font-size:12px;line-height:15px;color:#1e1e1e;transform:scaleX(0.950);">Loads</div><svg style="left:86px;top:526px;" width="16" height="17" viewBox="0 0 16 17"><path d="M2 1v15" stroke="#d9963e" stroke-width="1.1"/><path d="M2 3l-1.5 2M2 7l-1.5 2M2 11l-1.5 2" stroke="#d9963e"/><rect x="2.5" y="5" width="11" height="3" fill="#cfeef4" stroke="#46aec4" stroke-width="0.8"/><circle cx="10" cy="11" r="2" fill="none" stroke="#e08a2c"/><path d="M7 14h7M8 16l1-2M11 16l1-2" stroke="#e08a2c" stroke-width="0.9"/></svg><div class="t" style="left:105.7px;top:527.8px;font-size:12px;line-height:15px;color:#1e1e1e;transform:scaleX(0.950);">Constraints</div><svg style="left:73px;top:550px;" width="9" height="9" viewBox="0 0 9 9"><rect x="0.5" y="0.5" width="8" height="8" fill="#fff" stroke="#c8c8c8"/><g stroke="#222" stroke-width="1.1"><path d="M2 4.5h5M4.5 2v5"/></g></svg><svg style="left:86px;top:546px;" width="17" height="17" viewBox="0 0 17 17"><path d="M1 3h5l1.5 2H15v10H1z" fill="#fff" stroke="#333" stroke-width="1.1"/><path d="M1 15l2.5-7H17l-2 7" fill="#fff" stroke="#333" stroke-width="1.1"/></svg><div class="t" style="left:105.7px;top:547.8px;font-size:12px;line-height:15px;color:#1e1e1e;transform:scaleX(0.910);">Subcases</div><svg style="left:73px;top:570px;" width="9" height="9" viewBox="0 0 9 9"><rect x="0.5" y="0.5" width="8" height="8" fill="#fff" stroke="#c8c8c8"/><g stroke="#222" stroke-width="1.1"><path d="M2 4.5h5M4.5 2v5"/></g></svg><svg style="left:86px;top:566px;" width="17" height="17" viewBox="0 0 17 17"><path d="M1 3h5l1.5 2H15v10H1z" fill="#fff" stroke="#333" stroke-width="1.1"/><path d="M1 15l2.5-7H17l-2 7" fill="#fff" stroke="#333" stroke-width="1.1"/></svg><div class="t" style="left:105.7px;top:567.8px;font-size:12px;line-height:15px;color:#1e1e1e;transform:scaleX(0.925);">Results</div><div style="left:60px;top:274px;width:6px;height:1px;background-image:linear-gradient(90deg,#999 50%,transparent 50%);background-size:2px 1px"></div><div style="left:60px;top:294px;width:6px;height:1px;background-image:linear-gradient(90deg,#999 50%,transparent 50%);background-size:2px 1px"></div><div style="left:60px;top:314px;width:6px;height:1px;background-image:linear-gradient(90deg,#999 50%,transparent 50%);background-size:2px 1px"></div><div style="left:60px;top:334px;width:6px;height:1px;background-image:linear-gradient(90deg,#999 50%,transparent 50%);background-size:2px 1px"></div><div style="left:60px;top:374px;width:6px;height:1px;background-image:linear-gradient(90deg,#999 50%,transparent 50%);background-size:2px 1px"></div><div style="left:60px;top:394px;width:6px;height:1px;background-image:linear-gradient(90deg,#999 50%,transparent 50%);background-size:2px 1px"></div><div style="left:60px;top:454px;width:6px;height:1px;background-image:linear-gradient(90deg,#999 50%,transparent 50%);background-size:2px 1px"></div><div style="left:79px;top:494px;width:6px;height:1px;background-image:linear-gradient(90deg,#999 50%,transparent 50%);background-size:2px 1px"></div><div style="left:79px;top:514px;width:6px;height:1px;background-image:linear-gradient(90deg,#999 50%,transparent 50%);background-size:2px 1px"></div><div style="left:79px;top:534px;width:6px;height:1px;background-image:linear-gradient(90deg,#999 50%,transparent 50%);background-size:2px 1px"></div><div style="left:378px;top:179px;width:1501px;height:25px;background:#ffffff"></div><div style="left:378px;top:203px;width:1502px;height:2px;background:#18525e"></div><div style="left:875px;top:179px;width:246px;height:25px;background:#0c6a86"></div><svg style="left:520px;top:183px;" width="17" height="16" viewBox="0 0 17 16"><path d="M1 3v11h8" fill="none" stroke="#111" stroke-width="1.2"/><path d="M2 12l2-5 2 3 2-4" fill="none" stroke="#d02020" stroke-width="1"/><ellipse cx="12" cy="8" rx="4" ry="7" fill="#f2e040" stroke="#a0a020" stroke-width="0.8"/><circle cx="12.5" cy="8" r="1.2" fill="#e05020"/></svg><div class="t" style="left:540.6px;top:184.3px;font-size:12px;line-height:15px;color:#2a1a2a;transform:scaleX(1.022);">Torque Arm.prt</div><svg style="left:628px;top:186px;" width="11" height="11" viewBox="0 0 11 11"><path d="M8 1H1v9h8V6" fill="none" stroke="#333" stroke-width="1.3"/><path d="M5 6l5-5M7 1h3v3" fill="none" stroke="#333" stroke-width="1.2"/></svg><svg style="left:664px;top:183px;" width="17" height="16" viewBox="0 0 17 16"><path d="M1 3v11h8" fill="none" stroke="#111" stroke-width="1.2"/><path d="M2 12l2-5 2 3 2-4" fill="none" stroke="#d02020" stroke-width="1"/><ellipse cx="12" cy="8" rx="4" ry="7" fill="#f2e040" stroke="#a0a020" stroke-width="0.8"/><circle cx="12.5" cy="8" r="1.2" fill="#e05020"/></svg><div class="t" style="left:684.9px;top:184.3px;font-size:12px;line-height:15px;color:#2a1a2a;transform:scaleX(0.984);">(FEM) Torque Arm_fem1.fem</div><svg style="left:843px;top:186px;" width="11" height="11" viewBox="0 0 11 11"><path d="M8 1H1v9h8V6" fill="none" stroke="#333" stroke-width="1.3"/><path d="M5 6l5-5M7 1h3v3" fill="none" stroke="#333" stroke-width="1.2"/></svg><svg style="left:880px;top:183px;" width="17" height="16" viewBox="0 0 17 16"><path d="M1 3v11h8" fill="none" stroke="#111" stroke-width="1.2"/><path d="M2 12l2-5 2 3 2-4" fill="none" stroke="#d02020" stroke-width="1"/><ellipse cx="12" cy="8" rx="4" ry="7" fill="#f2e040" stroke="#a0a020" stroke-width="0.8"/><circle cx="12.5" cy="8" r="1.2" fill="#e05020"/></svg><div class="t" style="left:900.6px;top:184.3px;font-size:12px;line-height:15px;color:#e0f0f6;transform:scaleX(1.002);">(Simulation) Torque Arm_sim1.sim</div><svg style="left:1089px;top:186px;" width="11" height="11" viewBox="0 0 11 11"><path d="M8 1H1v9h8V6" fill="none" stroke="#e0f0f6" stroke-width="1.3"/><path d="M5 6l5-5M7 1h3v3" fill="none" stroke="#e0f0f6" stroke-width="1.2"/></svg><svg style="left:1106px;top:186px;" width="10" height="10" viewBox="0 0 10 10"><path d="M1 1l8 8M9 1L1 9" stroke="#cfe4ec" stroke-width="1.8"/></svg><div style="left:1051px;top:213px;width:143px;height:22px;background:#fff;border:1px solid #6a6a6a"></div><div class="t" style="left:1053.9px;top:217.8px;font-size:12px;line-height:15px;color:#1e1e1e;transform:scaleX(0.980);">No method</div><svg style="left:1181px;top:222px;" width="7" height="4" viewBox="0 0 7 4"><path d="M0 0h7l-3.5 3.5z" fill="#222"/></svg><div style="left:1204px;top:215px;width:1px;height:18px;background:#e0e0e0"></div><svg style="left:1209px;top:226px;" width="6" height="4" viewBox="0 0 6 4"><path d="M0 0h6l-3.0 3.5z" fill="#222"/></svg><div style="left:1040px;top:237px;width:182px;height:1px;background:#e8e8e8"></div><div style="left:1879px;top:204px;width:1px;height:845px;background:#d0d0d0"></div><div style="left:1880px;top:204px;width:35px;height:845px;background:#ffffff"></div><svg style="left:1885px;top:191px;" width="25" height="25" viewBox="0 0 25 25"><path d="M1 11Q12 0 23 11Q12 22 1 11z" fill="none" stroke="#333" stroke-width="1.1"/><circle cx="12" cy="11" r="4" fill="none" stroke="#333" stroke-width="1.1"/><path d="M3 21L22 1" stroke="#333" stroke-width="1.1"/></svg><svg style="left:1885px;top:222px;" width="25" height="25" viewBox="0 0 25 25"><ellipse cx="10" cy="10" rx="9" ry="4" fill="none" stroke="#333" transform="rotate(30 10 10)"/><ellipse cx="10" cy="10" rx="9" ry="4" fill="none" stroke="#333" transform="rotate(-30 10 10)"/><ellipse cx="10" cy="10" rx="4" ry="9" fill="none" stroke="#333"/><path d="M10 18l6-4 6 4-5 6-6-2z" fill="#fff" stroke="#333"/></svg><svg style="left:1885px;top:254px;" width="25" height="25" viewBox="0 0 25 25"><path d="M2 10l6-5h14l-5 5z" fill="#fff" stroke="#3a3ad0" stroke-width="0.9"/><rect x="2" y="10" width="15" height="10" fill="#f4ea30" stroke="#3a3ad0" stroke-width="0.9"/><path d="M7 10v10M12 10v10M2 15h15M17 10l5-5v10l-5 5M8 5l-5 5M13 5l-5 5" stroke="#3a3ad0" stroke-width="0.9" fill="none"/></svg><svg style="left:1885px;top:287px;" width="25" height="25" viewBox="0 0 25 25"><rect x="3" y="1" width="20" height="23" fill="#fbe0c0" stroke="#e0a050" stroke-width="1"/><path d="M3 6l5-5M3 12l11-11M3 18l17-17M5 24l18-18M11 24l12-12M17 24l6-6" stroke="#e0a050" stroke-width="1.2"/><path d="M1 13l6-4h15v6l-6 4H1z" fill="#e8e8e8" stroke="#555" stroke-width="1"/><path d="M1 13h15l6-4M16 13v6" stroke="#555" fill="none"/></svg><svg style="left:1885px;top:320px;" width="25" height="25" viewBox="0 0 25 25"><path d="M14 9l2 5 5 0-4 3 2 5-5-3-4 3 1-5-4-3h5z" fill="#f2e070" stroke="#c8a030" stroke-width="0.8"/><path d="M9 7l5-5 4 2-1 4-5 2z" fill="#d8b890"/><path d="M15 2l3-1 2 3-2 2z" fill="#3a3aa0"/><path d="M1 14h7M3 17h5M1 20h6" stroke="#5ab0e0" stroke-width="1.2"/></svg><svg style="left:1885px;top:351px;" width="25" height="25" viewBox="0 0 25 25"><rect x="1" y="1" width="6" height="6" fill="none" stroke="#333"/><path d="M4 7v15M4 12h6M4 21h4" stroke="#333" fill="none"/><rect x="10" y="10" width="6" height="5" fill="none" stroke="#e08a2c"/><circle cx="17" cy="15" r="5" fill="#fff" stroke="#333"/><path d="M13 18l-4 5" stroke="#333" stroke-width="1.5"/></svg><svg style="left:1885px;top:383px;" width="25" height="25" viewBox="0 0 25 25"><circle cx="12" cy="12" r="10.5" fill="none" stroke="#333" stroke-width="1.1"/><path d="M8.5 9a3.5 3.5 0 1 1 4.5 3.3v2.7" fill="none" stroke="#333" stroke-width="1.1"/><circle cx="13" cy="18" r="0.9" fill="#333"/></svg><svg style="left:1885px;top:414px;" width="25" height="25" viewBox="0 0 25 25"><path d="M2 14l10-4 10 4v4l-10 4-10-4z" fill="#ddd" stroke="#555"/><path d="M8 4a4 2 0 0 1 8 0v8a4 2 0 0 1-8 0z" fill="#ee8a22"/><ellipse cx="12" cy="4" rx="4" ry="2" fill="#f5b060"/><rect x="12" y="15" width="12" height="9" fill="#fff" stroke="#222"/><text x="13.5" y="22.5" font-size="7" font-weight="bold" font-family="Liberation Sans" fill="#111">P=</text></svg><svg style="left:1885px;top:448px;" width="25" height="25" viewBox="0 0 25 25"><path d="M5 6l7-4 7 4v7l-7 4-7-4z" fill="#f0f0f0" stroke="#aaa"/><path d="M5 13l7 4 7-4v6l-7 4-7-4z" fill="#ee8a22"/><path d="M5 6l7 4 7-4M12 10v13" stroke="#aaa" fill="none"/></svg><svg style="left:1885px;top:479px;" width="25" height="25" viewBox="0 0 25 25"><path d="M14 9l2 5 5 0-4 3 2 5-5-3-4 3 1-5-4-3h5z" fill="#f2e070" stroke="#c8a030" stroke-width="0.8"/><path d="M9 7l5-5 4 2-1 4-5 2z" fill="#d8b890"/><path d="M15 2l3-1 2 3-2 2z" fill="#3a3aa0"/><path d="M1 14h7M3 17h5M1 20h6" stroke="#5ab0e0" stroke-width="1.2"/></svg><div style="left:1885px;top:513px;width:26px;height:1px;background:#e0e0e0"></div><svg style="left:1887px;top:1036px;" width="6" height="8" viewBox="0 0 6 8"><path d="M5 0v8L0 4z" fill="#222"/></svg><div style="left:3px;top:1049px;width:1912px;height:1px;background:#bdbdbd"></div><div style="left:3px;top:1050px;width:1912px;height:21px;background:#fefdfe"></div><div class="t" style="left:5.5px;top:1053.2px;font-size:11px;line-height:14px;color:#111;font-weight:bold;transform:scaleX(0.981);">Select model objects to create force on</div><div class="t" style="left:885.5px;top:1053.2px;font-size:11px;line-height:14px;color:#111;font-weight:bold;transform:scaleX(0.990);">Polygon Face selected - total 2</div><svg style="left:1771px;top:1052px;" width="14" height="16" viewBox="0 0 14 16"><path d="M7 1.5a1 1 0 0 1 1 1 4.5 4.5 0 0 1 3.5 4.5v4l2 2H.5l2-2v-4A4.5 4.5 0 0 1 6 2.5a1 1 0 0 1 1-1z" fill="none" stroke="#444" stroke-width="1.1"/><path d="M5.5 14a1.5 1.5 0 0 0 3 0" fill="none" stroke="#444"/></svg><div class="t" style="left:1790.2px;top:1053.3px;font-size:12px;line-height:15px;color:#1e1e1e;transform:scaleX(1.015);">1 Notification</div><svg style="left:1700px;top:850px;" width="135" height="125" viewBox="0 0 135 125">
<defs>
<linearGradient id="tz" x1="0" y1="0" x2="1" y2="0"><stop offset="0" stop-color="#0a1fa0"/><stop offset="0.5" stop-color="#2a4ae8"/><stop offset="1" stop-color="#0a1a90"/></linearGradient>
<linearGradient id="tx" x1="0" y1="0" x2="0" y2="1"><stop offset="0" stop-color="#f05070"/><stop offset="1" stop-color="#a01030"/></linearGradient>
<linearGradient id="ty" x1="0" y1="0" x2="0" y2="1"><stop offset="0" stop-color="#60d060"/><stop offset="1" stop-color="#1a7a20"/></linearGradient>
</defs>
<path d="M43.4 64.9L74 58L103 69L70 77z M43.4 64.9v40.6 M70 77v40.7 M103 69v40.6 M43.4 105.5L70 117.7L103 109.6" fill="none" stroke="#cfcfcf" stroke-width="1"/>
<path d="M73.4 17.5l-5.2 15.5h3v35.5h4.4v-35.5h3z" fill="url(#tz)"/>
<path d="M57.8 89.8l-27 7.3 -1 -3.2 -14 7.8 15.8 1.2 -0.6 -2.5 27.3 -6.4z" fill="url(#tx)"/>
<path d="M84.5 90.5l23.5 9.2 1.3 -3.5 10 10.5 -15.2 -1 1.3 -3 -22.8 -8.5z" fill="url(#ty)"/>
<text x="70" y="14.7" font-size="11" font-family="Liberation Sans" fill="#3040c0">Z</text>
<text x="5" y="108" font-size="11" font-family="Liberation Sans" fill="#c02040">X</text>
<text x="120" y="115" font-size="11" font-family="Liberation Sans" fill="#30a040">Y</text>
</svg><svg style="left:0px;top:0px;pointer-events:none" width="1920" height="1080" viewBox="0 0 1920 1080"><defs><clipPath id="cF"><path d="M1493.1 626.2L1491.7 627.3L1490.2 628.3L1488.6 629.4L1487.0 630.5L1485.4 631.7L1483.7 632.8L1482.1 634.0L1480.5 635.1L1478.8 636.3L1477.2 637.4L1475.6 638.6L1473.9 639.7L1472.3 640.9L1470.7 642.0L1469.0 643.2L1467.4 644.3L1465.7 645.5L1464.1 646.6L1462.5 647.8L1460.8 648.9L1459.2 650.1L1457.6 651.2L1455.9 652.4L1454.3 653.5L1452.7 654.7L1451.0 655.8L1449.4 657.0L1447.7 658.1L1446.1 659.3L1444.5 660.4L1442.8 661.6L1441.2 662.7L1439.6 663.9L1437.9 665.0L1436.3 666.2L1434.7 667.3L1433.0 668.5L1431.4 669.6L1429.8 670.8L1428.1 671.9L1426.5 673.1L1424.8 674.2L1423.2 675.4L1421.6 676.5L1419.9 677.7L1418.3 678.8L1416.7 680.0L1415.0 681.1L1413.4 682.3L1411.8 683.4L1410.1 684.6L1408.5 685.7L1406.8 686.9L1405.2 688.0L1403.6 689.2L1401.9 690.3L1400.3 691.5L1398.7 692.6L1397.0 693.8L1395.4 694.9L1393.8 696.1L1392.1 697.2L1390.5 698.4L1388.8 699.5L1387.2 700.7L1385.6 701.8L1383.9 703.0L1382.3 704.1L1380.7 705.3L1379.0 706.4L1377.4 707.6L1375.8 708.7L1374.1 709.9L1372.5 711.0L1370.8 712.2L1369.2 713.3L1367.6 714.5L1365.9 715.6L1364.3 716.8L1362.7 717.9L1361.0 719.1L1359.4 720.2L1357.8 721.4L1356.1 722.5L1354.5 723.7L1352.8 724.8L1351.2 726.0L1349.6 727.1L1347.9 728.3L1346.3 729.4L1344.7 730.6L1343.0 731.7L1341.4 732.9L1339.8 734.0L1338.1 735.2L1336.5 736.3L1334.9 737.5L1333.2 738.6L1331.6 739.8L1329.9 740.9L1328.3 742.1L1326.7 743.2L1325.0 744.4L1323.4 745.5L1321.8 746.7L1320.1 747.8L1318.5 749.0L1316.9 750.1L1315.2 751.3L1313.6 752.4L1311.9 753.6L1310.3 754.7L1308.7 755.9L1307.0 757.0L1305.4 758.2L1303.8 759.3L1302.1 760.5L1300.5 761.6L1298.9 762.8L1297.2 763.9L1295.6 765.1L1293.9 766.2L1292.3 767.4L1290.7 768.5L1289.0 769.7L1287.4 770.8L1285.8 772.0L1284.1 773.1L1282.5 774.3L1280.9 775.4L1279.2 776.6L1277.6 777.8L1275.9 778.9L1274.3 780.1L1272.7 781.2L1271.0 782.4L1269.4 783.5L1267.8 784.7L1266.1 785.8L1264.5 787.0L1262.9 788.1L1261.2 789.3L1259.6 790.4L1257.9 791.6L1256.3 792.7L1254.7 793.9L1253.0 795.0L1251.4 796.2L1249.8 797.3L1248.1 798.5L1246.5 799.6L1244.9 800.8L1243.2 801.9L1241.6 803.1L1240.0 804.2L1238.3 805.4L1236.7 806.5L1235.0 807.7L1233.4 808.8L1231.8 810.0L1230.1 811.1L1228.5 812.3L1226.9 813.4L1225.2 814.6L1223.6 815.7L1222.0 816.9L1220.3 818.0L1218.7 819.2L1217.0 820.3L1215.4 821.5L1213.8 822.6L1212.1 823.8L1210.5 824.9L1208.9 826.1L1207.2 827.2L1205.6 828.4L1204.0 829.5L1202.3 830.7L1200.7 831.8L1199.0 833.0L1197.4 834.1L1195.8 835.3L1194.1 836.4L1192.5 837.6L1190.9 838.7L1189.2 839.9L1187.6 841.0L1186.0 842.2L1184.3 843.3L1182.7 844.5L1181.0 845.6L1179.4 846.8L1177.8 847.9L1176.1 849.1L1174.5 850.2L1172.9 851.4L1171.2 852.5L1169.6 853.7L1168.0 854.8L1166.3 856.0L1164.7 857.1L1163.0 858.3L1161.4 859.4L1159.8 860.6L1158.1 861.7L1156.5 862.9L1154.9 864.0L1153.2 865.2L1151.6 866.3L1150.0 867.5L1148.3 868.6L1146.7 869.8L1145.1 870.9L1143.4 872.1L1141.8 873.2L1140.1 874.4L1138.5 875.5L1136.9 876.7L1135.2 877.8L1133.6 879.0L1132.0 880.1L1130.3 881.3L1128.7 882.4L1127.1 883.6L1125.4 884.7L1123.8 885.9L1122.1 887.0L1120.5 888.2L1118.9 889.3L1117.2 890.5L1115.6 891.6L1114.0 892.8L1112.3 893.9L1110.7 895.1L1109.1 896.2L1107.4 897.4L1105.8 898.5L1104.1 899.7L1102.5 900.8L1100.9 902.0L1099.2 903.1L1097.6 904.3L1096.0 905.4L1094.3 906.6L1092.7 907.7L1091.1 908.9L1089.4 910.0L1087.8 911.2L1086.1 912.3L1084.5 913.5L1082.9 914.6L1081.2 915.8L1079.6 916.9L1078.0 918.1L1076.3 919.2L1074.7 920.4L1073.1 921.5L1071.4 922.7L1069.8 923.8L1068.1 925.0L1066.5 926.1L1064.9 927.3L1063.2 928.4L1061.6 929.5L1059.9 930.6L1058.3 931.8L1056.6 932.9L1054.9 933.9L1053.2 935.0L1051.5 936.1L1049.8 937.1L1048.1 938.2L1046.4 939.2L1044.7 940.2L1043.0 941.2L1041.2 942.2L1039.5 943.2L1037.7 944.2L1036.0 945.1L1034.2 946.1L1032.4 947.0L1030.7 947.9L1028.9 948.8L1027.1 949.7L1025.3 950.6L1023.5 951.4L1021.7 952.3L1019.8 953.1L1018.0 953.9L1016.2 954.7L1014.3 955.5L1012.5 956.3L1010.6 957.0L1008.8 957.8L1006.9 958.5L1005.1 959.2L1003.2 959.9L1001.3 960.6L999.4 961.3L997.5 961.9L995.6 962.5L993.7 963.1L991.8 963.7L989.9 964.3L988.0 964.9L986.1 965.4L984.1 966.0L982.2 966.5L980.3 967.0L978.3 967.4L976.4 967.9L974.4 968.3L972.5 968.8L970.5 969.2L968.5 969.6L966.6 969.9L964.6 970.3L962.6 970.6L960.7 970.9L958.7 971.2L956.7 971.5L954.7 971.7L952.7 972.0L950.7 972.2L948.8 972.4L946.8 972.5L944.8 972.7L942.8 972.8L940.8 972.9L938.8 973.0L936.8 973.1L934.8 973.1L932.8 973.2L930.8 973.2L928.8 973.1L926.8 973.1L924.8 973.1L922.8 973.0L920.8 972.9L918.8 972.7L916.8 972.6L914.8 972.4L912.8 972.2L910.8 972.0L908.8 971.8L906.9 971.5L904.9 971.3L902.9 971.0L900.9 970.6L899.0 970.3L897.0 969.9L895.0 969.5L893.1 969.1L891.1 968.7L889.2 968.2L887.2 967.7L885.3 967.2L883.4 966.7L881.5 966.2L879.5 965.6L877.6 965.0L875.7 964.4L873.8 963.8L871.9 963.1L870.1 962.4L868.2 961.7L866.3 961.0L864.5 960.3L862.6 959.5L860.8 958.7L858.9 957.9L857.1 957.1L855.3 956.3L853.5 955.5L851.7 954.6L849.8 953.8L848.0 953.0L846.2 952.1L844.4 951.3L842.6 950.5L840.7 949.6L838.9 948.8L837.1 947.9L835.4 946.9L833.6 946.0L831.9 944.9L830.3 943.8L828.6 942.7L827.0 941.5L825.4 940.3L823.8 939.1L822.2 937.9L820.7 936.7L819.1 935.4L817.6 934.1L816.1 932.8L814.6 931.5L813.1 930.2L811.6 928.9L810.2 927.6L808.7 926.2L807.3 924.8L805.9 923.5L804.5 922.1L803.2 920.7L801.8 919.2L800.5 917.8L799.2 916.4L797.8 914.9L796.6 913.5L795.3 912.0L794.0 910.5L792.8 909.0L791.5 907.5L790.3 906.0L789.1 904.4L788.0 902.9L786.8 901.4L785.6 899.8L784.5 898.2L783.4 896.7L782.3 895.1L781.2 893.5L780.1 891.9L779.1 890.3L778.0 888.6L777.0 887.0L776.0 885.4L775.0 883.8L774.0 882.1L773.0 880.4L772.0 878.8L771.1 877.1L770.2 875.4L769.3 873.8L768.3 872.1L767.5 870.4L766.6 868.7L765.7 867.0L764.9 865.2L764.0 863.5L763.2 861.8L762.4 860.1L761.6 858.3L760.9 856.6L760.1 854.8L759.3 853.1L758.6 851.3L757.9 849.6L757.2 847.8L756.5 846.0L755.8 844.3L755.1 842.5L754.4 840.7L753.8 838.9L753.2 837.1L752.5 835.3L751.9 833.5L751.3 831.7L750.7 829.9L750.2 828.1L749.6 826.3L749.1 824.4L748.5 822.6L748.0 820.8L747.5 819.0L747.0 817.1L746.5 815.3L746.0 813.4L745.6 811.6L745.1 809.8L744.7 807.9L744.3 806.1L743.8 804.2L743.4 802.4L743.0 800.5L742.7 798.6L742.3 796.8L741.9 794.9L741.6 793.0L741.2 791.2L740.9 789.3L740.6 787.4L740.3 785.5L740.0 783.7L739.7 781.8L739.5 779.9L739.2 778.0L739.0 776.1L738.7 774.3L738.5 772.4L738.3 770.5L738.1 768.6L737.9 766.7L737.7 764.8L737.5 762.9L737.4 761.0L737.2 759.1L737.1 757.2L737.0 755.3L736.8 753.5L736.7 751.6L736.6 749.7L736.5 747.8L736.5 745.9L736.4 744.0L736.3 742.1L736.3 740.2L736.2 738.3L736.2 736.4L736.2 734.5L736.2 732.6L736.2 730.7L736.2 728.7L736.2 726.8L736.3 724.9L736.3 723.0L736.4 721.1L736.4 719.2L736.5 717.3L736.6 715.4L736.7 713.5L736.8 711.6L736.9 709.7L737.0 707.8L737.1 705.9L737.3 704.0L737.4 702.1L737.6 700.2L737.7 698.4L737.9 696.5L738.1 694.6L738.3 692.7L738.5 690.8L738.7 688.9L738.9 687.0L739.2 685.1L739.4 683.2L739.6 681.3L739.9 679.4L740.2 677.6L740.4 675.7L740.7 673.8L741.0 671.9L741.3 670.0L741.6 668.1L742.0 666.3L742.3 664.4L742.6 662.5L743.0 660.6L743.3 658.8L743.7 656.9L744.1 655.0L744.5 653.2L744.9 651.3L745.3 649.4L745.7 647.6L746.1 645.7L746.5 643.9L746.9 642.0L747.4 640.2L747.8 638.3L748.3 636.5L748.8 634.6L749.2 632.8L749.7 630.9L750.2 629.1L750.7 627.2L751.2 625.4L751.8 623.6L752.3 621.7L752.8 619.9L753.4 618.1L753.9 616.3L754.5 614.4L755.1 612.6L755.6 610.8L756.2 609.0L756.8 607.2L757.4 605.4L758.0 603.6L758.6 601.8L759.3 600.0L759.9 598.2L760.5 596.4L761.2 594.6L761.9 592.8L762.5 591.0L763.2 589.2L763.9 587.4L764.6 585.7L765.3 583.9L766.0 582.1L766.7 580.4L767.4 578.6L768.2 576.8L768.9 575.1L769.6 573.3L770.4 571.6L771.2 569.8L771.9 568.1L772.7 566.4L773.5 564.6L774.3 562.9L775.1 561.2L775.9 559.4L776.7 557.7L777.6 556.0L778.4 554.3L779.2 552.6L780.1 550.9L780.9 549.2L781.8 547.5L782.7 545.8L783.5 544.1L784.4 542.4L785.3 540.7L786.2 539.1L787.1 537.4L788.1 535.7L789.0 534.1L789.9 532.4L790.9 530.8L791.8 529.1L792.8 527.5L793.7 525.8L794.7 524.2L795.7 522.6L796.7 520.9L797.7 519.3L798.7 517.7L799.7 516.1L800.7 514.5L801.7 512.9L802.7 511.3L803.8 509.7L804.8 508.1L805.9 506.5L806.9 505.0L808.0 503.4L809.1 501.8L810.2 500.3L811.3 498.7L812.4 497.2L813.5 495.6L814.6 494.1L815.7 492.5L816.8 491.0L818.0 489.5L819.1 488.0L820.3 486.5L821.4 485.0L822.6 483.5L823.8 482.0L824.9 480.5L826.1 479.0L827.3 477.5L828.5 476.1L829.7 474.6L830.9 473.2L832.2 471.7L833.4 470.3L834.6 468.8L835.9 467.4L837.1 466.0L838.4 464.6L839.6 463.2L840.9 461.8L842.2 460.4L843.5 459.0L844.8 457.6L846.1 456.2L847.4 454.9L848.7 453.5L850.0 452.2L851.4 450.8L852.7 449.5L854.0 448.1L855.4 446.8L856.7 445.5L858.1 444.2L859.5 442.9L860.9 441.6L862.2 440.3L863.6 439.1L865.0 437.8L866.4 436.5L867.8 435.3L869.3 434.0L870.7 432.8L872.1 431.6L873.6 430.4L875.0 429.1L876.5 427.9L877.9 426.8L879.4 425.6L880.9 424.4L882.3 423.2L883.8 422.1L885.3 420.9L886.8 419.8L888.3 418.7L889.9 417.5L891.4 416.4L892.9 415.3L894.4 414.2L896.0 413.2L897.5 412.1L899.1 411.0L900.6 410.0L902.2 408.9L903.8 407.9L905.4 406.9L906.9 405.9L908.5 404.9L910.1 403.9L911.7 402.9L913.3 401.9L915.0 401.0L916.6 400.0L918.2 399.1L919.9 398.2L921.5 397.3L923.1 396.4L924.8 395.5L926.5 394.6L928.1 393.7L929.8 392.9L931.5 392.0L933.2 391.2L934.9 390.4L936.6 389.6L938.3 388.8L940.0 388.0L941.7 387.2L943.4 386.4L945.1 385.7L946.9 385.0L948.6 384.3L950.4 383.5L952.1 382.9L953.9 382.2L955.6 381.5L957.4 380.9L959.2 380.2L960.9 379.6L962.7 379.0L964.5 378.4L966.3 377.8L968.1 377.2L969.9 376.7L971.7 376.1L973.5 375.6L975.3 375.1L977.2 374.6L979.0 374.1L980.8 373.7L982.7 373.2L984.5 372.8L986.4 372.4L988.2 372.0L990.1 371.6L991.9 371.2L993.8 370.9L995.7 370.6L997.6 370.2L999.4 369.9L1001.3 369.7L1003.2 369.4L1005.1 369.2L1007.0 368.9L1008.9 368.7L1010.8 368.5L1012.7 368.4L1014.6 368.2L1016.5 368.1L1018.5 367.9L1020.4 367.9L1022.3 367.8L1024.2 367.7L1026.1 367.7L1028.1 367.7L1030.0 367.7L1031.9 367.7L1033.9 367.7L1035.8 367.8L1037.8 367.9L1039.7 368.1L1041.7 368.3L1043.6 368.6L1045.6 368.9L1047.6 369.2L1049.5 369.5L1051.5 369.9L1053.5 370.2L1055.4 370.6L1057.4 370.9L1059.4 371.3L1061.3 371.6L1063.3 372.0L1065.3 372.3L1067.3 372.7L1069.2 373.0L1071.2 373.4L1073.2 373.7L1075.1 374.1L1077.1 374.4L1079.1 374.8L1081.0 375.1L1083.0 375.5L1085.0 375.8L1086.9 376.2L1088.9 376.5L1090.9 376.9L1092.9 377.2L1094.8 377.6L1096.8 377.9L1098.8 378.3L1100.7 378.6L1102.7 379.0L1104.7 379.3L1106.6 379.7L1108.6 380.0L1110.6 380.4L1112.5 380.7L1114.5 381.1L1116.5 381.4L1118.5 381.8L1120.4 382.1L1122.4 382.5L1124.4 382.8L1126.3 383.2L1128.3 383.5L1130.3 383.9L1132.2 384.2L1134.2 384.6L1136.2 384.9L1138.1 385.3L1140.1 385.6L1142.1 386.0L1144.1 386.3L1146.0 386.7L1148.0 387.0L1150.0 387.4L1151.9 387.7L1153.9 388.1L1155.9 388.4L1157.8 388.8L1159.8 389.1L1161.8 389.5L1163.7 389.8L1165.7 390.2L1167.7 390.5L1169.7 390.9L1171.6 391.2L1173.6 391.6L1175.6 391.9L1177.5 392.2L1179.5 392.6L1181.5 392.9L1183.4 393.3L1185.4 393.6L1187.4 394.0L1189.3 394.3L1191.3 394.7L1193.3 395.0L1195.3 395.4L1197.2 395.7L1199.2 396.1L1201.2 396.4L1203.1 396.8L1205.1 397.1L1207.1 397.5L1209.0 397.8L1211.0 398.2L1213.0 398.5L1214.9 398.9L1216.9 399.2L1218.9 399.6L1220.9 399.9L1222.8 400.3L1224.8 400.6L1226.8 401.0L1228.7 401.3L1230.7 401.7L1232.7 402.0L1234.6 402.4L1236.6 402.7L1238.6 403.1L1240.5 403.4L1242.5 403.8L1244.5 404.1L1246.5 404.5L1248.4 404.8L1250.4 405.2L1252.4 405.5L1254.3 405.9L1256.3 406.2L1258.3 406.6L1260.2 406.9L1262.2 407.3L1264.2 407.6L1266.1 408.0L1268.1 408.3L1270.1 408.7L1272.1 409.0L1274.0 409.4L1276.0 409.7L1278.0 410.1L1279.9 410.4L1281.9 410.8L1283.9 411.1L1285.8 411.5L1287.8 411.8L1289.8 412.2L1291.7 412.5L1293.7 412.9L1295.7 413.2L1297.7 413.6L1299.6 413.9L1301.6 414.3L1303.6 414.6L1305.5 415.0L1307.5 415.3L1309.5 415.7L1311.4 416.0L1313.4 416.4L1315.4 416.7L1317.3 417.1L1319.3 417.4L1321.3 417.8L1323.3 418.1L1325.2 418.5L1327.2 418.8L1329.2 419.2L1331.1 419.5L1333.1 419.9L1335.1 420.2L1337.0 420.6L1339.0 420.9L1341.0 421.3L1342.9 421.6L1344.9 422.0L1346.9 422.3L1348.9 422.7L1350.8 423.0L1352.8 423.4L1354.8 423.7L1356.7 424.1L1358.7 424.4L1360.7 424.8L1362.6 425.1L1364.6 425.5L1366.6 425.8L1368.5 426.2L1370.5 426.5L1372.5 426.9L1374.4 427.2L1376.4 427.6L1378.4 427.9L1380.4 428.3L1382.3 428.6L1384.3 429.0L1386.3 429.3L1388.2 429.7L1390.2 430.0L1392.2 430.4L1394.1 430.7L1396.1 431.0L1398.1 431.4L1400.0 431.7L1402.0 432.1L1404.0 432.4L1406.0 432.8L1407.9 433.1L1409.9 433.5L1411.9 433.8L1413.8 434.2L1415.8 434.5L1417.8 434.9L1419.7 435.2L1421.7 435.6L1423.7 435.9L1425.6 436.3L1427.6 436.6L1429.6 437.0L1431.6 437.3L1433.5 437.7L1435.5 438.0L1437.5 438.4L1439.4 438.7L1441.4 439.0L1443.4 439.4L1445.3 439.7L1447.3 440.1L1449.3 440.4L1451.2 440.8L1453.2 441.2L1455.2 441.5L1457.1 441.9L1459.1 442.2L1461.1 442.6L1463.0 443.0L1465.0 443.3L1467.0 443.7L1468.9 444.0L1470.9 444.4L1472.9 444.6L1474.8 444.8L1476.8 444.9L1478.7 444.9L1480.7 444.8L1482.7 444.8L1484.6 444.8L1486.6 445.0L1488.6 445.3L1490.5 445.7L1492.5 446.1L1494.4 446.6L1496.4 447.1L1498.2 447.8L1500.0 448.7L1501.8 449.6L1503.5 450.7L1505.1 451.8L1506.7 453.0L1508.2 454.3L1509.7 455.6L1511.2 456.9L1512.7 458.3L1514.1 459.7L1515.5 461.1L1516.8 462.6L1518.2 464.1L1519.5 465.6L1520.7 467.2L1522.0 468.7L1523.1 470.3L1524.3 472.0L1525.4 473.6L1526.5 475.3L1527.5 477.0L1528.5 478.8L1529.4 480.5L1530.3 482.3L1531.2 484.1L1532.0 486.0L1532.8 487.8L1533.5 489.7L1534.2 491.5L1534.9 493.4L1535.6 495.3L1536.2 497.2L1536.7 499.1L1537.3 501.0L1537.8 503.0L1538.3 504.9L1538.7 506.8L1539.1 508.8L1539.5 510.8L1539.8 512.7L1540.1 514.7L1540.3 516.7L1540.5 518.7L1540.7 520.7L1540.8 522.7L1540.9 524.7L1540.9 526.7L1540.9 528.7L1540.9 530.7L1540.8 532.7L1540.7 534.7L1540.5 536.7L1540.4 538.6L1540.1 540.6L1539.9 542.6L1539.6 544.6L1539.4 546.6L1539.0 548.6L1538.7 550.5L1538.3 552.5L1537.9 554.4L1537.5 556.4L1537.1 558.4L1536.6 560.3L1536.1 562.2L1535.6 564.2L1535.1 566.1L1534.5 568.0L1534.0 569.9L1533.4 571.9L1532.8 573.8L1532.1 575.6L1531.4 577.5L1530.7 579.4L1530.0 581.3L1529.3 583.1L1528.5 584.9L1527.6 586.8L1526.8 588.6L1525.9 590.3L1524.9 592.1L1523.9 593.8L1522.9 595.6L1521.9 597.3L1520.8 598.9L1519.7 600.6L1518.5 602.2L1517.3 603.8L1516.1 605.4L1514.8 607.0L1513.5 608.5L1512.2 610.0L1510.8 611.4L1509.4 612.8L1508.0 614.2L1506.5 615.6L1505.0 616.9L1503.5 618.2L1501.9 619.4L1500.4 620.7L1498.8 621.9L1497.3 623.1L1495.9 624.2L1494.5 625.2z"/></clipPath><clipPath id="ch0"><ellipse cx="1133.3" cy="453.0" rx="26.8" ry="19.9" transform="rotate(-69 1133.3 453.0)" fill="none" stroke="none" stroke-width="1" /></clipPath><clipPath id="ch1"><ellipse cx="987.0" cy="418.0" rx="26.8" ry="19.9" transform="rotate(-69 987.0 418.0)" fill="none" stroke="none" stroke-width="1" /></clipPath><clipPath id="ch2"><ellipse cx="836.0" cy="529.0" rx="26.8" ry="19.9" transform="rotate(-69 836.0 529.0)" fill="none" stroke="none" stroke-width="1" /></clipPath><clipPath id="ch3"><ellipse cx="774.0" cy="724.0" rx="26.8" ry="19.9" transform="rotate(-69 774.0 724.0)" fill="none" stroke="none" stroke-width="1" /></clipPath><clipPath id="ch4"><ellipse cx="832.5" cy="886.0" rx="26.8" ry="19.9" transform="rotate(-69 832.5 886.0)" fill="none" stroke="none" stroke-width="1" /></clipPath><clipPath id="ch5"><ellipse cx="981.0" cy="921.0" rx="26.8" ry="19.9" transform="rotate(-69 981.0 921.0)" fill="none" stroke="none" stroke-width="1" /></clipPath><clipPath id="ch6"><ellipse cx="1130.0" cy="809.5" rx="26.8" ry="19.9" transform="rotate(-69 1130.0 809.5)" fill="none" stroke="none" stroke-width="1" /></clipPath><clipPath id="ch7"><ellipse cx="1193.0" cy="615.0" rx="26.8" ry="19.9" transform="rotate(-69 1193.0 615.0)" fill="none" stroke="none" stroke-width="1" /></clipPath><clipPath id="cH"><ellipse cx="976.5" cy="667.5" rx="110.5" ry="82.2" transform="rotate(-67.7 976.5 667.5)" fill="none" stroke="none" stroke-width="1" /></clipPath><clipPath id="cB"><ellipse cx="1469.0" cy="554.0" rx="64.3" ry="47.7" transform="rotate(-69 1469.0 554.0)" fill="none" stroke="none" stroke-width="1" /></clipPath><linearGradient id="gw" x1="0" y1="0" x2="1" y2="0"><stop offset="0" stop-color="#2f6446"/><stop offset="1" stop-color="#4f9068"/></linearGradient></defs><path d="M1493.6 625.9L1491.9 627.1L1490.3 628.2L1488.7 629.4L1487.0 630.5L1485.4 631.7L1483.7 632.8L1482.1 634.0L1480.5 635.1L1478.8 636.3L1477.2 637.4L1475.6 638.6L1473.9 639.7L1472.3 640.9L1470.7 642.0L1469.0 643.2L1467.4 644.3L1465.7 645.5L1464.1 646.6L1462.5 647.8L1460.8 648.9L1459.2 650.1L1457.6 651.2L1455.9 652.4L1454.3 653.5L1452.7 654.7L1451.0 655.8L1449.4 657.0L1447.7 658.1L1446.1 659.3L1444.5 660.4L1442.8 661.6L1441.2 662.7L1439.6 663.9L1437.9 665.0L1436.3 666.2L1434.7 667.3L1433.0 668.5L1431.4 669.6L1429.8 670.8L1428.1 671.9L1426.5 673.1L1424.8 674.2L1423.2 675.4L1421.6 676.5L1419.9 677.7L1418.3 678.8L1416.7 680.0L1415.0 681.1L1413.4 682.3L1411.8 683.4L1410.1 684.6L1408.5 685.7L1406.8 686.9L1405.2 688.0L1403.6 689.2L1401.9 690.3L1400.3 691.5L1398.7 692.6L1397.0 693.8L1395.4 694.9L1393.8 696.1L1392.1 697.2L1390.5 698.4L1388.8 699.5L1387.2 700.7L1385.6 701.8L1383.9 703.0L1382.3 704.1L1380.7 705.3L1379.0 706.4L1377.4 707.6L1375.8 708.7L1374.1 709.9L1372.5 711.0L1370.8 712.2L1369.2 713.3L1367.6 714.5L1365.9 715.6L1364.3 716.8L1362.7 717.9L1361.0 719.1L1359.4 720.2L1357.8 721.4L1356.1 722.5L1354.5 723.7L1352.8 724.8L1351.2 726.0L1349.6 727.1L1347.9 728.3L1346.3 729.4L1344.7 730.6L1343.0 731.7L1341.4 732.9L1339.8 734.0L1338.1 735.2L1336.5 736.3L1334.9 737.5L1333.2 738.6L1331.6 739.8L1329.9 740.9L1328.3 742.1L1326.7 743.2L1325.0 744.4L1323.4 745.5L1321.8 746.7L1320.1 747.8L1318.5 749.0L1316.9 750.1L1315.2 751.3L1313.6 752.4L1311.9 753.6L1310.3 754.7L1308.7 755.9L1307.0 757.0L1305.4 758.2L1303.8 759.3L1302.1 760.5L1300.5 761.6L1298.9 762.8L1297.2 763.9L1295.6 765.1L1293.9 766.2L1292.3 767.4L1290.7 768.5L1289.0 769.7L1287.4 770.8L1285.8 772.0L1284.1 773.1L1282.5 774.3L1280.9 775.4L1279.2 776.6L1277.6 777.8L1275.9 778.9L1274.3 780.1L1272.7 781.2L1271.0 782.4L1269.4 783.5L1267.8 784.7L1266.1 785.8L1264.5 787.0L1262.9 788.1L1261.2 789.3L1259.6 790.4L1257.9 791.6L1256.3 792.7L1254.7 793.9L1253.0 795.0L1251.4 796.2L1249.8 797.3L1248.1 798.5L1246.5 799.6L1244.9 800.8L1243.2 801.9L1241.6 803.1L1240.0 804.2L1238.3 805.4L1236.7 806.5L1235.0 807.7L1233.4 808.8L1231.8 810.0L1230.1 811.1L1228.5 812.3L1226.9 813.4L1225.2 814.6L1223.6 815.7L1222.0 816.9L1220.3 818.0L1218.7 819.2L1217.0 820.3L1215.4 821.5L1213.8 822.6L1212.1 823.8L1210.5 824.9L1208.9 826.1L1207.2 827.2L1205.6 828.4L1204.0 829.5L1202.3 830.7L1200.7 831.8L1199.0 833.0L1197.4 834.1L1195.8 835.3L1194.1 836.4L1192.5 837.6L1190.9 838.7L1189.2 839.9L1187.6 841.0L1186.0 842.2L1184.3 843.3L1182.7 844.5L1181.0 845.6L1179.4 846.8L1177.8 847.9L1176.1 849.1L1174.5 850.2L1172.9 851.4L1171.2 852.5L1169.6 853.7L1168.0 854.8L1166.3 856.0L1164.7 857.1L1163.0 858.3L1161.4 859.4L1159.8 860.6L1158.1 861.7L1156.5 862.9L1154.9 864.0L1153.2 865.2L1151.6 866.3L1150.0 867.5L1148.3 868.6L1146.7 869.8L1145.1 870.9L1143.4 872.1L1141.8 873.2L1140.1 874.4L1138.5 875.5L1136.9 876.7L1135.2 877.8L1133.6 879.0L1132.0 880.1L1130.3 881.3L1128.7 882.4L1127.1 883.6L1125.4 884.7L1123.8 885.9L1122.1 887.0L1120.5 888.2L1118.9 889.3L1117.2 890.5L1115.6 891.6L1114.0 892.8L1112.3 893.9L1110.7 895.1L1109.1 896.2L1107.4 897.4L1105.8 898.5L1104.1 899.7L1102.5 900.8L1100.9 902.0L1099.2 903.1L1097.6 904.3L1096.0 905.4L1094.3 906.6L1092.7 907.7L1091.1 908.9L1089.4 910.0L1087.8 911.2L1086.1 912.3L1084.5 913.5L1082.9 914.6L1081.2 915.8L1079.6 916.9L1078.0 918.1L1076.3 919.2L1074.7 920.4L1073.1 921.5L1071.4 922.7L1069.8 923.8L1068.1 925.0L1066.5 926.1L1064.9 927.3L1063.2 928.4L1061.6 929.5L1059.9 930.7L1058.3 931.8L1056.6 932.9L1054.9 934.0L1053.2 935.1L1051.5 936.1L1049.8 937.2L1048.1 938.2L1046.4 939.2L1044.7 940.3L1043.0 941.3L1041.2 942.3L1039.5 943.2L1037.7 944.2L1036.0 945.2L1034.2 946.1L1032.4 947.0L1030.7 947.9L1028.9 948.8L1027.1 949.7L1025.3 950.6L1023.5 951.5L1021.7 952.3L1019.9 953.1L1018.0 953.9L1016.2 954.8L1014.4 955.5L1012.5 956.3L1010.7 957.1L1008.8 957.8L1006.9 958.5L1005.1 959.2L1003.2 959.9L1001.3 960.6L999.4 961.3L997.5 961.9L995.6 962.6L993.7 963.2L991.8 963.8L989.9 964.4L988.0 964.9L986.1 965.5L984.1 966.0L982.2 966.5L980.3 967.0L978.3 967.5L976.4 967.9L974.4 968.4L972.5 968.8L970.5 969.2L968.6 969.6L966.6 970.0L964.6 970.3L962.6 970.6L960.7 971.0L958.7 971.2L956.7 971.5L954.7 971.8L952.7 972.0L950.8 972.2L948.8 972.4L946.8 972.6L944.8 972.7L942.8 972.9L940.8 973.0L938.8 973.1L936.8 973.1L934.8 973.2L932.8 973.2L930.8 973.2L928.8 973.2L926.8 973.2L924.8 973.1L922.8 973.0L920.8 972.9L918.8 972.8L916.8 972.6L914.8 972.5L912.8 972.3L910.8 972.1L908.8 971.8L906.9 971.6L904.9 971.3L902.9 971.0L900.9 970.7L899.0 970.3L897.0 970.0L895.0 969.6L893.1 969.2L891.1 968.7L889.2 968.3L887.2 967.8L885.3 967.3L883.4 966.8L881.4 966.2L879.5 965.6L877.6 965.1L875.7 964.4L873.8 963.8L871.9 963.2L870.0 962.5L868.2 961.8L866.3 961.0L864.5 960.3L862.6 959.5L860.8 958.7L858.9 957.9L857.1 957.1L855.3 956.3L853.5 955.5L851.7 954.6L849.8 953.8L848.0 953.0L846.2 952.1L844.4 951.3L842.6 950.5L840.7 949.7L838.9 948.8L837.1 948.0L835.3 947.1L833.5 946.2L831.7 945.3L830.0 944.3L828.2 943.4L826.5 942.4L824.7 941.4L823.0 940.4L821.3 939.3L819.6 938.3L817.9 937.2L816.3 936.1L814.6 935.0L813.0 933.9L811.3 932.7L809.7 931.5L808.1 930.3L806.5 929.1L804.9 927.9L803.3 926.7L801.8 925.4L800.2 924.1L798.7 922.9L797.2 921.5L795.7 920.2L794.2 918.9L792.7 917.5L791.3 916.2L789.9 914.8L788.4 913.4L787.0 912.0L785.6 910.5L784.2 909.1L782.9 907.6L781.5 906.2L780.2 904.7L778.8 903.2L777.5 901.7L776.2 900.1L775.0 898.6L773.7 897.0L772.5 895.5L771.2 893.9L770.0 892.3L768.8 890.7L767.6 889.1L766.4 887.5L765.3 885.9L764.1 884.2L763.0 882.6L761.9 880.9L760.8 879.2L759.7 877.5L758.7 875.9L757.6 874.2L756.6 872.4L755.6 870.7L754.5 869.0L753.6 867.3L752.6 865.5L751.6 863.8L750.7 862.0L749.7 860.2L748.8 858.4L747.9 856.7L747.0 854.9L746.2 853.1L745.3 851.3L744.5 849.4L743.6 847.6L742.8 845.8L742.0 844.0L741.2 842.1L740.5 840.3L739.7 838.4L739.0 836.6L738.3 834.7L737.5 832.8L736.8 831.0L736.2 829.1L735.5 827.2L734.8 825.3L734.2 823.4L733.6 821.5L732.9 819.6L732.3 817.7L731.8 815.8L731.2 813.9L730.6 812.0L730.1 810.0L729.5 808.1L729.0 806.2L728.5 804.2L728.0 802.3L727.5 800.4L727.1 798.4L726.6 796.5L726.2 794.5L725.7 792.6L725.3 790.6L724.9 788.7L724.5 786.7L724.2 784.7L723.8 782.8L723.4 780.8L723.1 778.8L722.8 776.8L722.5 774.9L722.2 772.9L721.9 770.9L721.6 768.9L721.3 767.0L721.1 765.0L720.8 763.0L720.6 761.0L720.4 759.0L720.2 757.0L720.0 755.0L719.8 753.0L719.7 751.0L719.5 749.0L719.4 747.1L719.2 745.1L719.1 743.1L719.0 741.1L718.9 739.1L718.8 737.1L718.7 735.1L718.7 733.1L718.6 731.1L718.6 729.1L718.5 727.1L718.5 725.1L718.5 723.1L718.5 721.1L718.5 719.1L718.5 717.1L718.6 715.1L718.6 713.1L718.7 711.1L718.7 709.1L718.8 707.1L718.9 705.1L719.0 703.1L719.1 701.1L719.2 699.1L719.4 697.1L719.5 695.1L719.7 693.1L719.8 691.1L720.0 689.1L720.2 687.1L720.4 685.1L720.6 683.1L720.8 681.2L721.0 679.2L721.3 677.2L721.5 675.2L721.8 673.2L722.0 671.2L722.3 669.3L722.6 667.3L722.9 665.3L723.2 663.3L723.5 661.3L723.8 659.4L724.2 657.4L724.5 655.4L724.9 653.5L725.2 651.5L725.6 649.5L726.0 647.6L726.4 645.6L726.8 643.6L727.2 641.7L727.6 639.7L728.1 637.8L728.5 635.8L728.9 633.9L729.4 631.9L729.9 630.0L730.4 628.1L730.8 626.1L731.3 624.2L731.8 622.2L732.4 620.3L732.9 618.4L733.4 616.5L734.0 614.5L734.5 612.6L735.1 610.7L735.7 608.8L736.2 606.9L736.8 604.9L737.4 603.0L738.0 601.1L738.7 599.2L739.3 597.3L739.9 595.4L740.6 593.5L741.2 591.7L741.9 589.8L742.6 587.9L743.2 586.0L743.9 584.1L744.6 582.2L745.3 580.4L746.0 578.5L746.8 576.6L747.5 574.8L748.3 572.9L749.0 571.1L749.8 569.2L750.5 567.4L751.3 565.5L752.1 563.7L752.9 561.9L753.7 560.0L754.5 558.2L755.3 556.4L756.2 554.6L757.0 552.7L757.9 550.9L758.7 549.1L759.6 547.3L760.5 545.5L761.3 543.7L762.2 541.9L763.1 540.2L764.0 538.4L765.0 536.6L765.9 534.8L766.8 533.1L767.8 531.3L768.7 529.5L769.7 527.8L770.6 526.0L771.6 524.3L772.6 522.5L773.6 520.8L774.6 519.1L775.6 517.4L776.6 515.6L777.7 513.9L778.7 512.2L779.7 510.5L780.8 508.8L781.8 507.1L782.9 505.4L784.0 503.7L785.1 502.1L786.2 500.4L787.3 498.7L788.4 497.1L789.5 495.4L790.6 493.7L791.8 492.1L792.9 490.5L794.1 488.8L795.2 487.2L796.4 485.6L797.6 484.0L798.8 482.4L800.0 480.7L801.2 479.2L802.4 477.6L803.6 476.0L804.8 474.4L806.1 472.8L807.3 471.3L808.6 469.7L809.8 468.2L811.1 466.6L812.4 465.1L813.7 463.5L815.0 462.0L816.3 460.5L817.6 459.0L818.9 457.5L820.2 456.0L821.6 454.5L822.9 453.0L824.3 451.5L825.6 450.1L827.0 448.6L828.4 447.2L829.8 445.7L831.2 444.3L832.6 442.9L834.0 441.5L835.4 440.0L836.8 438.6L838.2 437.2L839.7 435.9L841.1 434.5L842.6 433.1L844.1 431.8L845.5 430.4L847.0 429.1L848.5 427.7L850.0 426.4L851.5 425.1L853.0 423.8L854.6 422.5L856.1 421.2L857.6 419.9L859.2 418.7L860.7 417.4L862.3 416.1L863.9 414.9L865.4 413.7L867.0 412.5L868.6 411.3L870.2 410.1L871.8 408.9L873.4 407.7L875.1 406.5L876.7 405.4L878.3 404.2L880.0 403.1L881.6 402.0L883.3 400.9L885.0 399.8L886.7 398.7L888.3 397.6L890.0 396.5L891.7 395.5L893.4 394.4L895.2 393.4L896.9 392.4L898.6 391.4L900.4 390.4L902.1 389.4L903.8 388.5L905.6 387.5L907.4 386.6L909.1 385.6L910.9 384.7L912.7 383.8L914.5 382.9L916.3 382.1L918.1 381.2L919.9 380.4L921.7 379.5L923.6 378.7L925.4 377.9L927.2 377.1L929.1 376.4L930.9 375.6L932.8 374.9L934.7 374.2L936.5 373.4L938.4 372.7L940.3 372.1L942.2 371.4L944.1 370.8L946.0 370.1L947.9 369.5L949.8 368.9L951.7 368.3L953.6 367.8L955.5 367.2L957.5 366.7L959.4 366.2L961.3 365.7L963.3 365.2L965.2 364.8L967.2 364.3L969.1 363.9L971.1 363.5L973.1 363.1L975.0 362.8L977.0 362.4L979.0 362.1L980.9 361.8L982.9 361.5L984.9 361.2L986.9 361.0L988.9 360.7L990.9 360.5L992.9 360.3L994.8 360.2L996.8 360.0L998.8 359.9L1000.8 359.8L1002.8 359.7L1004.8 359.6L1006.8 359.6L1008.8 359.6L1010.8 359.6L1012.8 359.6L1014.8 359.6L1016.8 359.7L1018.8 359.8L1020.8 359.9L1022.8 360.0L1024.8 360.1L1026.8 360.3L1028.8 360.5L1030.8 360.7L1032.8 361.0L1034.8 361.2L1036.7 361.5L1038.7 361.8L1040.7 362.1L1042.7 362.5L1044.6 362.8L1046.6 363.2L1048.6 363.5L1050.5 363.9L1052.5 364.2L1054.5 364.6L1056.4 364.9L1058.4 365.3L1060.4 365.6L1062.3 366.0L1064.3 366.3L1066.3 366.7L1068.3 367.0L1070.2 367.4L1072.2 367.7L1074.2 368.1L1076.1 368.4L1078.1 368.8L1080.1 369.1L1082.0 369.5L1084.0 369.8L1086.0 370.2L1087.9 370.5L1089.9 370.9L1091.9 371.2L1093.9 371.6L1095.8 371.9L1097.8 372.3L1099.8 372.6L1101.7 373.0L1103.7 373.3L1105.7 373.7L1107.6 374.0L1109.6 374.4L1111.6 374.7L1113.5 375.1L1115.5 375.4L1117.5 375.8L1119.5 376.1L1121.4 376.5L1123.4 376.8L1125.4 377.1L1127.3 377.5L1129.3 377.8L1131.3 378.2L1133.2 378.5L1135.2 378.9L1137.2 379.2L1139.1 379.6L1141.1 379.9L1143.1 380.3L1145.1 380.6L1147.0 381.0L1149.0 381.3L1151.0 381.7L1152.9 382.0L1154.9 382.4L1156.9 382.7L1158.8 383.1L1160.8 383.4L1162.8 383.8L1164.7 384.1L1166.7 384.5L1168.7 384.8L1170.7 385.2L1172.6 385.5L1174.6 385.9L1176.6 386.2L1178.5 386.6L1180.5 386.9L1182.5 387.3L1184.4 387.6L1186.4 388.0L1188.4 388.3L1190.3 388.7L1192.3 389.0L1194.3 389.4L1196.3 389.7L1198.2 390.1L1200.2 390.4L1202.2 390.8L1204.1 391.1L1206.1 391.5L1208.1 391.8L1210.0 392.2L1212.0 392.5L1214.0 392.9L1215.9 393.2L1217.9 393.6L1219.9 393.9L1221.9 394.3L1223.8 394.6L1225.8 395.0L1227.8 395.3L1229.7 395.7L1231.7 396.0L1233.7 396.4L1235.6 396.7L1237.6 397.1L1239.6 397.4L1241.5 397.8L1243.5 398.1L1245.5 398.5L1247.5 398.8L1249.4 399.2L1251.4 399.5L1253.4 399.9L1255.3 400.2L1257.3 400.6L1259.3 400.9L1261.2 401.3L1263.2 401.6L1265.2 402.0L1267.1 402.3L1269.1 402.7L1271.1 403.0L1273.1 403.4L1275.0 403.7L1277.0 404.1L1279.0 404.4L1280.9 404.8L1282.9 405.1L1284.9 405.5L1286.8 405.8L1288.8 406.2L1290.8 406.5L1292.7 406.9L1294.7 407.2L1296.7 407.6L1298.7 407.9L1300.6 408.3L1302.6 408.6L1304.6 409.0L1306.5 409.3L1308.5 409.7L1310.5 410.0L1312.4 410.4L1314.4 410.7L1316.4 411.1L1318.3 411.4L1320.3 411.8L1322.3 412.1L1324.3 412.5L1326.2 412.8L1328.2 413.2L1330.2 413.5L1332.1 413.9L1334.1 414.2L1336.1 414.6L1338.0 414.9L1340.0 415.3L1342.0 415.6L1343.9 415.9L1345.9 416.3L1347.9 416.6L1349.9 417.0L1351.8 417.3L1353.8 417.7L1355.8 418.0L1357.7 418.4L1359.7 418.7L1361.7 419.1L1363.6 419.4L1365.6 419.8L1367.6 420.1L1369.5 420.5L1371.5 420.8L1373.5 421.2L1375.5 421.5L1377.4 421.9L1379.4 422.2L1381.4 422.6L1383.3 422.9L1385.3 423.3L1387.3 423.6L1389.2 424.0L1391.2 424.3L1393.2 424.7L1395.1 425.0L1397.1 425.4L1399.1 425.7L1401.1 426.1L1403.0 426.4L1405.0 426.8L1407.0 427.1L1408.9 427.5L1410.9 427.8L1412.9 428.2L1414.8 428.5L1416.8 428.9L1418.8 429.2L1420.7 429.6L1422.7 429.9L1424.7 430.3L1426.7 430.6L1428.6 431.0L1430.6 431.3L1432.6 431.7L1434.5 432.0L1436.5 432.4L1438.5 432.7L1440.4 433.1L1442.4 433.4L1444.4 433.8L1446.3 434.2L1448.3 434.5L1450.3 434.9L1452.2 435.2L1454.2 435.6L1456.2 436.0L1458.1 436.3L1460.1 436.7L1462.1 437.0L1464.0 437.4L1466.0 437.8L1468.0 438.1L1469.9 438.5L1471.9 438.8L1473.9 439.2L1475.9 439.6L1477.8 439.9L1479.8 440.3L1481.7 440.8L1483.6 441.3L1485.5 442.0L1487.4 442.7L1489.3 443.4L1491.1 444.1L1493.0 444.9L1494.8 445.7L1496.6 446.5L1498.4 447.4L1500.2 448.4L1501.9 449.4L1503.6 450.5L1505.2 451.7L1506.8 452.9L1508.3 454.2L1509.8 455.5L1511.3 456.9L1512.7 458.2L1514.1 459.6L1515.5 461.1L1516.9 462.6L1518.2 464.1L1519.5 465.6L1520.8 467.1L1522.0 468.7L1523.2 470.3L1524.4 471.9L1525.5 473.6L1526.6 475.3L1527.6 477.0L1528.6 478.7L1529.5 480.5L1530.4 482.3L1531.2 484.1L1532.1 485.9L1532.8 487.8L1533.6 489.6L1534.3 491.5L1535.0 493.4L1535.6 495.3L1536.2 497.2L1536.8 499.1L1537.4 501.0L1537.9 502.9L1538.4 504.9L1538.8 506.8L1539.2 508.8L1539.6 510.8L1539.9 512.7L1540.2 514.7L1540.4 516.7L1540.6 518.7L1540.8 520.7L1540.9 522.7L1541.0 524.7L1541.0 526.7L1541.0 528.7L1540.9 530.7L1540.8 532.7L1540.7 534.7L1540.6 536.7L1540.4 538.7L1540.2 540.6L1540.0 542.6L1539.7 544.6L1539.4 546.6L1539.1 548.6L1538.7 550.5L1538.4 552.5L1538.0 554.5L1537.6 556.4L1537.1 558.4L1536.6 560.3L1536.2 562.3L1535.7 564.2L1535.1 566.1L1534.6 568.0L1534.0 570.0L1533.4 571.9L1532.8 573.8L1532.2 575.7L1531.5 577.6L1530.8 579.4L1530.1 581.3L1529.3 583.1L1528.5 585.0L1527.7 586.8L1526.8 588.6L1525.9 590.4L1525.0 592.1L1524.0 593.9L1523.0 595.6L1521.9 597.3L1520.9 599.0L1519.7 600.6L1518.6 602.3L1517.4 603.9L1516.2 605.5L1514.9 607.0L1513.6 608.5L1512.3 610.0L1510.9 611.5L1509.5 612.9L1508.0 614.3L1506.5 615.6L1505.0 616.9L1503.5 618.2L1501.9 619.5L1500.4 620.7L1498.8 621.9L1497.2 623.2L1495.6 624.4L1494.0 625.6z" fill="#3b7553" stroke="#24402f" stroke-width="1.1"/><path d="M1493.1 626.2L1491.7 627.3L1490.2 628.3L1488.6 629.4L1487.0 630.5L1485.4 631.7L1483.7 632.8L1482.1 634.0L1480.5 635.1L1478.8 636.3L1477.2 637.4L1475.6 638.6L1473.9 639.7L1472.3 640.9L1470.7 642.0L1469.0 643.2L1467.4 644.3L1465.7 645.5L1464.1 646.6L1462.5 647.8L1460.8 648.9L1459.2 650.1L1457.6 651.2L1455.9 652.4L1454.3 653.5L1452.7 654.7L1451.0 655.8L1449.4 657.0L1447.7 658.1L1446.1 659.3L1444.5 660.4L1442.8 661.6L1441.2 662.7L1439.6 663.9L1437.9 665.0L1436.3 666.2L1434.7 667.3L1433.0 668.5L1431.4 669.6L1429.8 670.8L1428.1 671.9L1426.5 673.1L1424.8 674.2L1423.2 675.4L1421.6 676.5L1419.9 677.7L1418.3 678.8L1416.7 680.0L1415.0 681.1L1413.4 682.3L1411.8 683.4L1410.1 684.6L1408.5 685.7L1406.8 686.9L1405.2 688.0L1403.6 689.2L1401.9 690.3L1400.3 691.5L1398.7 692.6L1397.0 693.8L1395.4 694.9L1393.8 696.1L1392.1 697.2L1390.5 698.4L1388.8 699.5L1387.2 700.7L1385.6 701.8L1383.9 703.0L1382.3 704.1L1380.7 705.3L1379.0 706.4L1377.4 707.6L1375.8 708.7L1374.1 709.9L1372.5 711.0L1370.8 712.2L1369.2 713.3L1367.6 714.5L1365.9 715.6L1364.3 716.8L1362.7 717.9L1361.0 719.1L1359.4 720.2L1357.8 721.4L1356.1 722.5L1354.5 723.7L1352.8 724.8L1351.2 726.0L1349.6 727.1L1347.9 728.3L1346.3 729.4L1344.7 730.6L1343.0 731.7L1341.4 732.9L1339.8 734.0L1338.1 735.2L1336.5 736.3L1334.9 737.5L1333.2 738.6L1331.6 739.8L1329.9 740.9L1328.3 742.1L1326.7 743.2L1325.0 744.4L1323.4 745.5L1321.8 746.7L1320.1 747.8L1318.5 749.0L1316.9 750.1L1315.2 751.3L1313.6 752.4L1311.9 753.6L1310.3 754.7L1308.7 755.9L1307.0 757.0L1305.4 758.2L1303.8 759.3L1302.1 760.5L1300.5 761.6L1298.9 762.8L1297.2 763.9L1295.6 765.1L1293.9 766.2L1292.3 767.4L1290.7 768.5L1289.0 769.7L1287.4 770.8L1285.8 772.0L1284.1 773.1L1282.5 774.3L1280.9 775.4L1279.2 776.6L1277.6 777.8L1275.9 778.9L1274.3 780.1L1272.7 781.2L1271.0 782.4L1269.4 783.5L1267.8 784.7L1266.1 785.8L1264.5 787.0L1262.9 788.1L1261.2 789.3L1259.6 790.4L1257.9 791.6L1256.3 792.7L1254.7 793.9L1253.0 795.0L1251.4 796.2L1249.8 797.3L1248.1 798.5L1246.5 799.6L1244.9 800.8L1243.2 801.9L1241.6 803.1L1240.0 804.2L1238.3 805.4L1236.7 806.5L1235.0 807.7L1233.4 808.8L1231.8 810.0L1230.1 811.1L1228.5 812.3L1226.9 813.4L1225.2 814.6L1223.6 815.7L1222.0 816.9L1220.3 818.0L1218.7 819.2L1217.0 820.3L1215.4 821.5L1213.8 822.6L1212.1 823.8L1210.5 824.9L1208.9 826.1L1207.2 827.2L1205.6 828.4L1204.0 829.5L1202.3 830.7L1200.7 831.8L1199.0 833.0L1197.4 834.1L1195.8 835.3L1194.1 836.4L1192.5 837.6L1190.9 838.7L1189.2 839.9L1187.6 841.0L1186.0 842.2L1184.3 843.3L1182.7 844.5L1181.0 845.6L1179.4 846.8L1177.8 847.9L1176.1 849.1L1174.5 850.2L1172.9 851.4L1171.2 852.5L1169.6 853.7L1168.0 854.8L1166.3 856.0L1164.7 857.1L1163.0 858.3L1161.4 859.4L1159.8 860.6L1158.1 861.7L1156.5 862.9L1154.9 864.0L1153.2 865.2L1151.6 866.3L1150.0 867.5L1148.3 868.6L1146.7 869.8L1145.1 870.9L1143.4 872.1L1141.8 873.2L1140.1 874.4L1138.5 875.5L1136.9 876.7L1135.2 877.8L1133.6 879.0L1132.0 880.1L1130.3 881.3L1128.7 882.4L1127.1 883.6L1125.4 884.7L1123.8 885.9L1122.1 887.0L1120.5 888.2L1118.9 889.3L1117.2 890.5L1115.6 891.6L1114.0 892.8L1112.3 893.9L1110.7 895.1L1109.1 896.2L1107.4 897.4L1105.8 898.5L1104.1 899.7L1102.5 900.8L1100.9 902.0L1099.2 903.1L1097.6 904.3L1096.0 905.4L1094.3 906.6L1092.7 907.7L1091.1 908.9L1089.4 910.0L1087.8 911.2L1086.1 912.3L1084.5 913.5L1082.9 914.6L1081.2 915.8L1079.6 916.9L1078.0 918.1L1076.3 919.2L1074.7 920.4L1073.1 921.5L1071.4 922.7L1069.8 923.8L1068.1 925.0L1066.5 926.1L1064.9 927.3L1063.2 928.4L1061.6 929.5L1059.9 930.6L1058.3 931.8L1056.6 932.9L1054.9 933.9L1053.2 935.0L1051.5 936.1L1049.8 937.1L1048.1 938.2L1046.4 939.2L1044.7 940.2L1043.0 941.2L1041.2 942.2L1039.5 943.2L1037.7 944.2L1036.0 945.1L1034.2 946.1L1032.4 947.0L1030.7 947.9L1028.9 948.8L1027.1 949.7L1025.3 950.6L1023.5 951.4L1021.7 952.3L1019.8 953.1L1018.0 953.9L1016.2 954.7L1014.3 955.5L1012.5 956.3L1010.6 957.0L1008.8 957.8L1006.9 958.5L1005.1 959.2L1003.2 959.9L1001.3 960.6L999.4 961.3L997.5 961.9L995.6 962.5L993.7 963.1L991.8 963.7L989.9 964.3L988.0 964.9L986.1 965.4L984.1 966.0L982.2 966.5L980.3 967.0L978.3 967.4L976.4 967.9L974.4 968.3L972.5 968.8L970.5 969.2L968.5 969.6L966.6 969.9L964.6 970.3L962.6 970.6L960.7 970.9L958.7 971.2L956.7 971.5L954.7 971.7L952.7 972.0L950.7 972.2L948.8 972.4L946.8 972.5L944.8 972.7L942.8 972.8L940.8 972.9L938.8 973.0L936.8 973.1L934.8 973.1L932.8 973.2L930.8 973.2L928.8 973.1L926.8 973.1L924.8 973.1L922.8 973.0L920.8 972.9L918.8 972.7L916.8 972.6L914.8 972.4L912.8 972.2L910.8 972.0L908.8 971.8L906.9 971.5L904.9 971.3L902.9 971.0L900.9 970.6L899.0 970.3L897.0 969.9L895.0 969.5L893.1 969.1L891.1 968.7L889.2 968.2L887.2 967.7L885.3 967.2L883.4 966.7L881.5 966.2L879.5 965.6L877.6 965.0L875.7 964.4L873.8 963.8L871.9 963.1L870.1 962.4L868.2 961.7L866.3 961.0L864.5 960.3L862.6 959.5L860.8 958.7L858.9 957.9L857.1 957.1L855.3 956.3L853.5 955.5L851.7 954.6L849.8 953.8L848.0 953.0L846.2 952.1L844.4 951.3L842.6 950.5L840.7 949.6L838.9 948.8L837.1 947.9L835.4 946.9L833.6 946.0L831.9 944.9L830.3 943.8L828.6 942.7L827.0 941.5L825.4 940.3L823.8 939.1L822.2 937.9L820.7 936.7L819.1 935.4L817.6 934.1L816.1 932.8L814.6 931.5L813.1 930.2L811.6 928.9L810.2 927.6L808.7 926.2L807.3 924.8L805.9 923.5L804.5 922.1L803.2 920.7L801.8 919.2L800.5 917.8L799.2 916.4L797.8 914.9L796.6 913.5L795.3 912.0L794.0 910.5L792.8 909.0L791.5 907.5L790.3 906.0L789.1 904.4L788.0 902.9L786.8 901.4L785.6 899.8L784.5 898.2L783.4 896.7L782.3 895.1L781.2 893.5L780.1 891.9L779.1 890.3L778.0 888.6L777.0 887.0L776.0 885.4L775.0 883.8L774.0 882.1L773.0 880.4L772.0 878.8L771.1 877.1L770.2 875.4L769.3 873.8L768.3 872.1L767.5 870.4L766.6 868.7L765.7 867.0L764.9 865.2L764.0 863.5L763.2 861.8L762.4 860.1L761.6 858.3L760.9 856.6L760.1 854.8L759.3 853.1L758.6 851.3L757.9 849.6L757.2 847.8L756.5 846.0L755.8 844.3L755.1 842.5L754.4 840.7L753.8 838.9L753.2 837.1L752.5 835.3L751.9 833.5L751.3 831.7L750.7 829.9L750.2 828.1L749.6 826.3L749.1 824.4L748.5 822.6L748.0 820.8L747.5 819.0L747.0 817.1L746.5 815.3L746.0 813.4L745.6 811.6L745.1 809.8L744.7 807.9L744.3 806.1L743.8 804.2L743.4 802.4L743.0 800.5L742.7 798.6L742.3 796.8L741.9 794.9L741.6 793.0L741.2 791.2L740.9 789.3L740.6 787.4L740.3 785.5L740.0 783.7L739.7 781.8L739.5 779.9L739.2 778.0L739.0 776.1L738.7 774.3L738.5 772.4L738.3 770.5L738.1 768.6L737.9 766.7L737.7 764.8L737.5 762.9L737.4 761.0L737.2 759.1L737.1 757.2L737.0 755.3L736.8 753.5L736.7 751.6L736.6 749.7L736.5 747.8L736.5 745.9L736.4 744.0L736.3 742.1L736.3 740.2L736.2 738.3L736.2 736.4L736.2 734.5L736.2 732.6L736.2 730.7L736.2 728.7L736.2 726.8L736.3 724.9L736.3 723.0L736.4 721.1L736.4 719.2L736.5 717.3L736.6 715.4L736.7 713.5L736.8 711.6L736.9 709.7L737.0 707.8L737.1 705.9L737.3 704.0L737.4 702.1L737.6 700.2L737.7 698.4L737.9 696.5L738.1 694.6L738.3 692.7L738.5 690.8L738.7 688.9L738.9 687.0L739.2 685.1L739.4 683.2L739.6 681.3L739.9 679.4L740.2 677.6L740.4 675.7L740.7 673.8L741.0 671.9L741.3 670.0L741.6 668.1L742.0 666.3L742.3 664.4L742.6 662.5L743.0 660.6L743.3 658.8L743.7 656.9L744.1 655.0L744.5 653.2L744.9 651.3L745.3 649.4L745.7 647.6L746.1 645.7L746.5 643.9L746.9 642.0L747.4 640.2L747.8 638.3L748.3 636.5L748.8 634.6L749.2 632.8L749.7 630.9L750.2 629.1L750.7 627.2L751.2 625.4L751.8 623.6L752.3 621.7L752.8 619.9L753.4 618.1L753.9 616.3L754.5 614.4L755.1 612.6L755.6 610.8L756.2 609.0L756.8 607.2L757.4 605.4L758.0 603.6L758.6 601.8L759.3 600.0L759.9 598.2L760.5 596.4L761.2 594.6L761.9 592.8L762.5 591.0L763.2 589.2L763.9 587.4L764.6 585.7L765.3 583.9L766.0 582.1L766.7 580.4L767.4 578.6L768.2 576.8L768.9 575.1L769.6 573.3L770.4 571.6L771.2 569.8L771.9 568.1L772.7 566.4L773.5 564.6L774.3 562.9L775.1 561.2L775.9 559.4L776.7 557.7L777.6 556.0L778.4 554.3L779.2 552.6L780.1 550.9L780.9 549.2L781.8 547.5L782.7 545.8L783.5 544.1L784.4 542.4L785.3 540.7L786.2 539.1L787.1 537.4L788.1 535.7L789.0 534.1L789.9 532.4L790.9 530.8L791.8 529.1L792.8 527.5L793.7 525.8L794.7 524.2L795.7 522.6L796.7 520.9L797.7 519.3L798.7 517.7L799.7 516.1L800.7 514.5L801.7 512.9L802.7 511.3L803.8 509.7L804.8 508.1L805.9 506.5L806.9 505.0L808.0 503.4L809.1 501.8L810.2 500.3L811.3 498.7L812.4 497.2L813.5 495.6L814.6 494.1L815.7 492.5L816.8 491.0L818.0 489.5L819.1 488.0L820.3 486.5L821.4 485.0L822.6 483.5L823.8 482.0L824.9 480.5L826.1 479.0L827.3 477.5L828.5 476.1L829.7 474.6L830.9 473.2L832.2 471.7L833.4 470.3L834.6 468.8L835.9 467.4L837.1 466.0L838.4 464.6L839.6 463.2L840.9 461.8L842.2 460.4L843.5 459.0L844.8 457.6L846.1 456.2L847.4 454.9L848.7 453.5L850.0 452.2L851.4 450.8L852.7 449.5L854.0 448.1L855.4 446.8L856.7 445.5L858.1 444.2L859.5 442.9L860.9 441.6L862.2 440.3L863.6 439.1L865.0 437.8L866.4 436.5L867.8 435.3L869.3 434.0L870.7 432.8L872.1 431.6L873.6 430.4L875.0 429.1L876.5 427.9L877.9 426.8L879.4 425.6L880.9 424.4L882.3 423.2L883.8 422.1L885.3 420.9L886.8 419.8L888.3 418.7L889.9 417.5L891.4 416.4L892.9 415.3L894.4 414.2L896.0 413.2L897.5 412.1L899.1 411.0L900.6 410.0L902.2 408.9L903.8 407.9L905.4 406.9L906.9 405.9L908.5 404.9L910.1 403.9L911.7 402.9L913.3 401.9L915.0 401.0L916.6 400.0L918.2 399.1L919.9 398.2L921.5 397.3L923.1 396.4L924.8 395.5L926.5 394.6L928.1 393.7L929.8 392.9L931.5 392.0L933.2 391.2L934.9 390.4L936.6 389.6L938.3 388.8L940.0 388.0L941.7 387.2L943.4 386.4L945.1 385.7L946.9 385.0L948.6 384.3L950.4 383.5L952.1 382.9L953.9 382.2L955.6 381.5L957.4 380.9L959.2 380.2L960.9 379.6L962.7 379.0L964.5 378.4L966.3 377.8L968.1 377.2L969.9 376.7L971.7 376.1L973.5 375.6L975.3 375.1L977.2 374.6L979.0 374.1L980.8 373.7L982.7 373.2L984.5 372.8L986.4 372.4L988.2 372.0L990.1 371.6L991.9 371.2L993.8 370.9L995.7 370.6L997.6 370.2L999.4 369.9L1001.3 369.7L1003.2 369.4L1005.1 369.2L1007.0 368.9L1008.9 368.7L1010.8 368.5L1012.7 368.4L1014.6 368.2L1016.5 368.1L1018.5 367.9L1020.4 367.9L1022.3 367.8L1024.2 367.7L1026.1 367.7L1028.1 367.7L1030.0 367.7L1031.9 367.7L1033.9 367.7L1035.8 367.8L1037.8 367.9L1039.7 368.1L1041.7 368.3L1043.6 368.6L1045.6 368.9L1047.6 369.2L1049.5 369.5L1051.5 369.9L1053.5 370.2L1055.4 370.6L1057.4 370.9L1059.4 371.3L1061.3 371.6L1063.3 372.0L1065.3 372.3L1067.3 372.7L1069.2 373.0L1071.2 373.4L1073.2 373.7L1075.1 374.1L1077.1 374.4L1079.1 374.8L1081.0 375.1L1083.0 375.5L1085.0 375.8L1086.9 376.2L1088.9 376.5L1090.9 376.9L1092.9 377.2L1094.8 377.6L1096.8 377.9L1098.8 378.3L1100.7 378.6L1102.7 379.0L1104.7 379.3L1106.6 379.7L1108.6 380.0L1110.6 380.4L1112.5 380.7L1114.5 381.1L1116.5 381.4L1118.5 381.8L1120.4 382.1L1122.4 382.5L1124.4 382.8L1126.3 383.2L1128.3 383.5L1130.3 383.9L1132.2 384.2L1134.2 384.6L1136.2 384.9L1138.1 385.3L1140.1 385.6L1142.1 386.0L1144.1 386.3L1146.0 386.7L1148.0 387.0L1150.0 387.4L1151.9 387.7L1153.9 388.1L1155.9 388.4L1157.8 388.8L1159.8 389.1L1161.8 389.5L1163.7 389.8L1165.7 390.2L1167.7 390.5L1169.7 390.9L1171.6 391.2L1173.6 391.6L1175.6 391.9L1177.5 392.2L1179.5 392.6L1181.5 392.9L1183.4 393.3L1185.4 393.6L1187.4 394.0L1189.3 394.3L1191.3 394.7L1193.3 395.0L1195.3 395.4L1197.2 395.7L1199.2 396.1L1201.2 396.4L1203.1 396.8L1205.1 397.1L1207.1 397.5L1209.0 397.8L1211.0 398.2L1213.0 398.5L1214.9 398.9L1216.9 399.2L1218.9 399.6L1220.9 399.9L1222.8 400.3L1224.8 400.6L1226.8 401.0L1228.7 401.3L1230.7 401.7L1232.7 402.0L1234.6 402.4L1236.6 402.7L1238.6 403.1L1240.5 403.4L1242.5 403.8L1244.5 404.1L1246.5 404.5L1248.4 404.8L1250.4 405.2L1252.4 405.5L1254.3 405.9L1256.3 406.2L1258.3 406.6L1260.2 406.9L1262.2 407.3L1264.2 407.6L1266.1 408.0L1268.1 408.3L1270.1 408.7L1272.1 409.0L1274.0 409.4L1276.0 409.7L1278.0 410.1L1279.9 410.4L1281.9 410.8L1283.9 411.1L1285.8 411.5L1287.8 411.8L1289.8 412.2L1291.7 412.5L1293.7 412.9L1295.7 413.2L1297.7 413.6L1299.6 413.9L1301.6 414.3L1303.6 414.6L1305.5 415.0L1307.5 415.3L1309.5 415.7L1311.4 416.0L1313.4 416.4L1315.4 416.7L1317.3 417.1L1319.3 417.4L1321.3 417.8L1323.3 418.1L1325.2 418.5L1327.2 418.8L1329.2 419.2L1331.1 419.5L1333.1 419.9L1335.1 420.2L1337.0 420.6L1339.0 420.9L1341.0 421.3L1342.9 421.6L1344.9 422.0L1346.9 422.3L1348.9 422.7L1350.8 423.0L1352.8 423.4L1354.8 423.7L1356.7 424.1L1358.7 424.4L1360.7 424.8L1362.6 425.1L1364.6 425.5L1366.6 425.8L1368.5 426.2L1370.5 426.5L1372.5 426.9L1374.4 427.2L1376.4 427.6L1378.4 427.9L1380.4 428.3L1382.3 428.6L1384.3 429.0L1386.3 429.3L1388.2 429.7L1390.2 430.0L1392.2 430.4L1394.1 430.7L1396.1 431.0L1398.1 431.4L1400.0 431.7L1402.0 432.1L1404.0 432.4L1406.0 432.8L1407.9 433.1L1409.9 433.5L1411.9 433.8L1413.8 434.2L1415.8 434.5L1417.8 434.9L1419.7 435.2L1421.7 435.6L1423.7 435.9L1425.6 436.3L1427.6 436.6L1429.6 437.0L1431.6 437.3L1433.5 437.7L1435.5 438.0L1437.5 438.4L1439.4 438.7L1441.4 439.0L1443.4 439.4L1445.3 439.7L1447.3 440.1L1449.3 440.4L1451.2 440.8L1453.2 441.2L1455.2 441.5L1457.1 441.9L1459.1 442.2L1461.1 442.6L1463.0 443.0L1465.0 443.3L1467.0 443.7L1468.9 444.0L1470.9 444.4L1472.9 444.6L1474.8 444.8L1476.8 444.9L1478.7 444.9L1480.7 444.8L1482.7 444.8L1484.6 444.8L1486.6 445.0L1488.6 445.3L1490.5 445.7L1492.5 446.1L1494.4 446.6L1496.4 447.1L1498.2 447.8L1500.0 448.7L1501.8 449.6L1503.5 450.7L1505.1 451.8L1506.7 453.0L1508.2 454.3L1509.7 455.6L1511.2 456.9L1512.7 458.3L1514.1 459.7L1515.5 461.1L1516.8 462.6L1518.2 464.1L1519.5 465.6L1520.7 467.2L1522.0 468.7L1523.1 470.3L1524.3 472.0L1525.4 473.6L1526.5 475.3L1527.5 477.0L1528.5 478.8L1529.4 480.5L1530.3 482.3L1531.2 484.1L1532.0 486.0L1532.8 487.8L1533.5 489.7L1534.2 491.5L1534.9 493.4L1535.6 495.3L1536.2 497.2L1536.7 499.1L1537.3 501.0L1537.8 503.0L1538.3 504.9L1538.7 506.8L1539.1 508.8L1539.5 510.8L1539.8 512.7L1540.1 514.7L1540.3 516.7L1540.5 518.7L1540.7 520.7L1540.8 522.7L1540.9 524.7L1540.9 526.7L1540.9 528.7L1540.9 530.7L1540.8 532.7L1540.7 534.7L1540.5 536.7L1540.4 538.6L1540.1 540.6L1539.9 542.6L1539.6 544.6L1539.4 546.6L1539.0 548.6L1538.7 550.5L1538.3 552.5L1537.9 554.4L1537.5 556.4L1537.1 558.4L1536.6 560.3L1536.1 562.2L1535.6 564.2L1535.1 566.1L1534.5 568.0L1534.0 569.9L1533.4 571.9L1532.8 573.8L1532.1 575.6L1531.4 577.5L1530.7 579.4L1530.0 581.3L1529.3 583.1L1528.5 584.9L1527.6 586.8L1526.8 588.6L1525.9 590.3L1524.9 592.1L1523.9 593.8L1522.9 595.6L1521.9 597.3L1520.8 598.9L1519.7 600.6L1518.5 602.2L1517.3 603.8L1516.1 605.4L1514.8 607.0L1513.5 608.5L1512.2 610.0L1510.8 611.4L1509.4 612.8L1508.0 614.2L1506.5 615.6L1505.0 616.9L1503.5 618.2L1501.9 619.4L1500.4 620.7L1498.8 621.9L1497.3 623.1L1495.9 624.2L1494.5 625.2z" fill="#4d986b" stroke="#2b4a38" stroke-width="0.8"/><defs><path id="mesh" d="M1174 397L1197 425M1129 431L1112 461M1144 691L1160 725M885 961L903 971M1480 457L1496 447M908 514L934 521M1225 543L1264 543M1074 866L1095 897M1094 781L1079 809M968 633L1009 634M954 609L940 632M939 808L923 841M888 430L919 432M1445 456L1480 457M959 668L970 695M1324 429L1342 459M1176 812L1199 833M1178 692L1194 720M849 780L891 778M1264 543L1299 547M1072 460L1059 486M1446 637L1454 654M1360 430L1378 428M1240 521L1225 543M820 606L855 606M1095 897L1081 916M1062 930L1041 942M1317 631L1333 662M1367 665L1401 663M984 545L1010 572M1480 457L1512 460M988 720L975 751M1111 513L1142 513M824 903L785 898M987 841L1028 843M1461 607L1446 637M1467 487L1452 517M747 785L738 770M831 579L820 606M855 606L886 602M831 473L846 456M768 690L737 702M1222 424L1213 399M1093 425L1129 431M799 638L787 665M1126 725L1160 725M856 897L866 929M990 665L970 695M1360 430L1342 459M1347 575L1362 605M1087 487L1111 513M1463 549L1501 547M1479 518L1501 547M1142 513L1174 515M885 961L919 961M1209 636L1240 632M1197 603L1176 632M937 401L937 390M1259 426L1237 403M1129 431L1163 429M872 519L884 550M1538 503L1541 527M1160 725L1194 720M1197 666L1210 696M954 489L985 489M1094 781L1128 785M834 633L822 662M1308 457L1297 491M873 694L849 721M1501 547L1538 546M919 961L951 955M1075 572L1090 603M903 971L880 966M902 694L938 696M1225 543L1245 578M985 489L1026 490M1225 661L1243 692M1228 723L1206 752M1071 398L1071 373M937 401L919 432M1128 785L1164 780M902 694L890 723M832 867L869 873M851 839L869 873M1343 514L1375 517M1090 603L1129 605M832 867L824 903M1433 607L1446 637M880 966L857 957M992 958L998 962M957 381L979 374M1044 636L1025 664M772 749L799 752M1375 517L1410 514M1103 697L1126 725M869 873L905 872M955 549L973 576M786 837L762 858M1435 667L1415 681M820 606L834 633M755 726L736 725M939 459L954 489M1138 750L1164 780M979 374L1001 370M1111 513L1128 548M1075 637L1062 665M799 752L836 754M800 812L831 810M1265 781L1258 792M1243 753L1231 781M973 576L1010 572M1315 577L1332 605M849 721L869 749M1415 681L1395 695M772 879L762 858M1144 691L1178 692M1463 549L1482 574M1223 485L1264 488M869 749L891 778M916 667L902 694M831 810L871 809M841 514L858 550M1174 397L1163 429M1144 691L1126 725M772 749L737 748M1276 748L1265 781M1480 457L1473 445M1086 844L1107 871M1332 605L1362 605M1042 927L1041 942M762 858L753 837M866 460L862 440M798 577L789 606M1074 866L1053 902M1178 692L1210 696M1275 633L1257 661M951 955L927 973M1009 748L1044 750M1118 382L1142 386M959 668L938 696M1061 608L1075 637M1059 486L1078 514M1324 429L1308 457M1195 548L1213 577M1107 871L1138 868M1446 637L1474 640M1360 430L1355 424M1042 397L1048 369M1095 897L1101 902M1343 514L1360 546M1142 386L1166 390M1317 631L1293 663M1044 750L1074 754M955 429L973 455M925 783L939 808M824 903L799 916M1452 517L1432 549M1278 778L1258 792M1092 721L1108 750M736 725L737 702M990 665L1025 664M1174 397L1189 394M908 455L920 490M856 897L839 929M1078 514L1095 548M1079 809L1109 815M951 782L974 808M1087 487L1078 514M1479 518L1463 549M800 812L816 844M737 702L740 679M937 401L917 400M755 726L780 723M818 725L836 754M1197 666L1178 692M1297 491L1309 516M986 900L1021 896M816 844L807 874M1146 399L1129 431M1075 572L1061 608M1138 868L1121 888M1333 490L1343 514M1512 460L1498 487M1164 780L1176 812M851 839L832 867M940 572L973 576M1140 874L1121 888M841 514L817 491M1433 607L1414 632M1103 697L1144 691M1195 490L1223 485M1139 454L1157 488M1193 785L1212 810M1103 697L1092 721M955 549L940 572M786 837L772 879M1298 605L1332 605M1178 455L1195 490M1147 807L1121 838M815 543L858 550M1265 781L1278 778M1058 841L1040 874M1445 456L1426 436M1315 577L1298 605M1324 429L1331 420M916 667L959 668M770 813L786 837M1043 460L1072 460M919 432L939 459M1176 812L1161 843M869 749L849 780M841 514L815 543M858 550L884 550M1173 575L1213 577M772 749L738 770M1086 844L1074 866M1009 399L1001 370M1042 927L1062 930M959 668L990 665M903 637L916 667M1514 517L1541 527M1072 460L1112 461M951 955L951 972M1434 489L1467 487M1038 809L1079 809M1059 486L1043 514M1213 577L1245 578M905 928L919 961M1195 548L1173 575M1042 397L1024 368M768 635L799 638M1009 399L1042 397M1095 897L1121 888M1009 399L1019 428M940 572L954 609M1413 458L1434 489M1108 750L1128 785M955 429L939 459M1054 546L1095 548M1467 487L1498 487M956 900L986 900M905 872L925 902M942 928L951 955M925 783L902 812M789 606L768 635M799 638L834 633M1042 397L1071 398M1284 411L1307 415M1278 459L1308 457M787 665L803 696M1243 753L1276 748M1163 429L1178 455M908 455L888 485M1298 605L1317 631M1078 514L1054 546M1095 548L1128 548M939 868L956 900M1432 549L1448 578M1416 575L1448 578M1197 666L1225 661M1380 691L1395 695M1007 931L998 962M1140 634L1161 663M815 543L831 579M818 725L799 752M822 662L832 692M851 490L846 456M934 521L968 514M1197 425L1211 461M1053 902L1042 927M816 844L851 839M1297 491L1282 520M1308 457L1342 459M1448 578L1482 574M1009 634L1044 636M1022 606L1044 636M771 570L781 549M953 719L988 720M1053 902L1062 930M798 577L781 549M1173 575L1197 603M968 514L1007 516M1138 868L1140 874M1309 516L1327 550M1299 547L1327 550M1333 490L1309 516M905 928L942 928M1164 780L1147 807M1044 636L1075 637M781 549L792 529M955 429L990 426M1025 664L1039 695M925 783L951 782M1161 843L1160 861M1139 454L1128 485M836 754L823 778M1327 550L1360 546M942 928L972 926M906 576L919 603M1020 953L998 962M753 660L740 679M1343 690L1329 725M1473 445L1496 447M1054 546L1075 572M1062 665L1076 692M1062 723L1044 750M823 485L851 490M1058 841L1086 844M1528 490L1514 517M1146 399L1142 386M919 603L954 609M1260 608L1275 633M998 962L974 968M862 440L879 426M1324 429L1307 415M868 631L858 667M1194 720L1228 723M1416 575L1433 607M1212 516L1240 521M1383 457L1398 485M919 432L908 455M1086 844L1121 838M789 544L798 577M1275 633L1317 631M1519 575L1502 605M1009 399L979 374M879 426L898 412M934 521L955 549M903 637L883 662M1257 661L1276 690M1538 546L1539 551M1514 517L1538 503M951 955L974 968M1426 666L1415 681M1074 754L1062 779M970 695L988 720M1043 514L1024 543M1164 780L1193 785M1139 579L1161 602M857 957L835 947M905 928L885 961M1111 633L1120 666M1533 574L1523 596M1299 547L1315 577M1293 663L1309 691M1011 809L1028 843M1193 785L1231 781M1009 399L990 426M1413 458L1398 485M905 872L939 868M923 841L939 868M1108 750L1094 781M905 872L892 897M1393 550L1381 575M835 947L816 933M1231 781L1238 805M1001 370L1024 368M787 665L768 690M1163 429L1139 454M888 485L908 514M939 868L975 866M956 837L975 866M1024 543L1040 577M1432 549L1416 575M988 605L968 633M1024 368L1048 369M1140 634L1120 666M1007 931L1020 953M919 432L955 429M851 490L831 473M747 785L770 813M1210 696L1228 723M1282 520L1264 543M920 490L934 521M1461 607L1474 640M1376 709L1356 723M1381 575L1394 604M1022 606L1009 634M1343 632L1367 665M798 577L771 570M902 812L939 808M1212 810L1199 833M787 779L800 812M1138 868L1160 861M1276 748L1278 778M1519 575L1533 574M1309 516L1299 547M1498 487L1479 518M870 575L855 606M747 815L742 793M886 602L919 603M1380 631L1401 663M1025 664L1007 695M1174 515L1212 516M1128 485L1142 513M1539 551L1533 574M1105 398L1095 378M967 400L955 429M906 576L886 602M1227 603L1209 636M1163 429L1197 425M866 929L857 957M925 902L942 928M1157 488L1174 515M1342 459L1333 490M1514 517L1501 547M1146 399L1118 382M1260 608L1240 632M1026 490L1059 486M1258 724L1243 753M1329 725L1356 723M973 455L985 489M1025 783L1038 809M1383 457L1366 486M798 577L831 579M1109 573L1090 603M823 485L817 491M890 723L903 756M970 695L1007 695M1128 785L1109 815M1008 459L1026 490M1257 661L1243 692M1298 720L1276 748M1059 486L1087 487M789 544L792 529M770 813L742 793M883 843L869 873M974 808L956 837M1410 514L1452 517M1139 579L1129 605M1161 602L1197 603M921 727L941 749M1111 633L1089 664M866 460L908 455M836 754L869 749M1011 809L987 841M1398 485L1410 514M851 490L841 514M1452 517L1479 518M923 841L905 872M1010 572L1040 577M787 665L822 662M908 455L939 459M1264 488L1297 491M903 756L925 783M871 809L902 812M888 485L872 519M1121 838L1138 868M1024 543L1010 572M1512 460L1496 447M1040 577L1075 572M753 837L747 815M1210 696L1243 692M1240 632L1275 633M941 749L951 782M1297 491L1333 490M908 514L918 546M884 550L918 546M1343 690L1356 723M1394 604L1433 607M1461 607L1493 626M1381 575L1362 605M1112 461L1139 454M1074 754L1108 750M990 426L1008 459M1343 632L1333 662M938 696L970 695M918 546L955 549M1264 543L1278 577M1161 843L1138 868M1519 575L1539 551M1258 792L1238 805M938 696L921 727M1025 664L1062 665M1129 605L1161 602M869 873L856 897M1139 454L1178 455M1019 428L1043 460M1380 631L1367 665M892 897L866 929M1109 815L1147 807M1128 485L1111 513M989 782L1011 809M1278 577L1315 577M972 926L992 958M855 606L868 631M780 723L818 725M753 660L787 665M1172 750L1193 785M972 926L974 968M925 902L905 928M1142 513L1161 549M1021 896L1053 902M868 631L903 637M1105 398L1146 399M858 667L873 694M747 785L787 779M1222 424L1243 456M973 455L954 489M1161 549L1195 548M1366 486L1375 517M1501 547L1519 575M1121 888L1101 902M1257 661L1293 663M919 961L903 971M1178 692L1160 725M1355 424L1378 428M1362 605L1394 604M890 723L869 749M883 662L902 694M1107 871L1095 897M1259 426L1278 459M883 843L923 841M770 813L747 815M984 545L973 576M1090 603L1111 633M1019 723L1062 723M747 785L742 793M1211 461L1223 485M839 929L816 933M1375 517L1393 550M1166 390L1189 394M972 926L1007 931M789 606L763 591M1129 605L1140 634M1347 575L1332 605M919 432L917 400M804 510L817 491M1245 578L1278 577M1126 725L1138 750M1243 456L1264 488M903 756L891 778M803 696L818 725M872 519L858 550M973 576L988 605M1121 838L1107 871M940 632L959 668M1515 461L1529 481M1120 666L1144 691M831 810L851 839M740 679L744 657M1160 725L1172 750M941 749L925 783M908 514L884 550M1225 543L1213 577M1343 690L1376 709M1225 661L1210 696M951 972L927 973M1332 605L1343 632M968 633L990 665M1498 487L1528 490M990 426L973 455M1331 420L1355 424M1445 456L1467 487M1264 543L1245 578M1362 605L1380 631M820 606L799 638M917 400L937 390M1071 398L1105 398M1107 871L1121 888M1071 398L1093 425M755 726L737 748M1480 457L1498 487M1039 695L1062 723M1138 750L1128 785M1111 513L1095 548M939 459L920 490M975 866L986 900M989 782L974 808M972 926L951 955M855 606L834 633M1176 632L1197 666M1342 459L1383 457M849 721L836 754M792 529L804 510M1079 809L1086 844M888 430L898 412M1172 750L1164 780M1142 513L1128 548M1245 578L1260 608M1463 549L1448 578M768 690L780 723M1209 636L1225 661M858 667L832 692M866 460L846 456M1007 516L1043 514M1496 447L1515 461M954 489L968 514M1222 424L1211 461M1366 486L1343 514M1501 547L1482 574M1061 608L1044 636M990 426L1019 428M985 489L1007 516M1276 690L1298 720M1343 514L1327 550M1231 781L1212 810M770 813L753 837M1090 603L1075 637M1111 633L1140 634M1414 632L1426 666M824 903L816 933M851 490L888 485M1089 664L1103 697M1092 721L1074 754M989 782L1025 783M1211 461L1195 490M1375 517L1360 546M1174 397L1166 390M1042 397L1060 431M1298 720L1317 750M1007 695L1019 723M803 696L832 692M951 782L939 808M834 633L868 631M1126 725L1108 750M800 812L786 837M1121 838L1161 843M973 576L954 609M988 605L1022 606M1128 548L1161 549M755 726L772 749M940 632L916 667M1222 424L1259 426M1258 724L1298 720M885 961L857 957M986 900L1007 931M831 810L816 844M1225 661L1257 661M1223 485L1240 521M858 550L870 575M1332 605L1317 631M851 839L883 843M1343 632L1380 631M1482 574L1519 575M1333 662L1343 690M1528 490L1538 503M841 514L804 510M1231 781L1265 781M1038 809L1058 841M1445 456L1434 489M988 720L1019 723M870 575L906 576M1213 577L1227 603M1039 695L1076 692M1193 785L1176 812M1075 637L1111 633M772 749L787 779M987 841L1008 868M975 866L1008 868M1383 457L1402 432M951 782L989 782M975 866L956 900M1227 603L1260 608M1178 455L1157 488M1360 546L1393 550M1176 632L1161 663M903 756L941 749M807 874L772 879M888 430L879 426M1079 809L1058 841M768 690L803 696M1095 548L1109 573M1259 426L1284 411M858 667L883 662M768 690L755 726M954 609L988 605M974 968L951 972M939 808L974 808M954 489L934 521M823 778L831 810M1228 723L1258 724M1109 573L1139 579M1128 548L1139 579M1448 578L1461 607M1240 521L1282 520M1276 690L1309 691M1317 631L1343 632M1009 748L1025 783M898 412L917 400M968 514L984 545M1482 574L1502 605M1461 607L1502 605M940 572L919 603M831 579L870 575M1493 626L1474 640M1414 632L1401 663M942 928L919 961M1138 750L1172 750M956 900L972 926M1007 695L1039 695M1195 490L1212 516M1327 550L1347 575M1523 596L1508 614M1087 487L1128 485M1042 397L1019 428M1007 695L988 720M1298 605L1275 633M1197 603L1227 603M939 868L925 902M816 933L799 916M1093 425L1112 461M1498 487L1529 481M869 749L903 756M815 543L798 577M1360 546L1381 575M919 603L940 632M822 662L803 696M1197 425L1178 455M1043 460L1059 486M986 900L972 926M1048 369L1071 373M815 543L804 510M1212 516L1225 543M858 550L831 579M1053 902L1081 916M954 609L968 633M1173 575L1161 602M1243 692L1258 724M1356 723L1336 736M953 719L975 751M1072 460L1087 487M1038 809L1028 843M1333 662L1309 691M1240 521L1264 543M1434 489L1452 517M1342 459L1355 424M1213 577L1197 603M1161 843L1179 847M768 635L787 665M988 720L1009 748M939 459L973 455M742 793L738 770M1467 487L1479 518M831 579L855 606M1054 546L1040 577M1062 665L1039 695M1222 424L1237 403M856 897L892 897M799 638L822 662M1278 459L1297 491M888 430L862 440M1197 425L1222 424M1095 548L1075 572M1197 603L1209 636M937 401L957 381M1416 575L1394 604M1219 819L1199 833M1194 720L1206 752M1308 457L1333 490M873 694L890 723M934 521L918 546M1538 546L1541 527M1448 578L1433 607M1426 666L1435 667M1062 779L1079 809M970 695L953 719M1009 634L1025 664M1228 723L1243 753M902 812L923 841M968 514L955 549M1299 547L1278 577M1293 663L1276 690M886 602L903 637M992 958L974 968M1044 636L1062 665M1231 781L1258 792M956 900L942 928M786 837L753 837M1174 515L1195 548M1195 490L1174 515M1327 550L1315 577M1479 518L1514 517M956 837L939 868M849 721L890 723M823 485L841 514M1243 753L1265 781M822 662L858 667M1498 487L1515 461M1445 456L1473 445M1007 931L1041 942M919 603L903 637M920 490L908 514M1210 696L1194 720M1075 572L1109 573M916 667L938 696M823 778L849 780M1043 460L1026 490M1243 692L1276 690M815 543L792 529M1212 516L1195 548M798 577L820 606M1333 490L1366 486M975 751L989 782M832 692L849 721M798 577L763 591M1212 810L1219 819M787 779L770 813M1275 633L1293 663M1276 748L1297 764M1243 692L1228 723M1433 607L1461 607M824 903L856 897M953 719L941 749M1333 662L1367 665M1410 514L1432 549M1042 397L1071 373M1434 489L1410 514M1108 750L1138 750M1161 602L1176 632M955 549L984 545M807 874L824 903M768 635L753 660M1092 721L1126 725M1238 805L1219 819M1062 665L1089 664M1452 517L1463 549M1178 455L1211 461M1010 572L1022 606M1060 431L1072 460M1147 807L1176 812M1176 632L1209 636M1157 488L1142 513M1315 577L1347 575M871 809L883 843M744 657L749 635M1278 459L1264 488M818 725L849 721M1105 398L1129 431M1040 577L1061 608M841 514L872 519M1206 752L1231 781M1176 812L1212 810M873 694L902 694M1053 902L1095 897M1025 783L1011 809M903 637L940 632M1194 720L1172 750M749 635L755 613M1146 399L1174 397M816 844L832 867M884 550L906 576M1146 399L1163 429M787 779L823 778M1061 608L1090 603M1008 459L985 489M1394 604L1414 632M1195 548L1225 543M789 544L781 549M1062 779L1038 809M1009 634L990 665M902 812L883 843M1293 663L1333 662M1378 428L1402 432M1413 458L1445 456M921 727L903 756M918 546L940 572M1292 429L1308 457M1414 632L1446 637M923 841L956 837M1398 485L1375 517M886 602L868 631M789 606L820 606M1081 916L1062 930M1109 815L1121 838M1197 425L1213 399M1062 723L1092 721M1174 515L1161 549M1278 577L1298 605M1078 514L1111 513M753 660L749 635M956 837L987 841M1007 931L1042 927M1140 634L1176 632M1147 807L1161 843M817 491L831 473M1058 841L1074 866M1445 456L1449 440M1025 783L1062 779M1324 429L1355 424M1493 626L1508 614M832 692L873 694M1026 490L1043 514M1529 481L1538 503M1161 549L1173 575M1161 663L1178 692M1009 399L1024 368M1062 779L1094 781M975 751L951 782M786 837L807 874M832 692L818 725M1212 810L1238 805M1276 748L1317 750M927 973L903 971M1502 605L1493 626M824 903L839 929M1410 514L1393 550M1019 428L1008 459M807 874L832 867M1161 602L1140 634M866 460L888 485M937 390L957 381M789 606L799 638M1010 572L988 605M1060 431L1043 460M1076 692L1092 721M1454 654L1435 667M780 723L799 752M1008 868L1021 896M1007 931L992 958M1021 896L1042 927M871 809L851 839M1264 488L1282 520M1383 457L1413 458M770 813L800 812M1105 398L1093 425M1040 577L1022 606M1206 752L1193 785M1380 691L1376 709M1413 458L1426 436M1028 843L1040 874M1040 874L1053 902M785 898L772 879M1240 632L1257 661M919 961L927 973M884 550L870 575M883 662L873 694M1259 426L1243 456M1043 514L1078 514M1394 604L1380 631M1112 461L1128 485M1019 428L1060 431M1401 663L1395 695M918 546L906 576M1292 429L1278 459M1309 691L1329 725M839 929L835 947M1393 550L1432 549M1019 723L1044 750M789 606L755 613M1129 605L1111 633M1109 815L1086 844M836 754L849 780M1197 425L1189 394M919 432L898 412M1060 431L1093 425M888 485L920 490M1278 577L1260 608M753 660L744 657M803 696L780 723M1432 549L1463 549M891 778L902 812M1243 456L1223 485M1062 723L1074 754M1146 399L1166 390M920 490L954 489M1120 666L1103 697M1160 725L1138 750M1282 520L1309 516M868 631L883 662M1329 725L1317 750M1022 606L1061 608M1007 516L1024 543M1259 426L1292 429M968 633L959 668M1026 490L1007 516M1298 720L1329 725M1161 549L1139 579M1161 663L1144 691M1309 516L1343 514M1474 640L1454 654M1380 631L1414 632M1362 605L1343 632M1074 754L1094 781M1043 514L1054 546M1292 429L1324 429M1128 485L1157 488M1367 665L1380 691M1071 398L1060 431M1480 457L1467 487M1039 695L1019 723M906 576L940 572M799 916L785 898M866 460L851 490M1076 692L1103 697M1393 550L1416 575M1157 488L1195 490M799 752L823 778M1502 605L1508 614M1076 692L1062 723M1008 868L1040 874M1245 578L1227 603M780 723L772 749M1008 868L986 900M1260 608L1298 605M1021 896L1007 931M1071 373L1095 378M1209 636L1197 666M973 455L1008 459M941 749L975 751M1264 488L1240 521M1401 663L1380 691M988 605L1009 634M789 544L815 543M1028 843L1008 868M1040 874L1074 866M1413 458L1402 432M1336 736L1317 750M1040 874L1021 896M1292 429L1307 415M883 662L916 667M1282 520L1299 547M1008 459L1043 460M1240 632L1225 661M1095 378L1118 382M975 751L1009 748M888 430L908 455M974 808L1011 809M985 489L968 514M1276 690L1258 724M1139 579L1173 575M849 780L871 809M1074 866L1107 871M967 400L979 374M738 770L737 748M768 635L755 613M1112 461L1087 487M1309 691L1343 690M1501 547L1539 551M1519 575L1523 596M1401 663L1415 681M1498 487L1514 517M1044 750L1062 779M1089 664L1076 692M1011 809L1038 809M1398 485L1434 489M870 575L886 602M1309 691L1298 720M839 929L857 957M866 929L885 961M892 897L925 902M1019 723L1009 748M737 748L736 725M967 400L1009 399M1237 403L1260 407M1343 690L1380 691M1446 637L1426 666M1105 398L1118 382M1172 750L1206 752M967 400L990 426M1227 603L1240 632M1024 543L1054 546M925 902L956 900M891 778L871 809M1199 833L1179 847M1120 666L1161 663M1342 459L1366 486M1514 517L1538 546M1260 407L1284 411M753 660L768 690M1206 752L1243 753M885 961L880 966M1129 431L1139 454M1223 485L1212 516M1094 781L1109 815M1381 575L1416 575M1258 724L1276 748M1329 725L1336 736M755 613L763 591M1161 663L1197 666M939 808L956 837M890 723L921 727M1007 516L984 545M1109 573L1129 605M1176 812L1179 847M823 485L831 473M786 837L816 844M1528 490L1529 481M1446 637L1435 667M839 929L866 929M1128 785L1147 807M974 808L987 841M763 591L771 570M921 727L953 719M883 843L905 872M772 749L747 785M1367 665L1343 690M866 929L905 928M987 841L975 866M1383 457L1378 428M768 690L740 679M851 490L872 519M1426 436L1449 440M990 665L1007 695M1360 430L1383 457M891 778L925 783M807 874L785 898M799 752L787 779M1502 605L1523 596M1041 942L1020 953M1259 426L1260 407M1401 663L1426 666M834 633L858 667M1512 460L1515 461M1366 486L1398 485M1028 843L1058 841M823 778L800 812M1128 548L1109 573M846 456L862 440M1292 429L1284 411M937 401L967 400M1071 398L1095 378M937 401L955 429M888 430L866 460M902 694L921 727M1009 748L989 782M984 545L1024 543M832 867L856 897M849 780L831 810M1482 574L1461 607M967 400L957 381M1089 664L1120 666M768 635L749 635M1541 527L1539 551M1211 461L1243 456M938 696L953 719M1044 750L1025 783M869 873L892 897M755 726L737 702M1347 575L1381 575M892 897L905 928M1075 637L1089 664M1243 456L1278 459M1093 425L1072 460M872 519L908 514M1360 546L1347 575M940 632L968 633" stroke="#7e665c" stroke-opacity="0.62" stroke-width="0.85" fill="none"/></defs><use href="#mesh" clip-path="url(#cF)"/><ellipse cx="985.4" cy="671.5" rx="197.1" ry="147.6" transform="rotate(-67.8 985.4 671.5)" fill="#3a7051" stroke="#3a3a33" stroke-width="1.0" stroke-opacity="0.9"/><ellipse cx="981.4" cy="664.8" rx="197.1" ry="147.6" transform="rotate(-67.8 981.4 664.8)" fill="#4d986b" stroke="#2e3f35" stroke-width="1.0" /><clipPath id="cR"><ellipse cx="981.4" cy="664.8" rx="197.1" ry="147.6" transform="rotate(-67.8 981.4 664.8)" fill="none" stroke="none" stroke-width="1" /></clipPath><use href="#mesh" clip-path="url(#cR)"/><ellipse cx="976.5" cy="667.5" rx="110.5" ry="82.2" transform="rotate(-67.7 976.5 667.5)" fill="url(#gw)" stroke="#4a3a35" stroke-width="1" /><g clip-path="url(#cH)"><ellipse cx="966.0" cy="665.5" rx="110.5" ry="82.2" transform="rotate(-67.7 966.0 665.5)" fill="#ffffff" stroke="#5a4a45" stroke-width="0.8" /></g><ellipse cx="1133.3" cy="453.0" rx="26.8" ry="19.9" transform="rotate(-69 1133.3 453.0)" fill="url(#gw)" stroke="#2e2a28" stroke-width="0.9" /><g clip-path="url(#ch0)"><ellipse cx="1115.5" cy="444.0" rx="26.8" ry="19.9" transform="rotate(-69 1115.5 444.0)" fill="#ffffff" stroke="none" stroke-width="1" /></g><ellipse cx="987.0" cy="418.0" rx="26.8" ry="19.9" transform="rotate(-69 987.0 418.0)" fill="url(#gw)" stroke="#2e2a28" stroke-width="0.9" /><g clip-path="url(#ch1)"><ellipse cx="969.2" cy="409.0" rx="26.8" ry="19.9" transform="rotate(-69 969.2 409.0)" fill="#ffffff" stroke="none" stroke-width="1" /></g><ellipse cx="836.0" cy="529.0" rx="26.8" ry="19.9" transform="rotate(-69 836.0 529.0)" fill="url(#gw)" stroke="#2e2a28" stroke-width="0.9" /><g clip-path="url(#ch2)"><ellipse cx="818.2" cy="520.0" rx="26.8" ry="19.9" transform="rotate(-69 818.2 520.0)" fill="#ffffff" stroke="none" stroke-width="1" /></g><ellipse cx="774.0" cy="724.0" rx="26.8" ry="19.9" transform="rotate(-69 774.0 724.0)" fill="url(#gw)" stroke="#2e2a28" stroke-width="0.9" /><g clip-path="url(#ch3)"><ellipse cx="756.2" cy="715.0" rx="26.8" ry="19.9" transform="rotate(-69 756.2 715.0)" fill="#ffffff" stroke="none" stroke-width="1" /></g><ellipse cx="832.5" cy="886.0" rx="26.8" ry="19.9" transform="rotate(-69 832.5 886.0)" fill="url(#gw)" stroke="#2e2a28" stroke-width="0.9" /><g clip-path="url(#ch4)"><ellipse cx="814.7" cy="877.0" rx="26.8" ry="19.9" transform="rotate(-69 814.7 877.0)" fill="#ffffff" stroke="none" stroke-width="1" /></g><ellipse cx="981.0" cy="921.0" rx="26.8" ry="19.9" transform="rotate(-69 981.0 921.0)" fill="url(#gw)" stroke="#2e2a28" stroke-width="0.9" /><g clip-path="url(#ch5)"><ellipse cx="963.2" cy="912.0" rx="26.8" ry="19.9" transform="rotate(-69 963.2 912.0)" fill="#ffffff" stroke="none" stroke-width="1" /></g><ellipse cx="1130.0" cy="809.5" rx="26.8" ry="19.9" transform="rotate(-69 1130.0 809.5)" fill="url(#gw)" stroke="#2e2a28" stroke-width="0.9" /><g clip-path="url(#ch6)"><ellipse cx="1112.2" cy="800.5" rx="26.8" ry="19.9" transform="rotate(-69 1112.2 800.5)" fill="#ffffff" stroke="none" stroke-width="1" /></g><ellipse cx="1193.0" cy="615.0" rx="26.8" ry="19.9" transform="rotate(-69 1193.0 615.0)" fill="url(#gw)" stroke="#2e2a28" stroke-width="0.9" /><g clip-path="url(#ch7)"><ellipse cx="1175.2" cy="606.0" rx="26.8" ry="19.9" transform="rotate(-69 1175.2 606.0)" fill="#ffffff" stroke="none" stroke-width="1" /></g><ellipse cx="987.0" cy="418.0" rx="26.8" ry="19.9" transform="rotate(-69 987.0 418.0)" fill="none" stroke="#f2a040" stroke-width="2.6" /><ellipse cx="969.2" cy="409.0" rx="26.8" ry="19.9" transform="rotate(-69 969.2 409.0)" fill="none" stroke="#f2a040" stroke-width="2.6" /><ellipse cx="774.0" cy="724.0" rx="26.8" ry="19.9" transform="rotate(-69 774.0 724.0)" fill="none" stroke="#f2a040" stroke-width="2.6" /><ellipse cx="756.2" cy="715.0" rx="26.8" ry="19.9" transform="rotate(-69 756.2 715.0)" fill="none" stroke="#f2a040" stroke-width="2.6" /><defs><linearGradient id="gbw" x1="0.1" y1="0.9" x2="0.7" y2="0.1"><stop offset="0" stop-color="#1f4e34"/><stop offset="0.5" stop-color="#3a7452"/><stop offset="0.85" stop-color="#5a9a72"/><stop offset="1" stop-color="#4f956b"/></linearGradient></defs><ellipse cx="1451.2" cy="545.9" rx="64.3" ry="47.7" transform="rotate(-69 1451.2 545.9)" fill="url(#gbw)" stroke="#2a3a30" stroke-width="0.9" /><ellipse cx="1469.0" cy="554.0" rx="64.3" ry="47.7" transform="rotate(-69 1469.0 554.0)" fill="#4d986b" stroke="#2a3a30" stroke-width="1.0" /><use href="#mesh" clip-path="url(#cB)"/><ellipse cx="1469.5" cy="554.5" rx="33.0" ry="24.5" transform="rotate(-69 1469.5 554.5)" fill="#53996f" stroke="#4a5a8a" stroke-width="1.2" /><path d="M1450 540l25-14 18 20-20 8z" fill="#3f7a57" opacity="0.8"/><path d="M1450 540l23 14-8 22" fill="none" stroke="#6a7aa8" stroke-width="0.8"/><g><path d="M721.9 787.6A26 26 0 0 1 704.6 804.9M689.4 804.9A26 26 0 0 1 672.1 787.6M672.1 772.4A26 26 0 0 1 689.4 755.1M704.6 755.1A26 26 0 0 1 721.9 772.4" fill="none" stroke="#111" stroke-width="1.5" stroke-dasharray="4 1.5"/><rect x="694.6" y="745.6" width="5" height="68.6" fill="#f4f4f4" stroke="#111" stroke-width="1.3"/><rect x="662.6" y="776.9" width="68.6" height="5" fill="#f4f4f4" stroke="#111" stroke-width="1.3"/><rect x="695.3" y="777.6" width="3.6" height="3.6" fill="#f4f4f4"/></g></svg><div style="left:168px;top:178px;width:352px;height:527px;background:#f0eef2;border:1px solid #cfcfd4;box-shadow:1px 1px 3px rgba(0,0,0,0.12)"></div><div style="left:168px;top:178px;width:352px;height:25px;background:#0e6582"></div><svg style="left:175px;top:184px;" width="14" height="14" viewBox="0 0 14 14"><path d="M7 .8l1.3 1.9 2.2-.7.3 2.3 2.3.3-.7 2.2 1.9 1.3-1.9 1.3.7 2.2-2.3.3-.3 2.3-2.2-.7L7 13.2l-1.3-1.9-2.2.7-.3-2.3-2.3-.3.7-2.2L-.3 7l1.9-1.3-.7-2.2 2.3-.3.3-2.3 2.2.7z" fill="#d8eef6"/><circle cx="7" cy="7" r="2.3" fill="#0e6582"/></svg><div class="t" style="left:196.8px;top:183.1px;font-size:13.5px;line-height:17px;color:#d9eef6;transform:scaleX(0.981);">Force</div><svg style="left:456px;top:184px;" width="14" height="14" viewBox="0 0 14 14"><path d="M3.5 3.5A5 5 0 1 0 7 2" fill="none" stroke="#d9eef6" stroke-width="1.9"/><path d="M1.5 1.5h4.5v4.5z" fill="#d9eef6"/></svg><div class="t" style="left:476.3px;top:183.1px;font-size:14px;line-height:18px;color:#d9eef6;font-weight:bold;transform:scaleX(1.216);">?</div><svg style="left:498px;top:184px;" width="13" height="13" viewBox="0 0 13 13"><path d="M1.5 1.5l10 10M11.5 1.5l-10 10" stroke="#e6f4f8" stroke-width="2"/></svg><div style="left:174px;top:207px;width:340px;height:43px;background:#fff;border:1px solid #dadade"></div><div style="left:183px;top:216px;width:322px;height:26px;background:#fff;border:1px solid #6e6e6e"></div><svg style="left:187px;top:220px;" width="17" height="17" viewBox="0 0 17 17"><path d="M2 15L3.5 3M2 15l11-5M2 15l8 -9" stroke="#c02040" stroke-width="1.2" fill="none"/><path d="M9 3q3 -1 5 1" stroke="#3040c0" stroke-width="1.1" fill="none"/><path d="M14 1.5v3.5h-3.5" fill="#3040c0"/></svg><div class="t" style="left:207.7px;top:221.3px;font-size:12px;line-height:15px;color:#1e1e1e;transform:scaleX(1.018);">Magnitude and Direction</div><svg style="left:491px;top:226px;" width="8" height="4" viewBox="0 0 8 4"><path d="M0 0h8l-4.0 3.5z" fill="#222"/></svg><div style="left:178px;top:256px;width:332px;height:22px;background:#fff;border:1px solid #dadade"></div><svg style="left:187px;top:262.0px;" width="5" height="9" viewBox="0 0 5 9"><path d="M0 0l4.5 4.5L0 9z" fill="#2c7c8e"/></svg><div class="t" style="left:198.9px;top:260.1px;font-size:12px;line-height:15px;color:#2c7c8e;transform:scaleX(1.029);">Name</div><div style="left:178px;top:281px;width:332px;height:22px;background:#fff;border:1px solid #dadade"></div><svg style="left:187px;top:287.0px;" width="5" height="9" viewBox="0 0 5 9"><path d="M0 0l4.5 4.5L0 9z" fill="#2c7c8e"/></svg><div class="t" style="left:198.9px;top:285.1px;font-size:12px;line-height:15px;color:#2c7c8e;transform:scaleX(1.006);">Destination Folder</div><div style="left:178px;top:306px;width:332px;height:145px;background:#fff;border:1px solid #dadade"></div><svg style="left:186px;top:314.5px;" width="9" height="5" viewBox="0 0 9 5"><path d="M0 0h8L4 4.5z" fill="#2c7c8e"/></svg><div class="t" style="left:198.9px;top:310.1px;font-size:12px;line-height:15px;color:#2c7c8e;transform:scaleX(1.016);">Model Objects</div><div style="left:188px;top:337px;width:13px;height:13px;background:#fff;border:1px solid #6a6a6a;border-radius:2px"></div><div class="t" style="left:204.9px;top:337.3px;font-size:12px;line-height:15px;color:#1e1e1e;transform:scaleX(0.964);">Group Reference</div><div style="left:187px;top:358px;width:314px;height:22px;background:#fff;border:1px solid #dadade"></div><svg style="left:197px;top:364.5px;" width="5" height="9" viewBox="0 0 5 9"><path d="M0 0l4.5 4.5L0 9z" fill="#2c7c8e"/></svg><div class="t" style="left:209.9px;top:362.6px;font-size:12px;line-height:15px;color:#2c7c8e;transform:scaleX(0.978);">Body Focus</div><div style="left:187px;top:384px;width:314px;height:31px;background:#fae07c"></div><svg style="left:188px;top:391px;" width="14" height="14" viewBox="0 0 14 14"><path d="M1 7l4 5 8-11" fill="none" stroke="#3ec43e" stroke-width="1.8"/></svg><div class="t" style="left:206.9px;top:392.3px;font-size:12px;line-height:15px;color:#111;transform:scaleX(0.965);">Select Object (2)</div><div style="left:434px;top:384px;width:32px;height:31px;background:#f7da6e;border:1px solid #e7c75a"></div><svg style="left:441px;top:390px;" width="18" height="18" viewBox="0 0 18 18"><circle cx="9" cy="9" r="6" fill="none" stroke="#333" stroke-width="1.1"/><path d="M9 1v16M1 9h16" stroke="#333" stroke-width="1.1"/></svg><div style="left:469px;top:384px;width:32px;height:31px;background:#f7da6e;border:1px solid #7a6a30"></div><div style="left:479px;top:399px;width:2px;height:2px;background:#222"></div><div style="left:485px;top:399px;width:2px;height:2px;background:#222"></div><div style="left:491px;top:399px;width:2px;height:2px;background:#222"></div><div style="left:187px;top:420px;width:314px;height:22px;background:#fff;border:1px solid #dadade"></div><svg style="left:197px;top:426.0px;" width="5" height="9" viewBox="0 0 5 9"><path d="M0 0l4.5 4.5L0 9z" fill="#2c7c8e"/></svg><div class="t" style="left:209.9px;top:424.1px;font-size:12px;line-height:15px;color:#2c7c8e;transform:scaleX(0.976);">Excluded</div><div style="left:178px;top:454px;width:332px;height:60px;background:#fff;border:1px solid #dadade"></div><svg style="left:186px;top:463px;" width="9" height="5" viewBox="0 0 9 5"><path d="M0 0h8L4 4.5z" fill="#2c7c8e"/></svg><div class="t" style="left:198.9px;top:458.6px;font-size:12px;line-height:15px;color:#2c7c8e;transform:scaleX(1.047);">Magnitude</div><div class="t" style="left:186.9px;top:485.8px;font-size:12px;line-height:15px;color:#1e1e1e;transform:scaleX(0.976);">Force</div><div style="left:285px;top:482px;width:216px;height:23px;background:#fff;border:1px solid #6e6e6e"></div><div style="left:292px;top:486px;width:1px;height:14px;background:#111"></div><div class="t" style="left:448.9px;top:487.3px;font-size:12px;line-height:15px;color:#2a2a3a;transform:scaleX(1.062);">N</div><svg style="left:475px;top:492px;" width="5" height="4" viewBox="0 0 5 4"><path d="M0 0h5l-2.5 3.5z" fill="#222"/></svg><div style="left:486px;top:491px;width:10px;height:1px;background:#333"></div><div style="left:486px;top:495px;width:10px;height:1px;background:#333"></div><div style="left:178px;top:517px;width:332px;height:94px;background:#fff;border:1px solid #dadade"></div><svg style="left:186px;top:525.5px;" width="9" height="5" viewBox="0 0 9 5"><path d="M0 0h8L4 4.5z" fill="#2c7c8e"/></svg><div class="t" style="left:198.9px;top:521.1px;font-size:12px;line-height:15px;color:#2c7c8e;transform:scaleX(1.050);">Direction</div><div class="t" style="left:186.9px;top:550.3px;font-size:12px;line-height:15px;color:#1e1e1e;transform:scaleX(1.061);">Method</div><div style="left:285px;top:545px;width:216px;height:23px;background:#fff;border:1px solid #6e6e6e"></div><div class="t" style="left:289.9px;top:550.3px;font-size:12px;line-height:15px;color:#1e1e1e;transform:scaleX(0.957);">Along Vector (FORCE)</div><svg style="left:487px;top:554px;" width="8" height="4" viewBox="0 0 8 4"><path d="M0 0h8l-4.0 3.5z" fill="#222"/></svg><svg style="left:188px;top:579px;" width="15" height="15" viewBox="0 0 15 15"><path d="M7.5 1v13M1.5 4l12 7M13.5 4l-12 7" stroke="#d0203a" stroke-width="1.9"/></svg><div class="t" style="left:206.9px;top:579.8px;font-size:12px;line-height:15px;color:#1e1e1e;transform:scaleX(0.977);">Specify Vector</div><div style="left:400px;top:574px;width:24px;height:24px;background:#fff;border:1px solid #c8c8c8"></div><svg style="left:403px;top:577px;" width="18" height="18" viewBox="0 0 18 18"><path d="M2 2l14 14M16 2L2 16" stroke="#c8c8c8" stroke-width="1"/><path d="M12 2h4v4M6 16H2v-4" fill="none" stroke="#c8c8c8"/></svg><div style="left:426px;top:574px;width:24px;height:24px;background:#fff;border:1px solid #555"></div><svg style="left:429px;top:577px;" width="18" height="18" viewBox="0 0 18 18"><path d="M9 2v9" stroke="#222" stroke-width="1.2"/><path d="M7.5 4l1.5-3 1.5 3z" fill="#222"/><circle cx="3" cy="15.5" r="0.9" fill="#222"/><circle cx="9" cy="15.5" r="0.9" fill="#222"/><circle cx="15" cy="15.5" r="0.9" fill="#222"/></svg><div style="left:452px;top:570px;width:49px;height:31px;background:#b5dbe5;border:1px solid #3c9db0"></div><div style="left:483px;top:571px;width:1px;height:29px;background:#3c9db0"></div><svg style="left:455px;top:573px;" width="26" height="26" viewBox="0 0 26 26"><path d="M4 24V4" stroke="#333" stroke-width="1.2"/><path d="M2.5 7L4 1l1.5 6z" fill="#333"/><path d="M19 4l-8 10h5l-5 10 10-12h-5l5-8z" fill="#f2c531" stroke="#b08a10" stroke-width="0.7"/></svg><svg style="left:489px;top:584px;" width="6" height="4" viewBox="0 0 6 4"><path d="M0 0h6l-3.0 3.5z" fill="#222"/></svg><div style="left:178px;top:614px;width:332px;height:21px;background:#fff;border:1px solid #dadade"></div><svg style="left:187px;top:619.5px;" width="5" height="9" viewBox="0 0 5 9"><path d="M0 0l4.5 4.5L0 9z" fill="#2c7c8e"/></svg><div class="t" style="left:198.9px;top:617.6px;font-size:12px;line-height:15px;color:#2c7c8e;transform:scaleX(1.049);">Distribution</div><div class="t" style="left:178.2px;top:643.3px;font-size:12px;line-height:15px;color:#1e1e1e;transform:scaleX(0.985);">Card Name</div><div class="t" style="left:249.4px;top:643.3px;font-size:12px;line-height:15px;color:#1e1e1e;transform:scaleX(0.899);">FORCE/FORCE1/FORCE2</div><div style="left:296px;top:671px;width:65px;height:22px;background:#f0eef2;border:1px solid #cfcfcf"></div><div class="t" style="left:320.4px;top:676.3px;font-size:12px;line-height:15px;color:#a9a9a9;transform:scaleX(0.934);">OK</div><div style="left:367px;top:671px;width:65px;height:22px;background:#f0eef2;border:1px solid #cfcfcf"></div><div class="t" style="left:384.4px;top:676.3px;font-size:12px;line-height:15px;color:#a9a9a9;transform:scaleX(1.073);">Apply</div><div style="left:438px;top:671px;width:66px;height:23px;background:#f4f3f6;border:1.5px solid #1f6372"></div><div class="t" style="left:452.9px;top:676.3px;font-size:12px;line-height:15px;color:#1e3a44;transform:scaleX(0.976);">Cancel</div></body></html>
